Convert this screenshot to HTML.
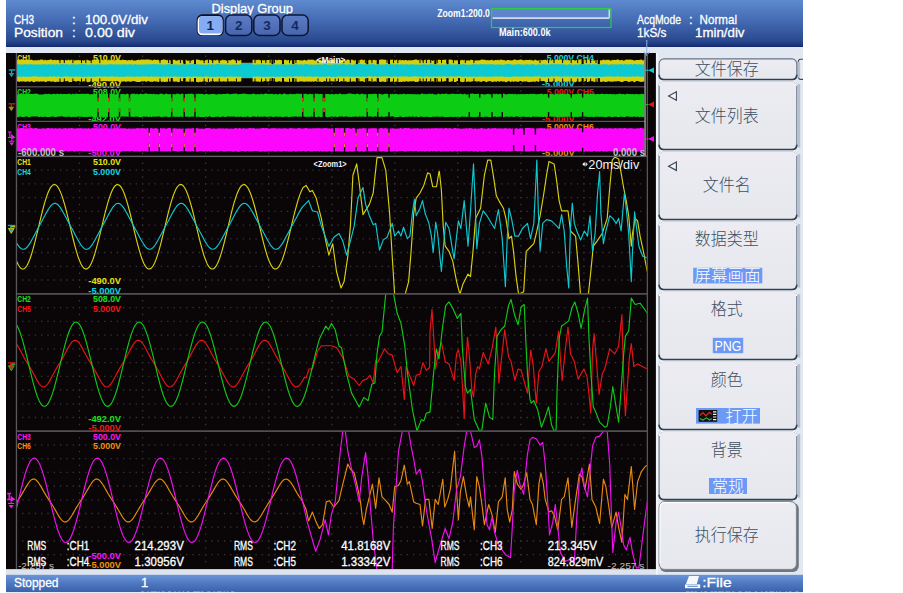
<!DOCTYPE html>
<html><head><meta charset="utf-8"><title>DL850 file save</title><style>html,body{margin:0;padding:0;background:#fff;overflow:hidden}svg{display:block}</style></head><body>
<svg width="903" height="593" viewBox="0 0 903 593" font-family='"Liberation Sans", "Noto Sans CJK SC", sans-serif'>
<defs>
<linearGradient id="hg" x1="0" y1="0" x2="0" y2="1"><stop offset="0" stop-color="#5e8ad0"/><stop offset="0.5" stop-color="#4066ae"/><stop offset="0.86" stop-color="#2b4a90"/><stop offset="0.96" stop-color="#1d3579"/><stop offset="1" stop-color="#13276a"/></linearGradient>
<linearGradient id="sg" x1="0" y1="0" x2="0" y2="1"><stop offset="0" stop-color="#6c95d8"/><stop offset="0.5" stop-color="#4d78c0"/><stop offset="1" stop-color="#3b62aa"/></linearGradient>
<linearGradient id="bg" x1="0" y1="0" x2="0" y2="1"><stop offset="0" stop-color="#ececf2"/><stop offset="1" stop-color="#e6e8ee"/></linearGradient>
</defs>
<rect width="903" height="593" fill="#fff"/>
<rect x="6" y="0" width="797" height="47" fill="url(#hg)"/>
<rect x="6" y="47" width="797" height="6" fill="#e2e8f1"/>
<rect x="655.9" y="53" width="147.10000000000002" height="522" fill="#e3e7ef"/>
<rect x="655.9" y="53" width="2.1" height="522" fill="#f3f5f9"/>
<rect x="6" y="53" width="649.9" height="516.4" fill="#0a0608"/>
<rect x="6" y="569.4" width="649.9" height="6" fill="#dde4ef"/>
<rect x="6" y="574.8" width="797" height="17.2" fill="url(#sg)"/>
<rect x="6" y="592" width="797" height="1" fill="#e8ecf4"/>
<text x="14.0" y="23.7" font-size="13.2" fill="#ffffff" textLength="20.0" lengthAdjust="spacingAndGlyphs" stroke="#ffffff" stroke-width="0.3">CH3</text>
<text x="72.0" y="23.7" font-size="13.2" fill="#ffffff" stroke="#ffffff" stroke-width="0.3">:</text>
<text x="85.0" y="23.7" font-size="13.2" fill="#ffffff" textLength="63.0" lengthAdjust="spacingAndGlyphs" stroke="#ffffff" stroke-width="0.3">100.0V/div</text>
<text x="14.0" y="36.5" font-size="13.2" fill="#ffffff" textLength="49.0" lengthAdjust="spacingAndGlyphs" stroke="#ffffff" stroke-width="0.3">Position</text>
<text x="72.0" y="36.5" font-size="13.2" fill="#ffffff" stroke="#ffffff" stroke-width="0.3">:</text>
<text x="85.0" y="36.5" font-size="13.2" fill="#ffffff" textLength="50.0" lengthAdjust="spacingAndGlyphs" stroke="#ffffff" stroke-width="0.3">0.00 div</text>
<text x="211.5" y="12.5" font-size="13.2" fill="#ffffff" textLength="81.5" lengthAdjust="spacingAndGlyphs" stroke="#ffffff" stroke-width="0.3">Display Group</text>
<linearGradient id="gb" x1="0" y1="0" x2="0" y2="1"><stop offset="0" stop-color="#5c7cc6"/><stop offset="1" stop-color="#4866ae"/></linearGradient>
<rect x="196.7" y="14.3" width="27" height="21.7" rx="5.5" fill="#0a1024"/>
<rect x="197.6" y="16.2" width="24.8" height="19" rx="4.5" fill="#fff"/>
<rect x="199.0" y="16.2" width="23.4" height="17.4" rx="3.5" fill="#84acf4"/>
<text x="210.3" y="30.0" font-size="13.5" fill="#12224a" font-weight="bold" text-anchor="middle">1</text>
<rect x="225.6" y="15.1" width="26.2" height="20.3" rx="5.5" fill="url(#gb)" stroke="#0c1530" stroke-width="1.5"/>
<text x="238.7" y="30.0" font-size="13.5" fill="#152a5c" font-weight="bold" text-anchor="middle">2</text>
<rect x="253.8" y="15.1" width="26.2" height="20.3" rx="5.5" fill="url(#gb)" stroke="#0c1530" stroke-width="1.5"/>
<text x="266.9" y="30.0" font-size="13.5" fill="#152a5c" font-weight="bold" text-anchor="middle">3</text>
<rect x="282.0" y="15.1" width="26.2" height="20.3" rx="5.5" fill="url(#gb)" stroke="#0c1530" stroke-width="1.5"/>
<text x="295.1" y="30.0" font-size="13.5" fill="#152a5c" font-weight="bold" text-anchor="middle">4</text>
<text x="437.3" y="16.7" font-size="10.2" fill="#ffffff" font-weight="bold" textLength="52.5" lengthAdjust="spacingAndGlyphs">Zoom1:200.0</text>
<rect x="491.5" y="8.5" width="119.5" height="9" fill="#5e84cc"/><rect x="491.5" y="8.5" width="119.5" height="19" fill="none" stroke="#2ccc48" stroke-width="1.2"/>
<rect x="492.5" y="17.4" width="117" height="1.4" fill="#f4f6fa"/>
<rect x="608.6" y="9.5" width="1.2" height="8" fill="#e8ecf4"/>
<text x="499.0" y="36.3" font-size="10.2" fill="#ffffff" font-weight="bold" textLength="51.5" lengthAdjust="spacingAndGlyphs">Main:600.0k</text>
<text x="637.0" y="23.7" font-size="13.2" fill="#ffffff" textLength="44.0" lengthAdjust="spacingAndGlyphs" stroke="#ffffff" stroke-width="0.3">AcqMode</text>
<text x="689.0" y="23.7" font-size="13.2" fill="#ffffff" stroke="#ffffff" stroke-width="0.3">:</text>
<text x="699.6" y="23.7" font-size="13.2" fill="#ffffff" textLength="37.4" lengthAdjust="spacingAndGlyphs" stroke="#ffffff" stroke-width="0.3">Normal</text>
<text x="637.0" y="36.5" font-size="13.2" fill="#ffffff" textLength="29.5" lengthAdjust="spacingAndGlyphs" stroke="#ffffff" stroke-width="0.3">1kS/s</text>
<text x="695.0" y="36.5" font-size="13.2" fill="#ffffff" textLength="49.5" lengthAdjust="spacingAndGlyphs" stroke="#ffffff" stroke-width="0.3">1min/div</text>
<path d="M646.8 40V56M644 51.5L646.8 55.5L649.6 51.5" stroke="#8fb0ea" stroke-width="1" fill="none"/>
<text x="17.3" y="60.5" font-size="9.9" fill="#e8e010" font-weight="bold" textLength="13.5" lengthAdjust="spacingAndGlyphs">CH1</text>
<text x="93.0" y="60.5" font-size="9.9" fill="#e8e010" font-weight="bold" textLength="28.0" lengthAdjust="spacingAndGlyphs">510.0V</text>
<text x="88.3" y="87.5" font-size="9.9" fill="#e8e010" font-weight="bold" textLength="32.7" lengthAdjust="spacingAndGlyphs">-490.0V</text>
<text x="17.3" y="95.0" font-size="9.9" fill="#18e020" font-weight="bold" textLength="13.5" lengthAdjust="spacingAndGlyphs">CH2</text>
<text x="93.0" y="95.0" font-size="9.9" fill="#18e020" font-weight="bold" textLength="28.0" lengthAdjust="spacingAndGlyphs">508.0V</text>
<text x="88.3" y="121.8" font-size="9.9" fill="#18e020" font-weight="bold" textLength="32.7" lengthAdjust="spacingAndGlyphs">-492.0V</text>
<text x="17.3" y="129.5" font-size="9.9" fill="#f818f8" font-weight="bold" textLength="13.5" lengthAdjust="spacingAndGlyphs">CH3</text>
<text x="93.0" y="129.5" font-size="9.9" fill="#f818f8" font-weight="bold" textLength="28.0" lengthAdjust="spacingAndGlyphs">500.0V</text>
<text x="88.3" y="156.1" font-size="9.9" fill="#f818f8" font-weight="bold" textLength="32.7" lengthAdjust="spacingAndGlyphs">-500.0V</text>
<text x="546.7" y="61.0" font-size="9.9" fill="#10d8e0" font-weight="bold" textLength="47.0" lengthAdjust="spacingAndGlyphs">5.000V CH4</text>
<text x="542.0" y="86.5" font-size="9.9" fill="#10d8e0" font-weight="bold" textLength="32.7" lengthAdjust="spacingAndGlyphs">-5.000V</text>
<text x="546.7" y="95.3" font-size="9.9" fill="#f01818" font-weight="bold" textLength="47.0" lengthAdjust="spacingAndGlyphs">5.000V CH5</text>
<text x="542.0" y="121.8" font-size="9.9" fill="#f01818" font-weight="bold" textLength="32.7" lengthAdjust="spacingAndGlyphs">-5.000V</text>
<text x="546.7" y="129.5" font-size="9.9" fill="#f09010" font-weight="bold" textLength="47.0" lengthAdjust="spacingAndGlyphs">5.000V CH6</text>
<text x="542.0" y="155.9" font-size="9.9" fill="#f09010" font-weight="bold" textLength="32.7" lengthAdjust="spacingAndGlyphs">-5.000V</text>
<rect x="79.0" y="55.6" width="1.2" height="1.2" fill="#4a484c"/>
<rect x="142.0" y="55.6" width="1.2" height="1.2" fill="#4a484c"/>
<rect x="205.0" y="55.6" width="1.2" height="1.2" fill="#4a484c"/>
<rect x="268.1" y="55.6" width="1.2" height="1.2" fill="#4a484c"/>
<rect x="331.1" y="55.6" width="1.2" height="1.2" fill="#4a484c"/>
<rect x="394.2" y="55.6" width="1.2" height="1.2" fill="#4a484c"/>
<rect x="457.2" y="55.6" width="1.2" height="1.2" fill="#4a484c"/>
<rect x="520.3" y="55.6" width="1.2" height="1.2" fill="#4a484c"/>
<rect x="583.3" y="55.6" width="1.2" height="1.2" fill="#4a484c"/>
<rect x="79.0" y="83.2" width="1.2" height="1.2" fill="#4a484c"/>
<rect x="142.0" y="83.2" width="1.2" height="1.2" fill="#4a484c"/>
<rect x="205.0" y="83.2" width="1.2" height="1.2" fill="#4a484c"/>
<rect x="268.1" y="83.2" width="1.2" height="1.2" fill="#4a484c"/>
<rect x="331.1" y="83.2" width="1.2" height="1.2" fill="#4a484c"/>
<rect x="394.2" y="83.2" width="1.2" height="1.2" fill="#4a484c"/>
<rect x="457.2" y="83.2" width="1.2" height="1.2" fill="#4a484c"/>
<rect x="520.3" y="83.2" width="1.2" height="1.2" fill="#4a484c"/>
<rect x="583.3" y="83.2" width="1.2" height="1.2" fill="#4a484c"/>
<rect x="79.0" y="90.4" width="1.2" height="1.2" fill="#4a484c"/>
<rect x="142.0" y="90.4" width="1.2" height="1.2" fill="#4a484c"/>
<rect x="205.0" y="90.4" width="1.2" height="1.2" fill="#4a484c"/>
<rect x="268.1" y="90.4" width="1.2" height="1.2" fill="#4a484c"/>
<rect x="331.1" y="90.4" width="1.2" height="1.2" fill="#4a484c"/>
<rect x="394.2" y="90.4" width="1.2" height="1.2" fill="#4a484c"/>
<rect x="457.2" y="90.4" width="1.2" height="1.2" fill="#4a484c"/>
<rect x="520.3" y="90.4" width="1.2" height="1.2" fill="#4a484c"/>
<rect x="583.3" y="90.4" width="1.2" height="1.2" fill="#4a484c"/>
<rect x="79.0" y="117.6" width="1.2" height="1.2" fill="#4a484c"/>
<rect x="142.0" y="117.6" width="1.2" height="1.2" fill="#4a484c"/>
<rect x="205.0" y="117.6" width="1.2" height="1.2" fill="#4a484c"/>
<rect x="268.1" y="117.6" width="1.2" height="1.2" fill="#4a484c"/>
<rect x="331.1" y="117.6" width="1.2" height="1.2" fill="#4a484c"/>
<rect x="394.2" y="117.6" width="1.2" height="1.2" fill="#4a484c"/>
<rect x="457.2" y="117.6" width="1.2" height="1.2" fill="#4a484c"/>
<rect x="520.3" y="117.6" width="1.2" height="1.2" fill="#4a484c"/>
<rect x="583.3" y="117.6" width="1.2" height="1.2" fill="#4a484c"/>
<rect x="79.0" y="124.8" width="1.2" height="1.2" fill="#4a484c"/>
<rect x="142.0" y="124.8" width="1.2" height="1.2" fill="#4a484c"/>
<rect x="205.0" y="124.8" width="1.2" height="1.2" fill="#4a484c"/>
<rect x="268.1" y="124.8" width="1.2" height="1.2" fill="#4a484c"/>
<rect x="331.1" y="124.8" width="1.2" height="1.2" fill="#4a484c"/>
<rect x="394.2" y="124.8" width="1.2" height="1.2" fill="#4a484c"/>
<rect x="457.2" y="124.8" width="1.2" height="1.2" fill="#4a484c"/>
<rect x="520.3" y="124.8" width="1.2" height="1.2" fill="#4a484c"/>
<rect x="583.3" y="124.8" width="1.2" height="1.2" fill="#4a484c"/>
<rect x="79.0" y="152.6" width="1.2" height="1.2" fill="#4a484c"/>
<rect x="142.0" y="152.6" width="1.2" height="1.2" fill="#4a484c"/>
<rect x="205.0" y="152.6" width="1.2" height="1.2" fill="#4a484c"/>
<rect x="268.1" y="152.6" width="1.2" height="1.2" fill="#4a484c"/>
<rect x="331.1" y="152.6" width="1.2" height="1.2" fill="#4a484c"/>
<rect x="394.2" y="152.6" width="1.2" height="1.2" fill="#4a484c"/>
<rect x="457.2" y="152.6" width="1.2" height="1.2" fill="#4a484c"/>
<rect x="520.3" y="152.6" width="1.2" height="1.2" fill="#4a484c"/>
<rect x="583.3" y="152.6" width="1.2" height="1.2" fill="#4a484c"/>
<path d="M17.0 59.8L18.0 59.6L19.0 60.2L20.0 59.5L21.0 60.1L22.0 59.9L23.0 59.5L24.0 60.1L25.0 59.4L26.0 60.0L27.0 59.5L28.0 59.5L29.0 60.0L30.0 60.5L31.0 59.6L32.0 59.7L33.0 60.2L34.0 60.6L35.0 60.2L36.0 59.9L37.0 60.7L38.0 59.5L39.0 60.5L40.0 59.8L41.0 59.6L42.0 59.6L43.0 59.8L44.0 60.5L45.0 59.6L46.0 60.2L47.0 60.2L48.0 59.9L49.0 60.1L50.0 59.5L51.0 59.5L52.0 59.7L53.0 60.3L54.0 60.0L55.0 59.8L56.0 60.2L57.0 60.0L58.0 59.8L59.0 60.4L60.0 60.3L61.0 59.7L62.0 60.1L63.0 60.1L64.0 60.5L65.0 60.3L66.0 59.8L67.0 60.7L68.0 59.6L69.0 59.9L70.0 60.4L71.0 59.6L72.0 60.0L73.0 59.5L74.0 60.3L75.0 60.4L76.0 60.1L77.0 60.5L78.0 59.8L79.0 60.3L80.0 60.2L81.0 60.2L82.0 60.0L83.0 60.5L84.0 60.6L85.0 60.0L86.0 60.3L87.0 59.5L88.0 60.3L89.0 60.2L90.0 60.7L91.0 60.5L92.0 59.8L93.0 59.9L94.0 60.3L95.0 59.4L96.0 60.0L97.0 59.6L98.0 59.6L99.0 59.5L100.0 60.4L101.0 59.6L102.0 59.7L103.0 59.9L104.0 60.5L105.0 59.5L106.0 60.0L107.0 60.1L108.0 60.5L109.0 60.5L110.0 60.5L111.0 59.8L112.0 59.9L113.0 59.9L114.0 60.5L115.0 60.6L116.0 59.6L117.0 59.6L118.0 59.7L119.0 59.7L120.0 60.0L121.0 60.2L122.0 59.7L123.0 59.4L124.0 59.9L125.0 59.9L126.0 60.1L127.0 60.6L128.0 60.3L129.0 60.1L130.0 60.2L131.0 60.3L132.0 59.5L133.0 60.6L134.0 60.4L135.0 60.5L136.0 60.4L137.0 59.9L138.0 59.9L139.0 59.5L140.0 60.2L141.0 59.5L142.0 59.5L143.0 59.7L144.0 59.6L145.0 59.8L146.0 59.5L147.0 59.4L148.0 59.6L149.0 59.5L150.0 59.9L151.0 59.4L152.0 60.5L153.0 60.2L154.0 59.6L155.0 59.7L156.0 59.9L157.0 59.9L158.0 59.6L159.0 60.5L160.0 60.7L161.0 60.0L162.0 60.0L163.0 59.5L164.0 59.5L165.0 59.8L166.0 59.7L167.0 60.5L168.0 59.6L169.0 59.4L170.0 60.6L171.0 60.1L172.0 59.6L173.0 60.1L174.0 59.4L175.0 60.1L176.0 60.7L177.0 60.5L178.0 60.3L179.0 59.7L180.0 59.9L181.0 59.6L182.0 60.4L183.0 60.1L184.0 60.4L185.0 59.8L186.0 59.7L187.0 60.5L188.0 60.7L189.0 60.5L190.0 60.4L191.0 60.5L192.0 60.4L193.0 59.7L194.0 60.1L195.0 59.9L196.0 59.4L197.0 59.4L198.0 59.8L199.0 59.7L200.0 60.3L201.0 60.6L202.0 60.0L203.0 60.6L204.0 60.7L205.0 60.6L206.0 59.9L207.0 59.7L208.0 59.7L209.0 59.7L210.0 59.7L211.0 60.2L212.0 60.6L213.0 60.5L214.0 60.0L215.0 60.2L216.0 60.4L217.0 59.5L218.0 60.3L219.0 60.6L220.0 60.4L221.0 60.4L222.0 60.0L223.0 59.6L224.0 60.4L225.0 59.8L226.0 60.4L227.0 60.7L228.0 59.9L229.0 59.9L230.0 60.6L231.0 60.3L232.0 59.6L233.0 59.6L234.0 59.6L235.0 60.6L236.0 60.4L237.0 59.6L238.0 60.5L239.0 60.7L240.0 60.3L241.0 59.9L242.0 60.1L243.0 59.6L244.0 59.4L245.0 60.7L246.0 60.2L247.0 60.1L248.0 60.6L249.0 60.0L250.0 60.5L251.0 60.5L252.0 59.7L253.0 59.7L254.0 59.8L255.0 59.7L256.0 60.2L257.0 59.7L258.0 59.9L259.0 59.6L260.0 60.6L261.0 59.9L262.0 60.0L263.0 60.2L264.0 60.6L265.0 59.9L266.0 60.6L267.0 60.1L268.0 60.1L269.0 60.1L270.0 59.4L271.0 60.0L272.0 59.6L273.0 59.4L274.0 60.4L275.0 59.6L276.0 60.0L277.0 60.3L278.0 60.1L279.0 59.8L280.0 60.1L281.0 60.1L282.0 60.4L283.0 59.5L284.0 60.1L285.0 59.7L286.0 59.8L287.0 60.4L288.0 60.1L289.0 60.1L290.0 60.4L291.0 60.6L292.0 60.0L293.0 60.2L294.0 60.1L295.0 60.1L296.0 60.3L297.0 60.0L298.0 60.1L299.0 60.0L300.0 60.6L301.0 60.3L302.0 60.5L303.0 60.6L304.0 59.7L305.0 60.1L306.0 60.6L307.0 60.5L308.0 59.6L309.0 59.6L310.0 60.0L311.0 59.5L312.0 59.7L313.0 59.5L314.0 60.3L315.0 60.4L316.0 60.6L317.0 59.6L318.0 60.3L319.0 60.3L320.0 59.6L321.0 60.5L322.0 60.7L323.0 59.7L324.0 60.6L325.0 59.9L326.0 60.0L327.0 60.7L328.0 60.5L329.0 59.6L330.0 60.0L331.0 60.1L332.0 59.8L333.0 59.7L334.0 59.8L335.0 60.3L336.0 59.4L337.0 60.1L338.0 60.0L339.0 59.4L340.0 59.8L341.0 60.2L342.0 60.1L343.0 59.5L344.0 60.7L345.0 60.4L346.0 60.7L347.0 59.5L348.0 59.7L349.0 59.5L350.0 60.4L351.0 59.8L352.0 59.6L353.0 59.9L354.0 60.6L355.0 60.5L356.0 59.7L357.0 59.6L358.0 60.6L359.0 60.1L360.0 60.3L361.0 59.5L362.0 59.5L363.0 60.3L364.0 60.0L365.0 59.5L366.0 60.6L367.0 60.2L368.0 60.4L369.0 59.5L370.0 60.5L371.0 59.5L372.0 60.5L373.0 60.0L374.0 59.8L375.0 60.1L376.0 60.6L377.0 59.7L378.0 59.6L379.0 60.1L380.0 59.7L381.0 59.5L382.0 59.6L383.0 59.5L384.0 59.7L385.0 59.8L386.0 59.8L387.0 60.4L388.0 59.8L389.0 60.1L390.0 59.6L391.0 59.9L392.0 59.4L393.0 59.7L394.0 59.4L395.0 60.4L396.0 60.1L397.0 59.6L398.0 60.0L399.0 60.6L400.0 59.5L401.0 60.5L402.0 60.0L403.0 60.0L404.0 60.5L405.0 59.9L406.0 60.1L407.0 60.3L408.0 60.7L409.0 59.8L410.0 60.5L411.0 60.3L412.0 60.2L413.0 59.9L414.0 59.9L415.0 59.5L416.0 59.6L417.0 59.5L418.0 60.4L419.0 59.7L420.0 59.6L421.0 59.5L422.0 60.5L423.0 60.5L424.0 60.3L425.0 59.8L426.0 59.7L427.0 59.8L428.0 60.0L429.0 59.6L430.0 60.0L431.0 59.7L432.0 60.7L433.0 60.7L434.0 60.1L435.0 59.7L436.0 60.7L437.0 59.8L438.0 59.9L439.0 59.4L440.0 59.9L441.0 60.0L442.0 60.1L443.0 59.7L444.0 60.1L445.0 59.4L446.0 59.7L447.0 59.5L448.0 59.9L449.0 59.5L450.0 59.4L451.0 59.8L452.0 59.7L453.0 60.2L454.0 60.1L455.0 60.4L456.0 60.3L457.0 60.3L458.0 60.5L459.0 59.9L460.0 59.8L461.0 60.7L462.0 59.6L463.0 60.3L464.0 60.2L465.0 59.5L466.0 60.5L467.0 60.6L468.0 60.2L469.0 60.4L470.0 60.5L471.0 59.6L472.0 60.1L473.0 60.1L474.0 60.5L475.0 60.4L476.0 60.5L477.0 60.2L478.0 60.6L479.0 60.3L480.0 60.3L481.0 59.7L482.0 59.4L483.0 59.6L484.0 59.9L485.0 59.5L486.0 60.5L487.0 60.1L488.0 60.2L489.0 60.2L490.0 60.3L491.0 60.0L492.0 59.4L493.0 60.4L494.0 60.4L495.0 60.1L496.0 60.1L497.0 60.3L498.0 59.5L499.0 60.4L500.0 59.7L501.0 59.5L502.0 59.7L503.0 60.3L504.0 59.7L505.0 60.4L506.0 60.7L507.0 60.0L508.0 59.9L509.0 60.0L510.0 60.3L511.0 60.4L512.0 60.2L513.0 60.2L514.0 59.5L515.0 59.6L516.0 59.7L517.0 60.4L518.0 59.8L519.0 60.1L520.0 59.4L521.0 59.5L522.0 59.7L523.0 60.3L524.0 60.3L525.0 60.3L526.0 59.8L527.0 60.1L528.0 60.0L529.0 60.0L530.0 59.6L531.0 60.6L532.0 59.7L533.0 60.7L534.0 60.6L535.0 59.4L536.0 60.0L537.0 60.5L538.0 60.7L539.0 60.0L540.0 59.7L541.0 59.7L542.0 60.6L543.0 59.7L544.0 60.2L545.0 59.6L546.0 60.1L547.0 60.6L548.0 59.6L549.0 60.5L550.0 60.1L551.0 60.6L552.0 60.3L553.0 59.7L554.0 60.6L555.0 60.0L556.0 59.4L557.0 59.4L558.0 60.0L559.0 60.0L560.0 59.8L561.0 59.6L562.0 59.8L563.0 59.8L564.0 60.5L565.0 59.4L566.0 60.4L567.0 60.5L568.0 59.6L569.0 60.6L570.0 60.3L571.0 60.6L572.0 59.8L573.0 59.9L574.0 59.9L575.0 60.7L576.0 60.2L577.0 59.9L578.0 60.0L579.0 59.8L580.0 59.5L581.0 59.5L582.0 60.5L583.0 59.8L584.0 60.6L585.0 59.7L586.0 59.7L587.0 60.1L588.0 59.6L589.0 59.9L590.0 60.6L591.0 60.5L592.0 60.5L593.0 60.2L594.0 60.6L595.0 60.6L596.0 60.1L597.0 60.3L598.0 59.5L599.0 60.4L600.0 60.0L601.0 60.4L602.0 60.2L603.0 59.8L604.0 59.5L605.0 60.6L606.0 59.6L607.0 60.0L608.0 59.8L609.0 59.8L610.0 60.4L611.0 60.7L612.0 59.7L613.0 60.3L614.0 59.8L615.0 60.1L616.0 59.9L617.0 59.6L618.0 59.6L619.0 59.7L620.0 60.6L621.0 60.0L622.0 59.7L623.0 60.6L624.0 60.7L625.0 60.0L626.0 59.6L627.0 59.7L628.0 59.5L629.0 59.8L630.0 59.5L631.0 59.7L632.0 59.7L633.0 60.1L634.0 60.6L635.0 60.4L636.0 59.9L637.0 59.9L638.0 60.1L639.0 59.9L640.0 59.8L641.0 59.5L642.0 59.8L643.0 60.7L644.0 59.6L644.3 60.1L644.3 81.4L644.0 81.1L643.0 81.9L642.0 81.8L641.0 81.9L640.0 81.7L639.0 81.6L638.0 81.0L637.0 81.1L636.0 81.1L635.0 82.2L634.0 82.2L633.0 81.3L632.0 81.0L631.0 81.6L630.0 81.4L629.0 82.2L628.0 81.7L627.0 81.0L626.0 81.1L625.0 81.1L624.0 80.9L623.0 81.9L622.0 82.1L621.0 82.0L620.0 81.5L619.0 81.3L618.0 81.0L617.0 81.3L616.0 81.4L615.0 81.2L614.0 81.6L613.0 81.5L612.0 82.1L611.0 81.2L610.0 81.9L609.0 81.0L608.0 81.4L607.0 81.8L606.0 82.0L605.0 81.9L604.0 81.4L603.0 81.3L602.0 82.1L601.0 82.1L600.0 81.5L599.0 81.4L598.0 81.7L597.0 81.9L596.0 81.4L595.0 82.2L594.0 81.8L593.0 81.6L592.0 81.0L591.0 81.4L590.0 81.1L589.0 81.6L588.0 81.9L587.0 81.9L586.0 81.0L585.0 81.3L584.0 81.8L583.0 82.2L582.0 81.6L581.0 81.3L580.0 81.7L579.0 81.9L578.0 81.3L577.0 81.0L576.0 81.9L575.0 82.2L574.0 81.8L573.0 81.7L572.0 81.3L571.0 81.9L570.0 81.2L569.0 81.2L568.0 81.5L567.0 81.9L566.0 80.9L565.0 81.8L564.0 81.1L563.0 81.9L562.0 81.9L561.0 81.2L560.0 81.8L559.0 81.0L558.0 81.6L557.0 82.0L556.0 81.9L555.0 81.7L554.0 81.3L553.0 81.0L552.0 82.0L551.0 81.7L550.0 81.9L549.0 80.9L548.0 82.0L547.0 82.1L546.0 82.1L545.0 81.7L544.0 81.0L543.0 81.1L542.0 81.2L541.0 80.9L540.0 81.0L539.0 81.8L538.0 82.0L537.0 81.0L536.0 81.2L535.0 82.2L534.0 81.3L533.0 81.7L532.0 81.7L531.0 81.8L530.0 82.0L529.0 82.2L528.0 81.8L527.0 81.7L526.0 81.0L525.0 82.0L524.0 80.9L523.0 81.9L522.0 81.7L521.0 81.1L520.0 81.1L519.0 81.6L518.0 82.1L517.0 81.6L516.0 81.7L515.0 81.0L514.0 81.9L513.0 81.7L512.0 81.0L511.0 82.2L510.0 81.7L509.0 81.1L508.0 81.2L507.0 82.1L506.0 82.2L505.0 82.1L504.0 81.0L503.0 81.9L502.0 81.2L501.0 81.0L500.0 81.8L499.0 81.8L498.0 81.0L497.0 81.4L496.0 81.9L495.0 81.3L494.0 81.8L493.0 81.8L492.0 82.2L491.0 81.2L490.0 81.0L489.0 81.4L488.0 81.0L487.0 82.2L486.0 81.9L485.0 81.6L484.0 81.0L483.0 81.0L482.0 81.7L481.0 81.9L480.0 81.6L479.0 81.6L478.0 81.0L477.0 82.0L476.0 81.2L475.0 81.2L474.0 81.1L473.0 81.2L472.0 81.4L471.0 81.8L470.0 81.8L469.0 81.7L468.0 81.2L467.0 82.1L466.0 81.9L465.0 81.2L464.0 81.9L463.0 82.1L462.0 82.2L461.0 81.5L460.0 81.8L459.0 80.9L458.0 81.1L457.0 80.9L456.0 81.9L455.0 82.1L454.0 82.1L453.0 81.6L452.0 81.3L451.0 81.6L450.0 81.9L449.0 81.7L448.0 81.4L447.0 81.3L446.0 81.2L445.0 81.1L444.0 81.3L443.0 82.0L442.0 81.1L441.0 81.8L440.0 81.5L439.0 81.7L438.0 81.2L437.0 81.9L436.0 81.9L435.0 81.9L434.0 82.0L433.0 81.1L432.0 81.4L431.0 81.8L430.0 81.7L429.0 80.9L428.0 81.5L427.0 81.9L426.0 81.1L425.0 81.4L424.0 80.9L423.0 82.1L422.0 81.6L421.0 81.1L420.0 81.1L419.0 81.0L418.0 82.1L417.0 81.8L416.0 82.0L415.0 82.0L414.0 80.9L413.0 81.4L412.0 81.0L411.0 81.7L410.0 81.1L409.0 81.6L408.0 81.9L407.0 81.2L406.0 81.0L405.0 82.1L404.0 81.4L403.0 81.4L402.0 81.9L401.0 81.7L400.0 82.0L399.0 81.9L398.0 81.9L397.0 81.4L396.0 81.4L395.0 81.9L394.0 82.2L393.0 81.8L392.0 81.3L391.0 82.0L390.0 81.8L389.0 81.9L388.0 81.2L387.0 81.5L386.0 82.1L385.0 82.1L384.0 81.7L383.0 81.5L382.0 81.4L381.0 82.1L380.0 82.0L379.0 81.3L378.0 81.7L377.0 81.8L376.0 81.8L375.0 81.0L374.0 81.8L373.0 81.5L372.0 81.7L371.0 81.7L370.0 81.1L369.0 80.9L368.0 81.7L367.0 81.9L366.0 81.3L365.0 81.9L364.0 82.2L363.0 81.0L362.0 81.6L361.0 81.1L360.0 81.7L359.0 81.1L358.0 81.6L357.0 82.0L356.0 82.2L355.0 81.5L354.0 81.4L353.0 81.0L352.0 82.1L351.0 81.4L350.0 81.7L349.0 81.5L348.0 82.0L347.0 81.8L346.0 81.5L345.0 81.0L344.0 82.1L343.0 81.6L342.0 81.2L341.0 80.9L340.0 81.9L339.0 82.0L338.0 81.0L337.0 80.9L336.0 81.6L335.0 82.1L334.0 81.0L333.0 81.7L332.0 81.0L331.0 81.4L330.0 81.1L329.0 82.0L328.0 81.2L327.0 81.9L326.0 81.7L325.0 81.1L324.0 81.1L323.0 82.0L322.0 81.9L321.0 81.7L320.0 81.5L319.0 81.7L318.0 82.0L317.0 81.9L316.0 81.3L315.0 81.0L314.0 82.1L313.0 81.5L312.0 81.2L311.0 82.2L310.0 81.1L309.0 82.0L308.0 81.4L307.0 81.5L306.0 81.4L305.0 81.8L304.0 81.7L303.0 81.4L302.0 81.6L301.0 81.3L300.0 81.6L299.0 81.6L298.0 82.2L297.0 81.4L296.0 81.6L295.0 81.9L294.0 81.2L293.0 81.2L292.0 81.6L291.0 82.0L290.0 81.6L289.0 82.1L288.0 82.0L287.0 81.6L286.0 82.1L285.0 81.6L284.0 81.5L283.0 82.1L282.0 81.4L281.0 82.1L280.0 81.2L279.0 81.2L278.0 81.5L277.0 82.1L276.0 81.5L275.0 81.7L274.0 81.0L273.0 82.0L272.0 81.1L271.0 80.9L270.0 81.2L269.0 81.1L268.0 81.9L267.0 80.9L266.0 81.6L265.0 81.0L264.0 81.0L263.0 82.0L262.0 81.2L261.0 81.0L260.0 82.1L259.0 81.7L258.0 81.2L257.0 82.0L256.0 81.0L255.0 81.8L254.0 81.1L253.0 82.0L252.0 81.5L251.0 81.0L250.0 81.9L249.0 81.9L248.0 81.5L247.0 81.8L246.0 82.2L245.0 82.0L244.0 82.0L243.0 81.0L242.0 81.3L241.0 81.0L240.0 82.0L239.0 81.2L238.0 82.1L237.0 81.5L236.0 81.4L235.0 81.7L234.0 81.1L233.0 81.5L232.0 81.4L231.0 81.1L230.0 82.1L229.0 80.9L228.0 81.4L227.0 81.7L226.0 81.2L225.0 81.9L224.0 80.9L223.0 81.4L222.0 81.7L221.0 81.2L220.0 81.6L219.0 82.0L218.0 81.2L217.0 82.1L216.0 81.1L215.0 81.9L214.0 81.4L213.0 80.9L212.0 81.4L211.0 81.3L210.0 81.8L209.0 82.2L208.0 82.2L207.0 82.0L206.0 81.4L205.0 81.6L204.0 81.5L203.0 81.0L202.0 82.0L201.0 81.9L200.0 81.4L199.0 82.2L198.0 82.2L197.0 81.7L196.0 82.1L195.0 81.7L194.0 81.9L193.0 81.4L192.0 81.4L191.0 81.9L190.0 81.4L189.0 81.6L188.0 82.0L187.0 81.0L186.0 81.9L185.0 82.0L184.0 82.1L183.0 81.4L182.0 81.1L181.0 81.2L180.0 81.7L179.0 81.9L178.0 82.2L177.0 81.4L176.0 81.5L175.0 81.7L174.0 81.4L173.0 81.6L172.0 81.0L171.0 81.2L170.0 81.9L169.0 81.0L168.0 82.1L167.0 81.5L166.0 81.7L165.0 81.9L164.0 82.1L163.0 81.2L162.0 82.2L161.0 81.5L160.0 81.0L159.0 82.0L158.0 81.9L157.0 81.4L156.0 81.5L155.0 81.4L154.0 81.1L153.0 82.0L152.0 81.8L151.0 81.8L150.0 82.1L149.0 81.0L148.0 81.2L147.0 81.3L146.0 82.2L145.0 81.1L144.0 81.2L143.0 81.6L142.0 81.2L141.0 81.6L140.0 81.9L139.0 82.1L138.0 81.9L137.0 82.1L136.0 81.8L135.0 81.2L134.0 81.3L133.0 81.1L132.0 81.3L131.0 81.9L130.0 81.5L129.0 81.6L128.0 81.2L127.0 81.5L126.0 81.9L125.0 81.4L124.0 80.9L123.0 81.9L122.0 81.1L121.0 82.2L120.0 81.9L119.0 81.9L118.0 81.2L117.0 81.0L116.0 81.2L115.0 81.8L114.0 81.1L113.0 81.8L112.0 81.9L111.0 81.0L110.0 81.4L109.0 81.3L108.0 81.3L107.0 80.9L106.0 81.6L105.0 81.1L104.0 81.3L103.0 81.1L102.0 81.6L101.0 81.3L100.0 81.5L99.0 81.8L98.0 81.9L97.0 81.4L96.0 82.1L95.0 81.0L94.0 82.0L93.0 82.2L92.0 82.1L91.0 81.0L90.0 81.8L89.0 82.0L88.0 82.2L87.0 82.1L86.0 81.3L85.0 81.4L84.0 81.3L83.0 81.2L82.0 82.1L81.0 81.4L80.0 81.7L79.0 81.1L78.0 81.1L77.0 81.0L76.0 82.1L75.0 81.1L74.0 81.0L73.0 81.0L72.0 82.1L71.0 81.9L70.0 82.1L69.0 82.2L68.0 81.1L67.0 81.1L66.0 81.4L65.0 81.1L64.0 81.4L63.0 81.8L62.0 82.1L61.0 82.1L60.0 81.2L59.0 81.9L58.0 81.8L57.0 81.6L56.0 82.2L55.0 81.9L54.0 81.8L53.0 81.3L52.0 81.7L51.0 81.8L50.0 80.9L49.0 81.5L48.0 81.1L47.0 81.4L46.0 82.2L45.0 81.7L44.0 81.6L43.0 81.2L42.0 81.7L41.0 81.3L40.0 81.5L39.0 81.9L38.0 81.1L37.0 82.1L36.0 81.1L35.0 82.0L34.0 82.2L33.0 81.9L32.0 81.2L31.0 80.9L30.0 82.2L29.0 81.6L28.0 81.6L27.0 81.2L26.0 82.0L25.0 81.6L24.0 81.7L23.0 81.1L22.0 81.9L21.0 81.0L20.0 81.8L19.0 81.9L18.0 81.3L17.0 81.6Z" fill="#d6cf0e"/>
<path d="M17.0 64.1L18.0 64.5L19.0 64.1L20.0 64.6L21.0 64.6L22.0 64.6L23.0 64.5L24.0 64.3L25.0 64.3L26.0 64.3L27.0 64.7L28.0 64.1L29.0 64.7L30.0 64.0L31.0 64.2L32.0 64.2L33.0 64.7L34.0 64.4L35.0 64.3L36.0 64.7L37.0 64.2L38.0 64.4L39.0 64.4L40.0 64.6L41.0 64.6L42.0 64.5L43.0 64.3L44.0 64.3L45.0 64.1L46.0 64.7L47.0 64.5L48.0 64.6L49.0 64.1L50.0 64.4L51.0 64.6L52.0 64.5L53.0 64.1L54.0 64.4L55.0 64.7L56.0 64.2L57.0 64.2L58.0 64.2L59.0 64.6L60.0 64.7L61.0 64.1L62.0 64.1L63.0 64.2L64.0 64.3L65.0 64.4L66.0 64.1L67.0 64.3L68.0 64.2L69.0 64.8L70.0 64.6L71.0 64.1L72.0 64.8L73.0 64.1L74.0 64.3L75.0 64.8L76.0 64.6L77.0 64.6L78.0 64.3L79.0 64.2L80.0 64.5L81.0 64.1L82.0 64.2L83.0 64.3L84.0 64.0L85.0 64.3L86.0 64.6L87.0 64.6L88.0 64.4L89.0 64.5L90.0 64.4L91.0 64.1L92.0 64.5L93.0 64.3L94.0 64.6L95.0 64.7L96.0 64.3L97.0 64.5L98.0 64.6L99.0 64.3L100.0 64.2L101.0 64.6L102.0 64.7L103.0 64.6L104.0 64.6L105.0 64.7L106.0 64.5L107.0 64.5L108.0 64.4L109.0 64.3L110.0 64.5L111.0 64.1L112.0 64.3L113.0 64.6L114.0 64.6L115.0 64.5L116.0 64.2L117.0 64.3L118.0 64.4L119.0 64.5L120.0 64.3L121.0 64.5L122.0 64.7L123.0 64.1L124.0 64.5L125.0 64.6L126.0 64.3L127.0 64.4L128.0 64.8L129.0 64.0L130.0 64.4L131.0 64.1L132.0 64.6L133.0 64.8L134.0 64.4L135.0 64.1L136.0 64.5L137.0 64.4L138.0 64.6L139.0 64.4L140.0 64.5L141.0 64.7L142.0 64.4L143.0 64.3L144.0 64.8L145.0 64.2L146.0 64.5L147.0 64.3L148.0 64.6L149.0 64.1L150.0 64.8L151.0 64.3L152.0 64.0L153.0 64.2L154.0 64.3L155.0 64.0L156.0 64.3L157.0 64.3L158.0 64.6L159.0 64.3L160.0 64.2L161.0 64.2L162.0 64.6L163.0 64.8L164.0 64.4L165.0 64.2L166.0 64.6L167.0 64.3L168.0 64.2L169.0 64.1L170.0 64.6L171.0 64.6L172.0 64.5L173.0 64.4L174.0 64.4L175.0 64.2L176.0 64.8L177.0 64.3L178.0 64.5L179.0 64.7L180.0 64.7L181.0 64.4L182.0 64.2L183.0 64.4L184.0 64.1L185.0 64.7L186.0 64.3L187.0 64.7L188.0 64.2L189.0 64.3L190.0 64.2L191.0 64.3L192.0 64.1L193.0 64.0L194.0 64.6L195.0 64.2L196.0 64.2L197.0 64.2L198.0 64.4L199.0 64.3L200.0 64.5L201.0 64.5L202.0 64.3L203.0 64.7L204.0 64.7L205.0 64.0L206.0 64.7L207.0 64.7L208.0 64.6L209.0 64.1L210.0 64.7L211.0 64.5L212.0 64.0L213.0 64.0L214.0 64.8L215.0 64.5L216.0 64.2L217.0 64.1L218.0 64.1L219.0 64.2L220.0 64.6L221.0 64.3L222.0 64.1L223.0 64.7L224.0 64.6L225.0 64.1L226.0 64.7L227.0 64.5L228.0 64.6L229.0 64.5L230.0 64.7L231.0 64.6L232.0 64.7L233.0 64.2L234.0 64.6L235.0 64.4L236.0 64.6L237.0 64.4L238.0 64.7L239.0 64.4L240.0 64.2L241.0 64.2L242.0 64.1L243.0 64.4L244.0 64.0L245.0 64.4L246.0 64.1L247.0 64.4L248.0 64.4L249.0 64.4L250.0 64.7L251.0 64.0L252.0 64.7L253.0 64.4L254.0 64.5L255.0 64.5L256.0 64.7L257.0 64.3L258.0 64.3L259.0 64.8L260.0 64.1L261.0 64.5L262.0 64.5L263.0 64.0L264.0 64.5L265.0 64.5L266.0 64.7L267.0 64.3L268.0 64.8L269.0 64.4L270.0 64.4L271.0 64.7L272.0 64.0L273.0 64.6L274.0 64.5L275.0 64.3L276.0 64.7L277.0 64.3L278.0 64.4L279.0 64.4L280.0 64.6L281.0 64.2L282.0 64.3L283.0 64.3L284.0 64.4L285.0 64.7L286.0 64.2L287.0 64.7L288.0 64.3L289.0 64.4L290.0 64.2L291.0 64.4L292.0 64.8L293.0 64.5L294.0 64.6L295.0 64.3L296.0 64.3L297.0 64.2L298.0 64.5L299.0 64.5L300.0 64.6L301.0 64.0L302.0 64.6L303.0 64.7L304.0 64.4L305.0 64.0L306.0 64.2L307.0 64.0L308.0 64.2L309.0 64.7L310.0 64.5L311.0 64.5L312.0 64.6L313.0 64.7L314.0 64.5L315.0 64.5L316.0 64.5L317.0 64.6L318.0 64.5L319.0 64.5L320.0 64.2L321.0 64.5L322.0 64.4L323.0 64.6L324.0 64.1L325.0 64.1L326.0 64.0L327.0 64.6L328.0 64.7L329.0 64.5L330.0 64.3L331.0 64.7L332.0 64.6L333.0 64.4L334.0 64.2L335.0 64.2L336.0 64.3L337.0 64.3L338.0 64.3L339.0 64.5L340.0 64.7L341.0 64.0L342.0 64.5L343.0 64.0L344.0 64.1L345.0 64.6L346.0 64.5L347.0 64.7L348.0 64.4L349.0 64.0L350.0 64.3L351.0 64.5L352.0 64.8L353.0 64.8L354.0 64.4L355.0 64.3L356.0 64.1L357.0 64.5L358.0 64.2L359.0 64.1L360.0 64.0L361.0 64.0L362.0 64.5L363.0 64.1L364.0 64.8L365.0 64.1L366.0 64.7L367.0 64.1L368.0 64.0L369.0 64.6L370.0 64.2L371.0 64.6L372.0 64.1L373.0 64.0L374.0 64.6L375.0 64.6L376.0 64.7L377.0 64.6L378.0 64.1L379.0 64.5L380.0 64.6L381.0 64.4L382.0 64.7L383.0 64.2L384.0 64.8L385.0 64.6L386.0 64.0L387.0 64.0L388.0 64.5L389.0 64.7L390.0 64.1L391.0 64.2L392.0 64.6L393.0 64.1L394.0 64.7L395.0 64.4L396.0 64.0L397.0 64.3L398.0 64.5L399.0 64.4L400.0 64.5L401.0 64.1L402.0 64.6L403.0 64.3L404.0 64.5L405.0 64.5L406.0 64.3L407.0 64.3L408.0 64.6L409.0 64.8L410.0 64.6L411.0 64.5L412.0 64.2L413.0 64.0L414.0 64.8L415.0 64.6L416.0 64.7L417.0 64.3L418.0 64.5L419.0 64.8L420.0 64.7L421.0 64.5L422.0 64.2L423.0 64.3L424.0 64.7L425.0 64.3L426.0 64.5L427.0 64.5L428.0 64.7L429.0 64.6L430.0 64.2L431.0 64.0L432.0 64.2L433.0 64.3L434.0 64.5L435.0 64.7L436.0 64.7L437.0 64.0L438.0 64.7L439.0 64.6L440.0 64.7L441.0 64.5L442.0 64.2L443.0 64.7L444.0 64.6L445.0 64.5L446.0 64.7L447.0 64.3L448.0 64.1L449.0 64.4L450.0 64.6L451.0 64.2L452.0 64.6L453.0 64.7L454.0 64.2L455.0 64.5L456.0 64.5L457.0 64.4L458.0 64.2L459.0 64.2L460.0 64.6L461.0 64.6L462.0 64.4L463.0 64.1L464.0 64.6L465.0 64.6L466.0 64.2L467.0 64.5L468.0 64.7L469.0 64.7L470.0 64.4L471.0 64.4L472.0 64.5L473.0 64.2L474.0 64.2L475.0 64.1L476.0 64.6L477.0 64.3L478.0 64.5L479.0 64.3L480.0 64.4L481.0 64.1L482.0 64.0L483.0 64.8L484.0 64.3L485.0 64.1L486.0 64.5L487.0 64.6L488.0 64.1L489.0 64.5L490.0 64.3L491.0 64.4L492.0 64.0L493.0 64.0L494.0 64.8L495.0 64.7L496.0 64.4L497.0 64.5L498.0 64.2L499.0 64.6L500.0 64.3L501.0 64.8L502.0 64.6L503.0 64.7L504.0 64.8L505.0 64.2L506.0 64.0L507.0 64.2L508.0 64.1L509.0 64.1L510.0 64.0L511.0 64.4L512.0 64.7L513.0 64.4L514.0 64.8L515.0 64.7L516.0 64.1L517.0 64.5L518.0 64.3L519.0 64.1L520.0 64.8L521.0 64.2L522.0 64.5L523.0 64.5L524.0 64.8L525.0 64.5L526.0 64.3L527.0 64.4L528.0 64.1L529.0 64.8L530.0 64.8L531.0 64.2L532.0 64.0L533.0 64.2L534.0 64.3L535.0 64.7L536.0 64.7L537.0 64.7L538.0 64.0L539.0 64.6L540.0 64.6L541.0 64.5L542.0 64.8L543.0 64.0L544.0 64.1L545.0 64.6L546.0 64.8L547.0 64.5L548.0 64.2L549.0 64.5L550.0 64.6L551.0 64.1L552.0 64.3L553.0 64.2L554.0 64.1L555.0 64.4L556.0 64.1L557.0 64.2L558.0 64.1L559.0 64.5L560.0 64.0L561.0 64.6L562.0 64.2L563.0 64.0L564.0 64.7L565.0 64.2L566.0 64.7L567.0 64.7L568.0 64.7L569.0 64.1L570.0 64.4L571.0 64.1L572.0 64.7L573.0 64.7L574.0 64.5L575.0 64.4L576.0 64.3L577.0 64.7L578.0 64.4L579.0 64.5L580.0 64.1L581.0 64.2L582.0 64.0L583.0 64.6L584.0 64.4L585.0 64.1L586.0 64.7L587.0 64.2L588.0 64.3L589.0 64.1L590.0 64.2L591.0 64.7L592.0 64.3L593.0 64.1L594.0 64.4L595.0 64.3L596.0 64.7L597.0 64.1L598.0 64.8L599.0 64.0L600.0 64.7L601.0 64.5L602.0 64.2L603.0 64.4L604.0 64.2L605.0 64.2L606.0 64.2L607.0 64.3L608.0 64.8L609.0 64.8L610.0 64.7L611.0 64.1L612.0 64.2L613.0 64.7L614.0 64.0L615.0 64.6L616.0 64.2L617.0 64.8L618.0 64.0L619.0 64.6L620.0 64.3L621.0 64.1L622.0 64.0L623.0 64.7L624.0 64.4L625.0 64.1L626.0 64.3L627.0 64.7L628.0 64.2L629.0 64.5L630.0 64.1L631.0 64.1L632.0 64.6L633.0 64.6L634.0 64.2L635.0 64.1L636.0 64.1L637.0 64.5L638.0 64.4L639.0 64.2L640.0 64.2L641.0 64.5L642.0 64.6L643.0 64.6L644.0 64.5L644.3 64.2L644.3 76.9L644.0 76.4L643.0 76.7L642.0 76.4L641.0 77.0L640.0 76.4L639.0 76.7L638.0 76.3L637.0 76.3L636.0 76.6L635.0 77.0L634.0 76.3L633.0 76.6L632.0 76.3L631.0 76.8L630.0 76.9L629.0 76.3L628.0 76.7L627.0 76.9L626.0 76.7L625.0 76.5L624.0 77.0L623.0 76.6L622.0 76.6L621.0 76.6L620.0 76.9L619.0 76.4L618.0 76.3L617.0 76.3L616.0 76.7L615.0 76.4L614.0 76.7L613.0 76.4L612.0 77.0L611.0 76.3L610.0 76.2L609.0 76.6L608.0 76.6L607.0 76.6L606.0 76.6L605.0 77.0L604.0 76.2L603.0 76.8L602.0 76.9L601.0 76.9L600.0 76.8L599.0 76.3L598.0 77.0L597.0 76.9L596.0 76.4L595.0 76.8L594.0 77.0L593.0 76.5L592.0 76.5L591.0 76.6L590.0 76.4L589.0 76.9L588.0 76.3L587.0 76.4L586.0 77.0L585.0 76.9L584.0 76.6L583.0 76.6L582.0 76.8L581.0 76.9L580.0 76.7L579.0 76.9L578.0 76.5L577.0 76.3L576.0 76.9L575.0 76.5L574.0 76.4L573.0 76.9L572.0 76.3L571.0 76.2L570.0 76.7L569.0 76.7L568.0 76.3L567.0 76.6L566.0 76.7L565.0 76.2L564.0 76.4L563.0 76.7L562.0 76.8L561.0 76.7L560.0 76.7L559.0 76.2L558.0 76.4L557.0 76.3L556.0 76.3L555.0 76.3L554.0 77.0L553.0 76.6L552.0 76.2L551.0 76.3L550.0 76.8L549.0 76.7L548.0 76.5L547.0 76.7L546.0 76.6L545.0 76.9L544.0 76.7L543.0 76.6L542.0 77.0L541.0 76.9L540.0 76.2L539.0 76.4L538.0 76.3L537.0 76.5L536.0 76.4L535.0 76.3L534.0 76.3L533.0 77.0L532.0 76.5L531.0 76.8L530.0 76.5L529.0 76.8L528.0 76.6L527.0 76.3L526.0 76.5L525.0 76.8L524.0 76.6L523.0 76.7L522.0 76.2L521.0 76.8L520.0 76.8L519.0 76.5L518.0 76.9L517.0 76.5L516.0 76.2L515.0 76.6L514.0 76.8L513.0 76.6L512.0 76.6L511.0 76.9L510.0 76.9L509.0 76.9L508.0 76.8L507.0 76.7L506.0 76.8L505.0 76.8L504.0 76.9L503.0 76.6L502.0 76.3L501.0 76.5L500.0 76.5L499.0 76.5L498.0 76.8L497.0 76.4L496.0 76.6L495.0 76.6L494.0 76.5L493.0 76.6L492.0 76.8L491.0 76.8L490.0 76.8L489.0 76.6L488.0 76.7L487.0 76.5L486.0 77.0L485.0 76.7L484.0 76.3L483.0 76.8L482.0 76.6L481.0 76.6L480.0 76.8L479.0 76.2L478.0 76.8L477.0 76.4L476.0 76.9L475.0 76.9L474.0 76.3L473.0 76.6L472.0 77.0L471.0 76.7L470.0 76.6L469.0 76.4L468.0 76.9L467.0 76.8L466.0 76.2L465.0 76.4L464.0 76.9L463.0 76.7L462.0 76.7L461.0 76.5L460.0 76.5L459.0 76.3L458.0 76.3L457.0 76.6L456.0 76.4L455.0 76.4L454.0 76.4L453.0 76.6L452.0 76.4L451.0 76.4L450.0 76.3L449.0 76.9L448.0 76.3L447.0 77.0L446.0 76.4L445.0 76.5L444.0 76.6L443.0 76.2L442.0 76.5L441.0 76.7L440.0 76.4L439.0 76.3L438.0 76.5L437.0 76.7L436.0 76.6L435.0 76.6L434.0 76.4L433.0 76.8L432.0 76.7L431.0 76.6L430.0 76.7L429.0 76.7L428.0 76.4L427.0 76.3L426.0 76.6L425.0 76.6L424.0 76.9L423.0 76.8L422.0 76.9L421.0 76.5L420.0 76.5L419.0 76.9L418.0 76.3L417.0 76.7L416.0 76.3L415.0 76.3L414.0 76.2L413.0 76.8L412.0 76.7L411.0 76.3L410.0 77.0L409.0 77.0L408.0 76.5L407.0 76.6L406.0 76.3L405.0 76.4L404.0 76.6L403.0 76.2L402.0 76.6L401.0 76.6L400.0 76.5L399.0 76.7L398.0 76.7L397.0 76.5L396.0 76.7L395.0 76.2L394.0 76.5L393.0 76.6L392.0 76.9L391.0 76.7L390.0 76.7L389.0 76.6L388.0 76.5L387.0 76.3L386.0 76.2L385.0 76.6L384.0 76.6L383.0 76.5L382.0 76.2L381.0 76.7L380.0 76.6L379.0 76.3L378.0 76.9L377.0 76.7L376.0 76.2L375.0 76.3L374.0 76.6L373.0 76.9L372.0 76.3L371.0 76.4L370.0 76.3L369.0 76.2L368.0 76.3L367.0 76.7L366.0 76.9L365.0 76.8L364.0 76.6L363.0 76.6L362.0 76.8L361.0 76.9L360.0 76.5L359.0 76.5L358.0 76.7L357.0 76.2L356.0 76.5L355.0 77.0L354.0 76.7L353.0 76.4L352.0 76.8L351.0 76.4L350.0 77.0L349.0 76.8L348.0 76.3L347.0 76.5L346.0 76.5L345.0 76.8L344.0 76.6L343.0 76.6L342.0 76.8L341.0 76.5L340.0 76.6L339.0 76.2L338.0 76.5L337.0 76.7L336.0 76.9L335.0 76.9L334.0 76.4L333.0 76.9L332.0 76.9L331.0 76.9L330.0 76.6L329.0 76.3L328.0 76.5L327.0 76.4L326.0 77.0L325.0 77.0L324.0 76.4L323.0 76.7L322.0 76.4L321.0 76.7L320.0 76.9L319.0 76.8L318.0 76.9L317.0 76.3L316.0 76.5L315.0 76.7L314.0 76.6L313.0 76.7L312.0 77.0L311.0 76.3L310.0 76.5L309.0 76.2L308.0 76.6L307.0 76.5L306.0 76.8L305.0 77.0L304.0 76.3L303.0 76.3L302.0 76.7L301.0 76.3L300.0 76.3L299.0 76.8L298.0 76.5L297.0 76.2L296.0 76.6L295.0 76.2L294.0 76.8L293.0 76.7L292.0 76.4L291.0 76.8L290.0 76.8L289.0 76.3L288.0 76.6L287.0 76.4L286.0 76.8L285.0 76.9L284.0 76.7L283.0 76.9L282.0 76.2L281.0 76.8L280.0 76.6L279.0 76.9L278.0 76.6L277.0 76.7L276.0 76.7L275.0 76.9L274.0 76.9L273.0 76.3L272.0 76.7L271.0 76.8L270.0 76.8L269.0 76.8L268.0 76.8L267.0 77.0L266.0 76.5L265.0 76.7L264.0 76.9L263.0 76.4L262.0 76.9L261.0 76.8L260.0 76.3L259.0 76.9L258.0 76.6L257.0 76.3L256.0 76.4L255.0 76.9L254.0 76.7L253.0 76.4L252.0 76.7L251.0 76.2L250.0 76.8L249.0 76.2L248.0 76.6L247.0 76.8L246.0 76.6L245.0 76.9L244.0 76.4L243.0 76.8L242.0 76.3L241.0 76.5L240.0 76.7L239.0 76.8L238.0 76.5L237.0 76.8L236.0 76.3L235.0 76.9L234.0 76.6L233.0 76.6L232.0 76.8L231.0 76.4L230.0 76.7L229.0 76.5L228.0 76.5L227.0 76.8L226.0 76.7L225.0 76.9L224.0 76.9L223.0 76.3L222.0 76.7L221.0 76.5L220.0 76.9L219.0 76.6L218.0 76.7L217.0 76.6L216.0 76.8L215.0 76.9L214.0 76.8L213.0 76.8L212.0 76.9L211.0 76.4L210.0 76.8L209.0 76.7L208.0 76.3L207.0 76.4L206.0 76.3L205.0 76.3L204.0 76.9L203.0 76.8L202.0 77.0L201.0 76.5L200.0 76.5L199.0 76.7L198.0 76.7L197.0 76.5L196.0 76.4L195.0 76.8L194.0 76.3L193.0 76.7L192.0 76.5L191.0 76.9L190.0 76.9L189.0 76.3L188.0 76.4L187.0 76.4L186.0 77.0L185.0 77.0L184.0 76.9L183.0 76.8L182.0 76.8L181.0 76.7L180.0 77.0L179.0 76.8L178.0 76.5L177.0 76.9L176.0 76.3L175.0 76.5L174.0 76.4L173.0 76.8L172.0 76.7L171.0 76.5L170.0 76.7L169.0 77.0L168.0 76.3L167.0 76.4L166.0 76.8L165.0 77.0L164.0 76.3L163.0 76.5L162.0 77.0L161.0 76.8L160.0 76.9L159.0 76.4L158.0 76.8L157.0 76.3L156.0 76.4L155.0 76.9L154.0 76.4L153.0 76.7L152.0 76.4L151.0 76.3L150.0 76.8L149.0 76.9L148.0 76.2L147.0 76.7L146.0 76.3L145.0 76.4L144.0 76.4L143.0 76.3L142.0 76.5L141.0 76.6L140.0 77.0L139.0 76.4L138.0 76.7L137.0 76.6L136.0 76.3L135.0 76.9L134.0 76.4L133.0 77.0L132.0 76.4L131.0 76.4L130.0 76.8L129.0 76.6L128.0 76.2L127.0 76.5L126.0 76.6L125.0 76.8L124.0 77.0L123.0 76.7L122.0 76.7L121.0 76.8L120.0 76.8L119.0 76.9L118.0 76.4L117.0 76.5L116.0 76.8L115.0 76.8L114.0 76.6L113.0 76.6L112.0 76.3L111.0 76.7L110.0 76.8L109.0 76.3L108.0 76.9L107.0 76.5L106.0 76.7L105.0 76.3L104.0 76.6L103.0 76.4L102.0 76.9L101.0 76.5L100.0 76.5L99.0 76.6L98.0 76.4L97.0 76.3L96.0 76.9L95.0 76.8L94.0 76.7L93.0 76.8L92.0 77.0L91.0 76.8L90.0 76.8L89.0 76.4L88.0 76.6L87.0 76.9L86.0 76.7L85.0 76.6L84.0 76.7L83.0 76.9L82.0 76.9L81.0 77.0L80.0 76.2L79.0 76.4L78.0 76.9L77.0 76.4L76.0 76.2L75.0 76.5L74.0 76.9L73.0 76.6L72.0 76.7L71.0 76.8L70.0 76.6L69.0 77.0L68.0 76.3L67.0 76.5L66.0 76.5L65.0 76.3L64.0 76.5L63.0 76.8L62.0 76.8L61.0 76.9L60.0 77.0L59.0 76.4L58.0 76.3L57.0 76.8L56.0 76.9L55.0 76.5L54.0 76.3L53.0 76.3L52.0 76.9L51.0 76.4L50.0 76.3L49.0 76.4L48.0 76.7L47.0 76.9L46.0 76.3L45.0 76.7L44.0 76.7L43.0 76.6L42.0 76.7L41.0 76.3L40.0 76.8L39.0 77.0L38.0 76.5L37.0 76.5L36.0 76.3L35.0 76.4L34.0 76.3L33.0 76.2L32.0 76.6L31.0 76.6L30.0 76.9L29.0 76.8L28.0 76.5L27.0 76.9L26.0 76.4L25.0 76.9L24.0 76.6L23.0 76.2L22.0 76.9L21.0 77.0L20.0 76.6L19.0 76.8L18.0 76.4L17.0 77.0Z" fill="#0ccad2"/>
<path d="M17.0 94.3L18.0 94.4L19.0 94.3L20.0 93.9L21.0 93.8L22.0 94.2L23.0 94.0L24.0 93.9L25.0 93.8L26.0 93.9L27.0 94.2L28.0 94.3L29.0 94.4L30.0 93.7L31.0 93.8L32.0 93.9L33.0 94.1L34.0 93.8L35.0 93.7L36.0 93.6L37.0 93.8L38.0 94.0L39.0 94.5L40.0 94.4L41.0 94.4L42.0 94.5L43.0 94.5L44.0 94.1L45.0 94.3L46.0 93.6L47.0 94.2L48.0 94.1L49.0 93.8L50.0 94.1L51.0 94.5L52.0 94.0L53.0 94.1L54.0 93.8L55.0 93.8L56.0 94.4L57.0 93.5L58.0 93.7L59.0 94.2L60.0 93.9L61.0 93.6L62.0 94.2L63.0 93.9L64.0 94.1L65.0 93.9L66.0 94.0L67.0 94.1L68.0 93.9L69.0 93.6L70.0 93.7L71.0 94.4L72.0 94.0L73.0 93.6L74.0 94.4L75.0 93.8L76.0 93.6L77.0 94.0L78.0 93.8L79.0 94.0L80.0 94.1L81.0 93.7L82.0 94.1L83.0 93.6L84.0 94.0L85.0 94.1L86.0 93.6L87.0 93.9L88.0 93.6L89.0 93.9L90.0 94.4L91.0 94.1L92.0 94.2L93.0 94.3L94.0 93.6L95.0 94.5L96.0 94.2L97.0 93.6L98.0 94.3L99.0 93.9L100.0 93.7L101.0 94.5L102.0 94.1L103.0 94.3L104.0 93.6L105.0 94.3L106.0 93.6L107.0 93.7L108.0 93.9L109.0 93.5L110.0 94.1L111.0 93.7L112.0 93.8L113.0 94.2L114.0 93.9L115.0 94.4L116.0 94.1L117.0 94.4L118.0 94.1L119.0 94.4L120.0 94.4L121.0 93.7L122.0 94.2L123.0 93.8L124.0 94.3L125.0 94.2L126.0 94.3L127.0 93.6L128.0 93.9L129.0 94.2L130.0 94.4L131.0 94.2L132.0 93.5L133.0 94.1L134.0 93.6L135.0 94.0L136.0 94.3L137.0 93.6L138.0 94.4L139.0 94.2L140.0 93.8L141.0 93.7L142.0 93.9L143.0 94.3L144.0 94.1L145.0 93.6L146.0 93.5L147.0 93.6L148.0 94.3L149.0 93.7L150.0 94.1L151.0 93.8L152.0 94.2L153.0 93.9L154.0 93.6L155.0 94.4L156.0 94.0L157.0 94.2L158.0 94.3L159.0 94.4L160.0 93.5L161.0 93.8L162.0 93.7L163.0 94.0L164.0 94.4L165.0 94.3L166.0 93.5L167.0 93.7L168.0 94.3L169.0 94.2L170.0 93.9L171.0 94.0L172.0 93.7L173.0 94.3L174.0 93.9L175.0 94.4L176.0 94.1L177.0 93.6L178.0 93.8L179.0 93.7L180.0 94.4L181.0 94.1L182.0 93.5L183.0 93.7L184.0 93.9L185.0 94.0L186.0 94.1L187.0 93.9L188.0 93.9L189.0 93.5L190.0 94.1L191.0 93.8L192.0 93.5L193.0 94.0L194.0 94.5L195.0 93.5L196.0 93.6L197.0 94.2L198.0 93.8L199.0 93.8L200.0 94.0L201.0 93.8L202.0 94.1L203.0 94.0L204.0 94.5L205.0 94.5L206.0 93.5L207.0 94.1L208.0 94.3L209.0 94.4L210.0 94.3L211.0 94.1L212.0 94.1L213.0 93.9L214.0 93.8L215.0 94.3L216.0 94.4L217.0 94.4L218.0 94.2L219.0 93.8L220.0 94.3L221.0 94.2L222.0 94.0L223.0 94.1L224.0 93.9L225.0 94.1L226.0 93.9L227.0 93.6L228.0 93.8L229.0 93.8L230.0 94.5L231.0 94.0L232.0 93.9L233.0 93.7L234.0 93.7L235.0 93.8L236.0 93.6L237.0 93.5L238.0 94.4L239.0 94.0L240.0 93.9L241.0 94.1L242.0 93.8L243.0 93.7L244.0 93.6L245.0 93.8L246.0 93.8L247.0 94.2L248.0 94.1L249.0 94.4L250.0 93.8L251.0 94.4L252.0 94.1L253.0 93.6L254.0 93.7L255.0 94.1L256.0 94.5L257.0 93.9L258.0 94.3L259.0 93.9L260.0 94.4L261.0 93.6L262.0 94.0L263.0 94.4L264.0 93.8L265.0 93.8L266.0 93.5L267.0 93.7L268.0 93.8L269.0 94.2L270.0 93.7L271.0 93.9L272.0 93.7L273.0 94.1L274.0 94.4L275.0 94.1L276.0 93.7L277.0 94.2L278.0 94.5L279.0 94.1L280.0 93.6L281.0 94.3L282.0 94.4L283.0 93.8L284.0 93.6L285.0 93.7L286.0 94.0L287.0 94.4L288.0 94.1L289.0 94.4L290.0 93.7L291.0 93.8L292.0 94.2L293.0 94.1L294.0 93.9L295.0 94.2L296.0 93.8L297.0 93.6L298.0 93.9L299.0 93.5L300.0 94.1L301.0 93.8L302.0 94.0L303.0 94.1L304.0 93.8L305.0 94.0L306.0 93.5L307.0 94.4L308.0 94.1L309.0 94.5L310.0 93.6L311.0 94.1L312.0 94.2L313.0 93.8L314.0 93.6L315.0 93.7L316.0 93.6L317.0 94.3L318.0 93.6L319.0 94.3L320.0 93.9L321.0 94.0L322.0 94.1L323.0 94.1L324.0 94.2L325.0 94.1L326.0 93.8L327.0 94.2L328.0 93.8L329.0 94.2L330.0 94.3L331.0 94.3L332.0 93.8L333.0 94.3L334.0 94.5L335.0 94.0L336.0 93.8L337.0 94.0L338.0 94.4L339.0 93.6L340.0 93.5L341.0 94.0L342.0 94.2L343.0 94.3L344.0 93.9L345.0 94.5L346.0 93.7L347.0 94.3L348.0 93.6L349.0 93.5L350.0 93.6L351.0 93.6L352.0 94.0L353.0 94.1L354.0 93.7L355.0 94.4L356.0 93.9L357.0 93.6L358.0 93.7L359.0 94.2L360.0 94.4L361.0 93.7L362.0 93.5L363.0 94.3L364.0 93.7L365.0 94.5L366.0 94.0L367.0 94.1L368.0 93.8L369.0 94.3L370.0 94.0L371.0 93.8L372.0 94.4L373.0 93.6L374.0 94.2L375.0 93.6L376.0 94.1L377.0 93.9L378.0 94.4L379.0 93.6L380.0 94.1L381.0 93.9L382.0 94.4L383.0 94.4L384.0 94.1L385.0 93.7L386.0 93.8L387.0 93.8L388.0 93.9L389.0 93.7L390.0 93.7L391.0 94.3L392.0 94.1L393.0 93.8L394.0 94.5L395.0 93.7L396.0 94.1L397.0 93.7L398.0 94.4L399.0 94.4L400.0 93.8L401.0 94.3L402.0 94.3L403.0 93.8L404.0 93.8L405.0 94.0L406.0 94.4L407.0 93.7L408.0 94.2L409.0 94.1L410.0 94.0L411.0 94.1L412.0 94.4L413.0 93.7L414.0 94.4L415.0 93.9L416.0 94.3L417.0 94.4L418.0 93.7L419.0 94.4L420.0 94.5L421.0 93.8L422.0 93.5L423.0 93.6L424.0 94.5L425.0 93.5L426.0 94.4L427.0 93.7L428.0 94.2L429.0 93.6L430.0 93.7L431.0 94.2L432.0 93.6L433.0 93.8L434.0 94.4L435.0 94.2L436.0 94.4L437.0 94.5L438.0 93.5L439.0 93.7L440.0 94.3L441.0 94.2L442.0 93.5L443.0 94.0L444.0 93.7L445.0 93.9L446.0 93.6L447.0 93.5L448.0 94.5L449.0 93.8L450.0 94.4L451.0 93.6L452.0 94.0L453.0 93.6L454.0 93.9L455.0 93.7L456.0 94.2L457.0 93.6L458.0 94.2L459.0 94.0L460.0 93.6L461.0 93.9L462.0 94.0L463.0 94.4L464.0 93.8L465.0 93.7L466.0 94.5L467.0 94.4L468.0 94.2L469.0 93.8L470.0 93.7L471.0 93.8L472.0 93.6L473.0 93.5L474.0 94.0L475.0 93.9L476.0 94.1L477.0 93.9L478.0 93.5L479.0 94.2L480.0 94.2L481.0 94.0L482.0 94.0L483.0 94.2L484.0 94.5L485.0 94.4L486.0 94.2L487.0 93.9L488.0 93.8L489.0 93.9L490.0 94.5L491.0 93.9L492.0 93.9L493.0 93.9L494.0 93.6L495.0 94.5L496.0 93.5L497.0 94.1L498.0 94.4L499.0 93.8L500.0 94.1L501.0 93.9L502.0 93.7L503.0 93.7L504.0 93.6L505.0 94.3L506.0 94.3L507.0 94.4L508.0 93.5L509.0 94.2L510.0 93.8L511.0 94.1L512.0 94.0L513.0 93.8L514.0 94.5L515.0 93.5L516.0 94.2L517.0 94.4L518.0 94.0L519.0 94.1L520.0 94.5L521.0 93.7L522.0 94.1L523.0 94.2L524.0 93.9L525.0 94.2L526.0 93.9L527.0 94.0L528.0 94.1L529.0 94.2L530.0 93.8L531.0 94.1L532.0 94.0L533.0 93.7L534.0 94.1L535.0 93.8L536.0 94.4L537.0 94.0L538.0 94.2L539.0 94.0L540.0 94.0L541.0 93.7L542.0 93.6L543.0 94.4L544.0 94.0L545.0 94.0L546.0 94.0L547.0 94.3L548.0 93.7L549.0 93.7L550.0 94.3L551.0 94.0L552.0 94.1L553.0 94.3L554.0 94.4L555.0 94.4L556.0 93.5L557.0 93.9L558.0 94.3L559.0 94.3L560.0 93.6L561.0 93.7L562.0 93.8L563.0 93.6L564.0 93.9L565.0 94.3L566.0 94.0L567.0 94.0L568.0 93.6L569.0 93.9L570.0 94.5L571.0 94.2L572.0 93.9L573.0 94.0L574.0 94.3L575.0 94.3L576.0 93.6L577.0 94.2L578.0 93.9L579.0 94.0L580.0 93.7L581.0 93.9L582.0 93.8L583.0 93.9L584.0 93.5L585.0 93.7L586.0 94.1L587.0 93.6L588.0 93.7L589.0 94.2L590.0 93.8L591.0 93.8L592.0 93.7L593.0 94.3L594.0 93.6L595.0 94.1L596.0 94.4L597.0 93.7L598.0 93.9L599.0 94.3L600.0 94.1L601.0 93.9L602.0 93.5L603.0 93.9L604.0 93.9L605.0 94.2L606.0 93.8L607.0 93.9L608.0 94.1L609.0 94.3L610.0 93.9L611.0 93.9L612.0 94.1L613.0 94.4L614.0 93.7L615.0 94.5L616.0 94.2L617.0 93.9L618.0 94.2L619.0 93.8L620.0 93.6L621.0 94.3L622.0 93.9L623.0 94.0L624.0 94.0L625.0 94.4L626.0 94.3L627.0 93.5L628.0 94.1L629.0 94.0L630.0 94.0L631.0 94.3L632.0 93.9L633.0 94.0L634.0 94.4L635.0 93.9L636.0 94.0L637.0 94.0L638.0 94.3L639.0 94.2L640.0 94.2L641.0 93.9L642.0 93.5L643.0 94.2L644.0 94.1L644.3 94.3L644.3 116.5L644.0 117.2L643.0 117.1L642.0 117.2L641.0 116.5L640.0 117.2L639.0 117.2L638.0 116.5L637.0 116.7L636.0 117.2L635.0 116.6L634.0 116.6L633.0 116.8L632.0 117.2L631.0 116.6L630.0 116.9L629.0 116.7L628.0 116.3L627.0 116.5L626.0 116.4L625.0 117.2L624.0 117.0L623.0 116.8L622.0 117.3L621.0 116.3L620.0 117.0L619.0 117.0L618.0 117.0L617.0 117.0L616.0 116.4L615.0 116.7L614.0 116.8L613.0 116.9L612.0 117.2L611.0 117.0L610.0 116.4L609.0 116.5L608.0 116.4L607.0 117.0L606.0 117.1L605.0 117.2L604.0 116.8L603.0 116.9L602.0 116.8L601.0 116.8L600.0 116.7L599.0 116.9L598.0 116.5L597.0 117.1L596.0 116.4L595.0 116.7L594.0 117.2L593.0 117.0L592.0 116.8L591.0 116.9L590.0 116.7L589.0 117.0L588.0 117.0L587.0 116.5L586.0 117.0L585.0 116.6L584.0 116.5L583.0 116.7L582.0 116.8L581.0 116.4L580.0 116.9L579.0 116.4L578.0 117.2L577.0 116.9L576.0 116.7L575.0 117.3L574.0 116.4L573.0 117.2L572.0 116.7L571.0 117.1L570.0 116.4L569.0 116.7L568.0 116.5L567.0 116.8L566.0 116.6L565.0 116.6L564.0 117.0L563.0 117.1L562.0 116.5L561.0 117.2L560.0 116.4L559.0 117.1L558.0 117.2L557.0 117.2L556.0 116.5L555.0 116.3L554.0 116.9L553.0 116.6L552.0 117.0L551.0 116.4L550.0 116.6L549.0 117.1L548.0 117.2L547.0 116.6L546.0 117.3L545.0 116.5L544.0 117.0L543.0 117.1L542.0 116.7L541.0 117.0L540.0 116.7L539.0 117.1L538.0 116.4L537.0 117.0L536.0 116.5L535.0 117.1L534.0 116.5L533.0 116.3L532.0 116.9L531.0 117.3L530.0 116.9L529.0 116.7L528.0 117.1L527.0 116.8L526.0 117.2L525.0 116.8L524.0 116.6L523.0 116.9L522.0 116.6L521.0 117.2L520.0 116.5L519.0 117.2L518.0 116.4L517.0 116.3L516.0 116.4L515.0 116.8L514.0 117.0L513.0 117.0L512.0 116.5L511.0 116.8L510.0 116.4L509.0 117.2L508.0 116.8L507.0 116.4L506.0 116.7L505.0 116.8L504.0 117.2L503.0 117.2L502.0 117.0L501.0 116.4L500.0 116.5L499.0 117.1L498.0 116.4L497.0 117.3L496.0 116.7L495.0 116.3L494.0 117.0L493.0 116.4L492.0 116.6L491.0 117.2L490.0 117.0L489.0 116.9L488.0 117.1L487.0 116.6L486.0 117.1L485.0 116.5L484.0 117.0L483.0 117.2L482.0 116.7L481.0 117.2L480.0 116.7L479.0 116.5L478.0 116.7L477.0 116.8L476.0 117.3L475.0 116.8L474.0 117.2L473.0 116.7L472.0 117.2L471.0 116.7L470.0 116.9L469.0 116.9L468.0 116.6L467.0 117.1L466.0 117.1L465.0 116.4L464.0 117.0L463.0 116.5L462.0 116.4L461.0 116.8L460.0 117.2L459.0 117.2L458.0 116.4L457.0 117.2L456.0 116.8L455.0 116.8L454.0 117.2L453.0 116.8L452.0 117.1L451.0 116.8L450.0 116.8L449.0 116.9L448.0 117.1L447.0 116.9L446.0 117.1L445.0 117.2L444.0 117.1L443.0 116.4L442.0 116.8L441.0 116.4L440.0 117.3L439.0 116.4L438.0 116.8L437.0 116.5L436.0 116.7L435.0 116.6L434.0 117.1L433.0 116.5L432.0 117.1L431.0 117.0L430.0 117.3L429.0 116.9L428.0 116.8L427.0 117.0L426.0 116.4L425.0 117.2L424.0 116.7L423.0 117.1L422.0 116.7L421.0 116.5L420.0 116.6L419.0 117.2L418.0 117.1L417.0 116.7L416.0 116.3L415.0 117.3L414.0 116.7L413.0 116.6L412.0 116.5L411.0 117.0L410.0 116.5L409.0 116.8L408.0 116.4L407.0 117.3L406.0 116.4L405.0 116.9L404.0 116.9L403.0 117.2L402.0 117.1L401.0 116.6L400.0 116.6L399.0 117.1L398.0 117.0L397.0 117.2L396.0 117.1L395.0 117.1L394.0 117.0L393.0 116.3L392.0 116.3L391.0 116.5L390.0 116.8L389.0 116.8L388.0 116.5L387.0 116.4L386.0 116.5L385.0 116.7L384.0 117.1L383.0 116.7L382.0 116.5L381.0 116.5L380.0 117.2L379.0 116.6L378.0 117.0L377.0 117.1L376.0 116.3L375.0 116.6L374.0 116.6L373.0 117.2L372.0 116.5L371.0 116.4L370.0 116.4L369.0 116.6L368.0 116.5L367.0 116.5L366.0 116.7L365.0 116.9L364.0 116.5L363.0 116.5L362.0 116.4L361.0 117.0L360.0 116.3L359.0 116.8L358.0 116.4L357.0 117.2L356.0 116.3L355.0 116.5L354.0 117.0L353.0 116.5L352.0 117.1L351.0 117.1L350.0 116.8L349.0 117.1L348.0 116.8L347.0 116.4L346.0 116.6L345.0 116.6L344.0 116.9L343.0 116.5L342.0 116.5L341.0 116.6L340.0 116.4L339.0 116.5L338.0 116.9L337.0 117.2L336.0 116.6L335.0 116.5L334.0 117.0L333.0 116.7L332.0 116.5L331.0 116.5L330.0 117.3L329.0 116.8L328.0 117.3L327.0 117.2L326.0 116.5L325.0 116.9L324.0 116.7L323.0 116.8L322.0 117.0L321.0 117.1L320.0 116.9L319.0 116.5L318.0 116.7L317.0 117.0L316.0 117.2L315.0 117.0L314.0 116.6L313.0 116.9L312.0 116.6L311.0 116.5L310.0 117.2L309.0 116.6L308.0 117.3L307.0 116.5L306.0 117.1L305.0 117.0L304.0 116.3L303.0 116.9L302.0 117.1L301.0 116.4L300.0 116.7L299.0 116.4L298.0 116.9L297.0 116.8L296.0 116.3L295.0 116.8L294.0 116.3L293.0 117.1L292.0 116.5L291.0 117.1L290.0 116.8L289.0 117.3L288.0 117.1L287.0 116.4L286.0 116.8L285.0 116.5L284.0 117.0L283.0 116.9L282.0 117.2L281.0 116.7L280.0 116.4L279.0 116.8L278.0 116.9L277.0 116.4L276.0 116.4L275.0 116.6L274.0 117.2L273.0 116.7L272.0 116.9L271.0 116.3L270.0 116.9L269.0 116.6L268.0 116.7L267.0 116.9L266.0 116.8L265.0 116.6L264.0 116.4L263.0 116.8L262.0 116.9L261.0 116.3L260.0 117.2L259.0 116.5L258.0 116.6L257.0 116.7L256.0 116.9L255.0 116.5L254.0 116.4L253.0 116.6L252.0 116.6L251.0 117.3L250.0 117.0L249.0 117.2L248.0 116.3L247.0 116.4L246.0 117.2L245.0 116.7L244.0 116.7L243.0 117.3L242.0 116.9L241.0 116.6L240.0 116.7L239.0 117.0L238.0 116.5L237.0 117.0L236.0 116.8L235.0 116.9L234.0 116.3L233.0 116.7L232.0 116.5L231.0 116.6L230.0 116.9L229.0 116.3L228.0 116.6L227.0 116.6L226.0 117.0L225.0 117.1L224.0 116.7L223.0 116.5L222.0 116.5L221.0 117.0L220.0 117.2L219.0 116.8L218.0 116.4L217.0 117.1L216.0 116.6L215.0 117.1L214.0 117.0L213.0 117.2L212.0 117.0L211.0 116.9L210.0 116.3L209.0 116.3L208.0 117.1L207.0 117.0L206.0 116.4L205.0 117.1L204.0 117.0L203.0 116.9L202.0 117.2L201.0 117.0L200.0 116.9L199.0 116.9L198.0 116.3L197.0 117.0L196.0 117.1L195.0 116.4L194.0 116.8L193.0 116.5L192.0 116.7L191.0 116.5L190.0 117.0L189.0 117.1L188.0 116.5L187.0 116.8L186.0 116.7L185.0 116.6L184.0 116.5L183.0 117.0L182.0 116.9L181.0 116.4L180.0 116.8L179.0 117.0L178.0 116.7L177.0 117.0L176.0 116.5L175.0 117.3L174.0 116.5L173.0 116.7L172.0 116.9L171.0 116.4L170.0 117.0L169.0 117.1L168.0 117.2L167.0 116.8L166.0 116.5L165.0 116.6L164.0 116.9L163.0 116.5L162.0 117.2L161.0 117.0L160.0 116.7L159.0 116.3L158.0 116.7L157.0 116.6L156.0 116.5L155.0 116.9L154.0 116.4L153.0 116.6L152.0 117.0L151.0 116.9L150.0 116.5L149.0 117.0L148.0 117.1L147.0 116.4L146.0 116.8L145.0 116.8L144.0 116.6L143.0 116.4L142.0 117.2L141.0 117.0L140.0 117.2L139.0 116.9L138.0 116.8L137.0 116.4L136.0 116.6L135.0 116.7L134.0 116.9L133.0 116.7L132.0 117.0L131.0 116.5L130.0 116.5L129.0 116.5L128.0 117.1L127.0 116.6L126.0 116.5L125.0 116.8L124.0 116.4L123.0 116.4L122.0 116.6L121.0 116.5L120.0 116.7L119.0 116.4L118.0 117.2L117.0 116.6L116.0 116.6L115.0 116.7L114.0 117.0L113.0 117.2L112.0 116.7L111.0 116.5L110.0 117.0L109.0 117.1L108.0 117.1L107.0 117.2L106.0 116.6L105.0 116.3L104.0 116.5L103.0 116.9L102.0 116.6L101.0 117.2L100.0 116.5L99.0 117.0L98.0 117.3L97.0 116.7L96.0 117.2L95.0 117.0L94.0 117.2L93.0 116.9L92.0 116.7L91.0 116.5L90.0 117.3L89.0 116.5L88.0 117.2L87.0 117.1L86.0 116.7L85.0 117.0L84.0 117.0L83.0 116.7L82.0 117.1L81.0 116.5L80.0 117.1L79.0 116.5L78.0 116.5L77.0 116.8L76.0 117.3L75.0 116.5L74.0 117.3L73.0 116.8L72.0 116.9L71.0 117.2L70.0 116.7L69.0 116.6L68.0 116.7L67.0 116.9L66.0 116.8L65.0 116.7L64.0 117.1L63.0 116.4L62.0 116.3L61.0 116.5L60.0 116.3L59.0 117.0L58.0 116.3L57.0 117.2L56.0 116.8L55.0 117.2L54.0 116.8L53.0 116.6L52.0 116.6L51.0 116.8L50.0 117.0L49.0 117.1L48.0 116.9L47.0 117.0L46.0 117.1L45.0 116.6L44.0 116.8L43.0 116.9L42.0 117.1L41.0 116.6L40.0 117.1L39.0 117.0L38.0 116.7L37.0 116.6L36.0 116.3L35.0 116.6L34.0 116.4L33.0 116.4L32.0 116.6L31.0 116.6L30.0 117.2L29.0 117.1L28.0 117.3L27.0 116.4L26.0 116.6L25.0 116.7L24.0 117.0L23.0 116.9L22.0 117.1L21.0 116.7L20.0 116.3L19.0 117.0L18.0 117.3L17.0 117.1Z" fill="#0ccd14"/>
<path d="M17.0 128.2L18.0 128.7L19.0 128.6L20.0 128.3L21.0 128.0L22.0 128.0L23.0 128.0L24.0 128.6L25.0 128.3L26.0 128.8L27.0 128.7L28.0 128.6L29.0 128.3L30.0 128.6L31.0 128.0L32.0 128.0L33.0 128.4L34.0 128.4L35.0 128.1L36.0 128.1L37.0 127.9L38.0 128.7L39.0 128.5L40.0 128.8L41.0 128.8L42.0 128.3L43.0 128.6L44.0 128.2L45.0 128.6L46.0 128.7L47.0 128.0L48.0 127.9L49.0 128.1L50.0 128.4L51.0 128.2L52.0 127.9L53.0 128.6L54.0 128.6L55.0 128.3L56.0 127.9L57.0 128.7L58.0 128.4L59.0 128.0L60.0 128.2L61.0 128.5L62.0 128.7L63.0 128.3L64.0 128.5L65.0 128.1L66.0 128.1L67.0 128.7L68.0 128.2L69.0 128.0L70.0 128.4L71.0 128.0L72.0 128.1L73.0 128.3L74.0 128.4L75.0 128.5L76.0 128.5L77.0 128.3L78.0 128.0L79.0 128.6L80.0 127.9L81.0 128.3L82.0 128.3L83.0 128.5L84.0 128.5L85.0 128.1L86.0 128.5L87.0 128.5L88.0 128.3L89.0 128.0L90.0 128.7L91.0 128.4L92.0 128.0L93.0 128.1L94.0 128.8L95.0 128.1L96.0 128.3L97.0 128.6L98.0 128.6L99.0 128.5L100.0 128.6L101.0 127.9L102.0 128.0L103.0 128.8L104.0 128.6L105.0 127.9L106.0 127.9L107.0 128.1L108.0 128.7L109.0 128.1L110.0 128.5L111.0 128.7L112.0 128.5L113.0 128.7L114.0 128.1L115.0 128.0L116.0 127.9L117.0 128.6L118.0 128.0L119.0 128.8L120.0 128.5L121.0 128.1L122.0 128.6L123.0 128.0L124.0 128.4L125.0 128.0L126.0 128.6L127.0 128.7L128.0 128.7L129.0 127.9L130.0 128.7L131.0 128.4L132.0 128.6L133.0 128.4L134.0 128.5L135.0 128.4L136.0 128.6L137.0 128.0L138.0 127.9L139.0 128.4L140.0 128.2L141.0 128.3L142.0 127.9L143.0 128.6L144.0 127.9L145.0 128.6L146.0 128.6L147.0 128.3L148.0 128.0L149.0 128.5L150.0 128.1L151.0 128.3L152.0 128.0L153.0 128.8L154.0 128.4L155.0 128.2L156.0 128.0L157.0 128.6L158.0 128.7L159.0 128.7L160.0 128.0L161.0 128.2L162.0 128.2L163.0 128.6L164.0 128.0L165.0 128.4L166.0 128.8L167.0 128.6L168.0 127.9L169.0 128.0L170.0 128.0L171.0 128.5L172.0 128.4L173.0 128.4L174.0 128.3L175.0 128.3L176.0 128.4L177.0 128.5L178.0 128.7L179.0 128.6L180.0 128.6L181.0 128.7L182.0 128.7L183.0 128.5L184.0 127.9L185.0 128.5L186.0 128.7L187.0 128.3L188.0 128.7L189.0 128.1L190.0 128.7L191.0 128.3L192.0 128.5L193.0 128.1L194.0 128.2L195.0 128.2L196.0 128.2L197.0 128.0L198.0 128.3L199.0 128.8L200.0 128.5L201.0 128.7L202.0 128.6L203.0 128.7L204.0 128.8L205.0 128.6L206.0 128.1L207.0 128.1L208.0 128.3L209.0 127.9L210.0 128.1L211.0 128.7L212.0 128.7L213.0 128.2L214.0 128.6L215.0 128.6L216.0 128.7L217.0 128.6L218.0 128.4L219.0 128.0L220.0 128.6L221.0 128.2L222.0 128.5L223.0 128.2L224.0 128.4L225.0 128.8L226.0 128.0L227.0 128.4L228.0 128.5L229.0 128.4L230.0 128.7L231.0 128.3L232.0 128.7L233.0 128.5L234.0 128.8L235.0 128.0L236.0 128.1L237.0 128.2L238.0 128.7L239.0 127.9L240.0 128.1L241.0 128.5L242.0 128.8L243.0 128.1L244.0 128.3L245.0 128.5L246.0 128.5L247.0 128.6L248.0 128.6L249.0 128.1L250.0 128.1L251.0 127.9L252.0 128.5L253.0 128.1L254.0 128.1L255.0 128.8L256.0 128.5L257.0 128.4L258.0 128.5L259.0 128.4L260.0 128.5L261.0 128.2L262.0 128.0L263.0 128.0L264.0 127.9L265.0 128.2L266.0 128.0L267.0 128.0L268.0 128.3L269.0 128.8L270.0 128.5L271.0 128.1L272.0 128.6L273.0 128.1L274.0 128.0L275.0 128.2L276.0 128.3L277.0 128.5L278.0 128.3L279.0 128.6L280.0 128.0L281.0 128.7L282.0 128.2L283.0 128.6L284.0 127.9L285.0 128.6L286.0 128.1L287.0 128.7L288.0 128.6L289.0 128.5L290.0 128.1L291.0 127.9L292.0 128.1L293.0 128.7L294.0 128.0L295.0 128.5L296.0 128.4L297.0 128.5L298.0 128.1L299.0 128.0L300.0 128.0L301.0 128.8L302.0 128.2L303.0 128.5L304.0 128.4L305.0 128.1L306.0 128.0L307.0 127.9L308.0 128.7L309.0 128.0L310.0 128.8L311.0 128.2L312.0 128.6L313.0 128.0L314.0 128.6L315.0 128.1L316.0 128.2L317.0 128.4L318.0 128.0L319.0 128.1L320.0 128.6L321.0 128.2L322.0 128.2L323.0 128.6L324.0 128.1L325.0 128.1L326.0 128.1L327.0 128.2L328.0 128.2L329.0 128.5L330.0 128.3L331.0 128.7L332.0 127.9L333.0 128.5L334.0 128.7L335.0 128.1L336.0 127.9L337.0 128.3L338.0 128.0L339.0 128.3L340.0 128.5L341.0 128.0L342.0 128.0L343.0 128.3L344.0 128.1L345.0 128.1L346.0 128.3L347.0 128.0L348.0 128.0L349.0 128.2L350.0 128.3L351.0 128.7L352.0 128.4L353.0 128.0L354.0 128.1L355.0 128.6L356.0 128.4L357.0 128.7L358.0 128.8L359.0 128.7L360.0 128.0L361.0 128.7L362.0 128.4L363.0 128.1L364.0 128.1L365.0 128.7L366.0 128.1L367.0 128.0L368.0 128.1L369.0 128.7L370.0 128.3L371.0 128.6L372.0 128.0L373.0 128.3L374.0 128.2L375.0 128.1L376.0 128.5L377.0 128.2L378.0 128.0L379.0 128.8L380.0 128.3L381.0 128.1L382.0 127.9L383.0 128.5L384.0 128.4L385.0 127.9L386.0 128.3L387.0 128.6L388.0 128.4L389.0 128.1L390.0 128.3L391.0 128.4L392.0 128.5L393.0 128.0L394.0 128.6L395.0 128.8L396.0 128.6L397.0 128.7L398.0 128.2L399.0 128.7L400.0 128.1L401.0 128.1L402.0 128.4L403.0 128.7L404.0 128.0L405.0 128.1L406.0 127.9L407.0 128.3L408.0 128.0L409.0 128.1L410.0 128.6L411.0 128.4L412.0 128.7L413.0 128.3L414.0 128.5L415.0 127.9L416.0 128.8L417.0 128.1L418.0 128.3L419.0 128.4L420.0 128.8L421.0 128.3L422.0 128.8L423.0 128.5L424.0 128.1L425.0 128.7L426.0 128.1L427.0 128.8L428.0 128.3L429.0 128.1L430.0 128.8L431.0 128.2L432.0 128.3L433.0 128.2L434.0 128.5L435.0 127.9L436.0 128.2L437.0 128.0L438.0 128.6L439.0 127.9L440.0 128.4L441.0 128.1L442.0 128.3L443.0 128.4L444.0 128.5L445.0 128.0L446.0 128.1L447.0 128.0L448.0 128.8L449.0 128.0L450.0 128.0L451.0 128.4L452.0 128.4L453.0 128.7L454.0 128.0L455.0 128.1L456.0 128.1L457.0 128.4L458.0 128.3L459.0 128.3L460.0 128.7L461.0 128.5L462.0 128.7L463.0 128.8L464.0 128.1L465.0 128.7L466.0 128.3L467.0 127.9L468.0 128.7L469.0 128.0L470.0 127.9L471.0 128.2L472.0 128.2L473.0 128.8L474.0 128.7L475.0 128.3L476.0 128.4L477.0 128.7L478.0 128.6L479.0 128.5L480.0 128.4L481.0 128.0L482.0 128.1L483.0 128.5L484.0 128.4L485.0 128.6L486.0 128.7L487.0 128.8L488.0 128.1L489.0 128.0L490.0 128.7L491.0 128.4L492.0 128.1L493.0 128.5L494.0 128.1L495.0 128.1L496.0 128.2L497.0 128.4L498.0 128.5L499.0 128.0L500.0 128.6L501.0 128.5L502.0 128.3L503.0 128.5L504.0 128.6L505.0 127.9L506.0 128.3L507.0 128.5L508.0 128.5L509.0 128.5L510.0 128.1L511.0 128.8L512.0 128.6L513.0 128.1L514.0 128.3L515.0 128.8L516.0 128.1L517.0 128.3L518.0 128.8L519.0 128.7L520.0 128.1L521.0 128.6L522.0 128.2L523.0 128.5L524.0 128.6L525.0 128.0L526.0 128.1L527.0 128.1L528.0 128.1L529.0 127.9L530.0 128.0L531.0 128.3L532.0 128.3L533.0 128.0L534.0 128.4L535.0 128.7L536.0 128.4L537.0 128.2L538.0 128.5L539.0 128.3L540.0 128.1L541.0 128.3L542.0 127.9L543.0 128.5L544.0 128.0L545.0 128.2L546.0 128.8L547.0 128.6L548.0 128.7L549.0 128.5L550.0 128.5L551.0 128.5L552.0 128.8L553.0 128.1L554.0 128.6L555.0 128.2L556.0 128.1L557.0 128.6L558.0 128.4L559.0 128.7L560.0 128.7L561.0 128.4L562.0 128.1L563.0 127.9L564.0 128.4L565.0 128.6L566.0 128.1L567.0 128.0L568.0 127.9L569.0 128.1L570.0 128.5L571.0 127.9L572.0 128.1L573.0 128.1L574.0 128.5L575.0 128.8L576.0 127.9L577.0 128.0L578.0 128.7L579.0 128.8L580.0 128.0L581.0 128.2L582.0 128.4L583.0 128.2L584.0 128.3L585.0 128.3L586.0 128.1L587.0 127.9L588.0 128.0L589.0 128.0L590.0 128.0L591.0 128.5L592.0 128.5L593.0 128.1L594.0 128.6L595.0 128.6L596.0 128.2L597.0 128.3L598.0 128.1L599.0 128.7L600.0 128.4L601.0 127.9L602.0 128.0L603.0 128.5L604.0 128.2L605.0 128.5L606.0 128.1L607.0 128.6L608.0 128.6L609.0 128.0L610.0 128.4L611.0 128.1L612.0 128.5L613.0 128.6L614.0 128.6L615.0 128.1L616.0 128.0L617.0 128.5L618.0 128.4L619.0 128.0L620.0 128.1L621.0 128.4L622.0 128.0L623.0 128.5L624.0 128.1L625.0 128.1L626.0 128.3L627.0 128.4L628.0 128.6L629.0 127.9L630.0 128.6L631.0 128.1L632.0 128.2L633.0 128.5L634.0 128.5L635.0 128.5L636.0 128.7L637.0 128.1L638.0 128.2L639.0 128.5L640.0 128.1L641.0 128.0L642.0 128.1L643.0 128.6L644.0 128.6L644.3 128.5L644.3 150.9L644.0 151.1L643.0 151.5L642.0 151.5L641.0 151.2L640.0 151.7L639.0 151.3L638.0 151.7L637.0 151.8L636.0 151.3L635.0 151.7L634.0 151.0L633.0 151.0L632.0 151.4L631.0 151.6L630.0 151.7L629.0 151.3L628.0 151.3L627.0 151.5L626.0 151.2L625.0 151.3L624.0 151.1L623.0 151.7L622.0 151.7L621.0 151.5L620.0 151.4L619.0 151.6L618.0 151.2L617.0 151.6L616.0 151.5L615.0 151.4L614.0 151.2L613.0 151.1L612.0 151.5L611.0 151.4L610.0 151.0L609.0 151.0L608.0 151.2L607.0 151.7L606.0 151.4L605.0 151.2L604.0 151.5L603.0 151.8L602.0 150.9L601.0 151.0L600.0 151.7L599.0 151.4L598.0 151.2L597.0 151.5L596.0 151.7L595.0 151.1L594.0 151.1L593.0 151.4L592.0 151.7L591.0 151.4L590.0 151.7L589.0 150.9L588.0 151.8L587.0 151.5L586.0 151.1L585.0 151.7L584.0 151.7L583.0 151.7L582.0 151.7L581.0 151.3L580.0 151.1L579.0 151.6L578.0 151.6L577.0 151.1L576.0 151.4L575.0 151.5L574.0 151.7L573.0 151.6L572.0 150.9L571.0 151.7L570.0 151.6L569.0 151.1L568.0 151.0L567.0 151.0L566.0 151.4L565.0 150.9L564.0 151.3L563.0 151.5L562.0 151.4L561.0 151.2L560.0 151.1L559.0 151.7L558.0 151.6L557.0 150.9L556.0 151.7L555.0 151.1L554.0 151.5L553.0 151.6L552.0 151.6L551.0 151.4L550.0 150.9L549.0 151.7L548.0 151.0L547.0 151.5L546.0 151.6L545.0 151.1L544.0 151.5L543.0 151.6L542.0 151.4L541.0 151.1L540.0 151.0L539.0 151.3L538.0 151.8L537.0 151.1L536.0 151.3L535.0 151.0L534.0 150.9L533.0 151.5L532.0 151.0L531.0 151.1L530.0 151.6L529.0 151.5L528.0 151.5L527.0 151.5L526.0 151.5L525.0 151.7L524.0 151.6L523.0 151.0L522.0 151.4L521.0 151.2L520.0 151.0L519.0 151.1L518.0 151.6L517.0 151.0L516.0 151.1L515.0 150.9L514.0 151.1L513.0 151.1L512.0 151.1L511.0 151.6L510.0 151.2L509.0 151.5L508.0 151.0L507.0 151.7L506.0 151.3L505.0 151.5L504.0 151.1L503.0 151.5L502.0 151.0L501.0 151.0L500.0 151.0L499.0 151.7L498.0 151.0L497.0 151.1L496.0 151.2L495.0 151.2L494.0 151.8L493.0 151.0L492.0 151.3L491.0 151.4L490.0 151.5L489.0 151.1L488.0 151.1L487.0 151.0L486.0 151.6L485.0 151.5L484.0 151.6L483.0 151.7L482.0 151.5L481.0 151.8L480.0 151.1L479.0 151.6L478.0 151.7L477.0 151.7L476.0 151.1L475.0 151.6L474.0 151.4L473.0 151.4L472.0 151.1L471.0 150.9L470.0 151.5L469.0 151.2L468.0 151.0L467.0 151.4L466.0 151.0L465.0 151.1L464.0 151.5L463.0 151.0L462.0 151.3L461.0 151.7L460.0 151.3L459.0 151.1L458.0 151.3L457.0 151.4L456.0 151.4L455.0 151.0L454.0 151.2L453.0 151.6L452.0 151.5L451.0 151.5L450.0 150.9L449.0 151.2L448.0 151.7L447.0 151.0L446.0 151.8L445.0 151.3L444.0 151.4L443.0 151.2L442.0 151.4L441.0 151.7L440.0 151.3L439.0 151.1L438.0 151.1L437.0 151.5L436.0 151.6L435.0 151.1L434.0 151.1L433.0 151.6L432.0 151.0L431.0 150.9L430.0 151.4L429.0 151.5L428.0 151.2L427.0 151.0L426.0 151.6L425.0 151.5L424.0 151.5L423.0 151.1L422.0 151.6L421.0 151.3L420.0 151.3L419.0 151.2L418.0 151.7L417.0 150.9L416.0 150.9L415.0 151.3L414.0 151.1L413.0 151.6L412.0 151.0L411.0 151.3L410.0 151.1L409.0 151.0L408.0 151.5L407.0 151.0L406.0 151.6L405.0 151.8L404.0 151.3L403.0 151.0L402.0 151.0L401.0 150.9L400.0 151.3L399.0 151.0L398.0 151.3L397.0 151.7L396.0 151.2L395.0 151.1L394.0 151.4L393.0 151.3L392.0 151.6L391.0 151.6L390.0 151.4L389.0 151.3L388.0 151.4L387.0 151.7L386.0 151.8L385.0 151.5L384.0 151.2L383.0 151.1L382.0 151.6L381.0 151.6L380.0 151.3L379.0 151.6L378.0 151.3L377.0 151.0L376.0 151.6L375.0 151.3L374.0 151.2L373.0 151.1L372.0 151.2L371.0 151.2L370.0 151.6L369.0 151.0L368.0 151.0L367.0 151.8L366.0 151.0L365.0 151.4L364.0 151.7L363.0 151.7L362.0 151.1L361.0 151.2L360.0 151.7L359.0 151.4L358.0 151.2L357.0 150.9L356.0 151.5L355.0 151.1L354.0 151.6L353.0 151.6L352.0 151.7L351.0 151.4L350.0 151.2L349.0 151.5L348.0 151.7L347.0 151.6L346.0 151.7L345.0 151.6L344.0 151.5L343.0 151.3L342.0 151.6L341.0 151.4L340.0 151.4L339.0 150.9L338.0 151.4L337.0 150.9L336.0 151.4L335.0 151.6L334.0 151.3L333.0 151.7L332.0 151.6L331.0 151.7L330.0 151.2L329.0 150.9L328.0 151.4L327.0 151.5L326.0 151.4L325.0 151.5L324.0 151.2L323.0 151.4L322.0 151.7L321.0 151.0L320.0 151.3L319.0 151.8L318.0 151.0L317.0 151.1L316.0 151.5L315.0 151.2L314.0 151.0L313.0 151.4L312.0 151.4L311.0 151.5L310.0 151.3L309.0 151.2L308.0 151.1L307.0 150.9L306.0 151.7L305.0 151.5L304.0 151.0L303.0 151.1L302.0 151.3L301.0 151.2L300.0 151.5L299.0 150.9L298.0 151.3L297.0 151.4L296.0 151.6L295.0 151.7L294.0 151.0L293.0 151.1L292.0 151.8L291.0 151.5L290.0 151.4L289.0 151.4L288.0 151.5L287.0 151.0L286.0 151.5L285.0 151.3L284.0 151.0L283.0 151.2L282.0 151.4L281.0 151.5L280.0 151.5L279.0 151.3L278.0 151.1L277.0 151.6L276.0 151.5L275.0 151.5L274.0 151.5L273.0 151.0L272.0 151.3L271.0 151.6L270.0 151.5L269.0 151.1L268.0 151.7L267.0 151.2L266.0 151.8L265.0 151.6L264.0 151.7L263.0 151.1L262.0 151.7L261.0 151.6L260.0 151.7L259.0 151.6L258.0 151.1L257.0 151.2L256.0 151.0L255.0 150.9L254.0 151.3L253.0 151.0L252.0 151.7L251.0 151.0L250.0 151.4L249.0 151.6L248.0 151.1L247.0 151.0L246.0 151.5L245.0 151.7L244.0 151.0L243.0 151.1L242.0 151.3L241.0 150.9L240.0 151.8L239.0 151.7L238.0 151.7L237.0 151.8L236.0 151.2L235.0 151.2L234.0 151.7L233.0 151.7L232.0 151.6L231.0 151.3L230.0 151.2L229.0 150.9L228.0 151.5L227.0 150.9L226.0 151.4L225.0 151.4L224.0 151.6L223.0 151.6L222.0 150.9L221.0 150.9L220.0 151.2L219.0 151.6L218.0 151.6L217.0 151.7L216.0 151.5L215.0 151.1L214.0 151.7L213.0 151.3L212.0 151.2L211.0 151.8L210.0 151.4L209.0 151.1L208.0 151.3L207.0 151.4L206.0 151.0L205.0 151.3L204.0 151.5L203.0 151.4L202.0 151.0L201.0 151.0L200.0 151.0L199.0 151.3L198.0 151.7L197.0 151.6L196.0 151.5L195.0 151.2L194.0 151.8L193.0 151.1L192.0 151.1L191.0 151.3L190.0 151.8L189.0 151.1L188.0 151.4L187.0 151.2L186.0 151.3L185.0 151.1L184.0 151.4L183.0 150.9L182.0 150.9L181.0 151.0L180.0 151.2L179.0 151.5L178.0 151.5L177.0 151.6L176.0 151.0L175.0 151.1L174.0 151.1L173.0 151.1L172.0 150.9L171.0 151.2L170.0 151.5L169.0 151.1L168.0 151.6L167.0 151.3L166.0 151.7L165.0 151.0L164.0 151.4L163.0 151.6L162.0 151.0L161.0 151.7L160.0 151.0L159.0 151.1L158.0 151.7L157.0 151.1L156.0 151.3L155.0 151.0L154.0 151.3L153.0 151.4L152.0 151.0L151.0 151.7L150.0 151.1L149.0 151.7L148.0 151.6L147.0 151.7L146.0 151.0L145.0 151.4L144.0 151.1L143.0 151.6L142.0 151.1L141.0 151.2L140.0 151.7L139.0 151.4L138.0 151.2L137.0 151.6L136.0 151.2L135.0 151.5L134.0 151.5L133.0 151.0L132.0 151.0L131.0 150.9L130.0 151.4L129.0 151.3L128.0 151.1L127.0 151.1L126.0 151.4L125.0 151.0L124.0 151.4L123.0 150.9L122.0 151.4L121.0 151.7L120.0 151.1L119.0 151.7L118.0 151.2L117.0 151.8L116.0 150.9L115.0 151.3L114.0 151.1L113.0 151.7L112.0 151.2L111.0 151.5L110.0 151.6L109.0 151.1L108.0 151.8L107.0 151.4L106.0 151.7L105.0 151.0L104.0 151.0L103.0 151.8L102.0 151.4L101.0 151.4L100.0 151.2L99.0 151.1L98.0 151.5L97.0 151.0L96.0 151.6L95.0 151.7L94.0 151.1L93.0 151.7L92.0 151.6L91.0 151.3L90.0 151.5L89.0 151.7L88.0 151.0L87.0 151.4L86.0 151.1L85.0 151.6L84.0 151.0L83.0 151.6L82.0 151.0L81.0 151.2L80.0 150.9L79.0 151.1L78.0 151.2L77.0 151.3L76.0 151.0L75.0 151.4L74.0 151.7L73.0 151.0L72.0 151.1L71.0 151.2L70.0 151.1L69.0 151.6L68.0 151.4L67.0 151.1L66.0 150.9L65.0 151.0L64.0 151.7L63.0 151.2L62.0 151.3L61.0 151.4L60.0 151.6L59.0 151.7L58.0 151.4L57.0 151.4L56.0 151.6L55.0 151.5L54.0 151.3L53.0 151.1L52.0 151.3L51.0 151.7L50.0 151.0L49.0 151.5L48.0 150.9L47.0 150.9L46.0 151.7L45.0 151.3L44.0 150.9L43.0 151.5L42.0 151.3L41.0 151.5L40.0 151.8L39.0 151.6L38.0 151.7L37.0 151.5L36.0 151.2L35.0 151.3L34.0 150.9L33.0 151.2L32.0 151.5L31.0 150.9L30.0 151.2L29.0 151.3L28.0 151.0L27.0 151.2L26.0 151.5L25.0 151.3L24.0 151.5L23.0 150.9L22.0 151.6L21.0 150.9L20.0 151.7L19.0 151.8L18.0 151.3L17.0 151.6Z" fill="#fd06fd"/>
<rect x="170.7" y="59.1" width="2" height="5" fill="#0a0608"/>
<rect x="170.7" y="78.1" width="2" height="5" fill="#0a0608"/>
<rect x="183.6" y="59.1" width="2" height="5" fill="#0a0608"/>
<rect x="183.6" y="78.1" width="2" height="5" fill="#0a0608"/>
<rect x="194.0" y="59.1" width="2" height="5" fill="#0a0608"/>
<rect x="194.0" y="78.1" width="2" height="5" fill="#0a0608"/>
<rect x="271.5" y="59.1" width="2" height="5" fill="#0a0608"/>
<rect x="271.5" y="78.1" width="2" height="5" fill="#0a0608"/>
<rect x="282.0" y="59.1" width="2" height="5" fill="#0a0608"/>
<rect x="282.0" y="78.1" width="2" height="5" fill="#0a0608"/>
<rect x="292.3" y="59.1" width="2" height="5" fill="#0a0608"/>
<rect x="292.3" y="78.1" width="2" height="5" fill="#0a0608"/>
<rect x="355.9" y="59.1" width="2" height="5" fill="#0a0608"/>
<rect x="355.9" y="78.1" width="2" height="5" fill="#0a0608"/>
<rect x="366.3" y="59.1" width="2" height="5" fill="#0a0608"/>
<rect x="366.3" y="78.1" width="2" height="5" fill="#0a0608"/>
<rect x="376.7" y="59.1" width="2" height="5" fill="#0a0608"/>
<rect x="376.7" y="78.1" width="2" height="5" fill="#0a0608"/>
<rect x="388.0" y="59.1" width="2" height="5" fill="#0a0608"/>
<rect x="388.0" y="78.1" width="2" height="5" fill="#0a0608"/>
<rect x="434.3" y="59.1" width="2" height="5" fill="#0a0608"/>
<rect x="434.3" y="78.1" width="2" height="5" fill="#0a0608"/>
<rect x="446.6" y="59.1" width="2" height="5" fill="#0a0608"/>
<rect x="446.6" y="78.1" width="2" height="5" fill="#0a0608"/>
<rect x="458.0" y="59.1" width="2" height="5" fill="#0a0608"/>
<rect x="458.0" y="78.1" width="2" height="5" fill="#0a0608"/>
<rect x="581.6" y="59.1" width="2" height="5" fill="#0a0608"/>
<rect x="581.6" y="78.1" width="2" height="5" fill="#0a0608"/>
<rect x="597.7" y="59.1" width="2" height="5" fill="#0a0608"/>
<rect x="597.7" y="78.1" width="2" height="5" fill="#0a0608"/>
<rect x="241.3" y="62.8" width="11.3" height="15.4" fill="#0ccad2"/>
<rect x="59.5" y="58.9" width="1.0" height="4.2" fill="#0a0608"/>
<rect x="59.5" y="78.5" width="1.0" height="4.2" fill="#0a0608"/>
<rect x="63.8" y="58.9" width="1.0" height="4.2" fill="#0a0608"/>
<rect x="63.8" y="78.5" width="1.0" height="4.2" fill="#0a0608"/>
<rect x="72.4" y="58.9" width="1.0" height="4.2" fill="#0a0608"/>
<rect x="72.4" y="78.5" width="1.0" height="4.2" fill="#0a0608"/>
<rect x="81.0" y="58.9" width="1.0" height="4.2" fill="#0a0608"/>
<rect x="81.0" y="78.5" width="1.0" height="4.2" fill="#0a0608"/>
<rect x="85.3" y="58.9" width="1.0" height="4.2" fill="#0a0608"/>
<rect x="85.3" y="78.5" width="1.0" height="4.2" fill="#0a0608"/>
<rect x="90.7" y="58.9" width="1.0" height="4.2" fill="#0a0608"/>
<rect x="90.7" y="78.5" width="1.0" height="4.2" fill="#0a0608"/>
<rect x="99.3" y="58.9" width="1.0" height="4.2" fill="#0a0608"/>
<rect x="99.3" y="78.5" width="1.0" height="4.2" fill="#0a0608"/>
<rect x="159.5" y="58.9" width="1.0" height="4.2" fill="#0a0608"/>
<rect x="159.5" y="78.5" width="1.0" height="4.2" fill="#0a0608"/>
<rect x="168.1" y="58.9" width="1.0" height="4.2" fill="#0a0608"/>
<rect x="168.1" y="78.5" width="1.0" height="4.2" fill="#0a0608"/>
<rect x="171.3" y="58.9" width="1.0" height="4.2" fill="#0a0608"/>
<rect x="171.3" y="78.5" width="1.0" height="4.2" fill="#0a0608"/>
<rect x="179.9" y="58.9" width="1.0" height="4.2" fill="#0a0608"/>
<rect x="179.9" y="78.5" width="1.0" height="4.2" fill="#0a0608"/>
<rect x="183.1" y="58.9" width="1.0" height="4.2" fill="#0a0608"/>
<rect x="183.1" y="78.5" width="1.0" height="4.2" fill="#0a0608"/>
<rect x="189.6" y="58.9" width="1.0" height="4.2" fill="#0a0608"/>
<rect x="189.6" y="78.5" width="1.0" height="4.2" fill="#0a0608"/>
<rect x="195.0" y="58.9" width="1.0" height="4.2" fill="#0a0608"/>
<rect x="195.0" y="78.5" width="1.0" height="4.2" fill="#0a0608"/>
<rect x="203.6" y="58.9" width="1.0" height="4.2" fill="#0a0608"/>
<rect x="203.6" y="78.5" width="1.0" height="4.2" fill="#0a0608"/>
<rect x="207.9" y="58.9" width="1.0" height="4.2" fill="#0a0608"/>
<rect x="207.9" y="78.5" width="1.0" height="4.2" fill="#0a0608"/>
<rect x="212.2" y="58.9" width="1.0" height="4.2" fill="#0a0608"/>
<rect x="212.2" y="78.5" width="1.0" height="4.2" fill="#0a0608"/>
<rect x="218.7" y="58.9" width="1.0" height="4.2" fill="#0a0608"/>
<rect x="218.7" y="78.5" width="1.0" height="4.2" fill="#0a0608"/>
<rect x="227.3" y="58.9" width="1.0" height="4.2" fill="#0a0608"/>
<rect x="227.3" y="78.5" width="1.0" height="4.2" fill="#0a0608"/>
<rect x="235.9" y="58.9" width="1.0" height="4.2" fill="#0a0608"/>
<rect x="235.9" y="78.5" width="1.0" height="4.2" fill="#0a0608"/>
<rect x="254.5" y="58.9" width="1.0" height="4.2" fill="#0a0608"/>
<rect x="254.5" y="78.5" width="1.0" height="4.2" fill="#0a0608"/>
<rect x="261.0" y="58.9" width="1.0" height="4.2" fill="#0a0608"/>
<rect x="261.0" y="78.5" width="1.0" height="4.2" fill="#0a0608"/>
<rect x="265.3" y="58.9" width="1.0" height="4.2" fill="#0a0608"/>
<rect x="265.3" y="78.5" width="1.0" height="4.2" fill="#0a0608"/>
<rect x="269.6" y="58.9" width="1.0" height="4.2" fill="#0a0608"/>
<rect x="269.6" y="78.5" width="1.0" height="4.2" fill="#0a0608"/>
<rect x="273.9" y="58.9" width="1.0" height="4.2" fill="#0a0608"/>
<rect x="273.9" y="78.5" width="1.0" height="4.2" fill="#0a0608"/>
<rect x="282.5" y="58.9" width="1.0" height="4.2" fill="#0a0608"/>
<rect x="282.5" y="78.5" width="1.0" height="4.2" fill="#0a0608"/>
<rect x="289.0" y="58.9" width="1.0" height="4.2" fill="#0a0608"/>
<rect x="289.0" y="78.5" width="1.0" height="4.2" fill="#0a0608"/>
<rect x="292.2" y="58.9" width="1.0" height="4.2" fill="#0a0608"/>
<rect x="292.2" y="78.5" width="1.0" height="4.2" fill="#0a0608"/>
<rect x="295.4" y="58.9" width="1.0" height="4.2" fill="#0a0608"/>
<rect x="295.4" y="78.5" width="1.0" height="4.2" fill="#0a0608"/>
<rect x="317.5" y="58.9" width="1.0" height="4.2" fill="#0a0608"/>
<rect x="317.5" y="78.5" width="1.0" height="4.2" fill="#0a0608"/>
<rect x="326.1" y="58.9" width="1.0" height="4.2" fill="#0a0608"/>
<rect x="326.1" y="78.5" width="1.0" height="4.2" fill="#0a0608"/>
<rect x="329.3" y="58.9" width="1.0" height="4.2" fill="#0a0608"/>
<rect x="329.3" y="78.5" width="1.0" height="4.2" fill="#0a0608"/>
<rect x="334.7" y="58.9" width="1.0" height="4.2" fill="#0a0608"/>
<rect x="334.7" y="78.5" width="1.0" height="4.2" fill="#0a0608"/>
<rect x="337.9" y="58.9" width="1.0" height="4.2" fill="#0a0608"/>
<rect x="337.9" y="78.5" width="1.0" height="4.2" fill="#0a0608"/>
<rect x="343.3" y="58.9" width="1.0" height="4.2" fill="#0a0608"/>
<rect x="343.3" y="78.5" width="1.0" height="4.2" fill="#0a0608"/>
<rect x="349.8" y="58.9" width="1.0" height="4.2" fill="#0a0608"/>
<rect x="349.8" y="78.5" width="1.0" height="4.2" fill="#0a0608"/>
<rect x="358.4" y="58.9" width="1.0" height="4.2" fill="#0a0608"/>
<rect x="358.4" y="78.5" width="1.0" height="4.2" fill="#0a0608"/>
<rect x="364.9" y="58.9" width="1.0" height="4.2" fill="#0a0608"/>
<rect x="364.9" y="78.5" width="1.0" height="4.2" fill="#0a0608"/>
<rect x="371.4" y="58.9" width="1.0" height="4.2" fill="#0a0608"/>
<rect x="371.4" y="78.5" width="1.0" height="4.2" fill="#0a0608"/>
<rect x="377.9" y="58.9" width="1.0" height="4.2" fill="#0a0608"/>
<rect x="377.9" y="78.5" width="1.0" height="4.2" fill="#0a0608"/>
<rect x="386.5" y="58.9" width="1.0" height="4.2" fill="#0a0608"/>
<rect x="386.5" y="78.5" width="1.0" height="4.2" fill="#0a0608"/>
<rect x="393.0" y="58.9" width="1.0" height="4.2" fill="#0a0608"/>
<rect x="393.0" y="78.5" width="1.0" height="4.2" fill="#0a0608"/>
<rect x="397.3" y="58.9" width="1.0" height="4.2" fill="#0a0608"/>
<rect x="397.3" y="78.5" width="1.0" height="4.2" fill="#0a0608"/>
<rect x="419.5" y="58.9" width="1.0" height="4.2" fill="#0a0608"/>
<rect x="419.5" y="78.5" width="1.0" height="4.2" fill="#0a0608"/>
<rect x="422.7" y="58.9" width="1.0" height="4.2" fill="#0a0608"/>
<rect x="422.7" y="78.5" width="1.0" height="4.2" fill="#0a0608"/>
<rect x="425.9" y="58.9" width="1.0" height="4.2" fill="#0a0608"/>
<rect x="425.9" y="78.5" width="1.0" height="4.2" fill="#0a0608"/>
<rect x="430.2" y="58.9" width="1.0" height="4.2" fill="#0a0608"/>
<rect x="430.2" y="78.5" width="1.0" height="4.2" fill="#0a0608"/>
<rect x="436.7" y="58.9" width="1.0" height="4.2" fill="#0a0608"/>
<rect x="436.7" y="78.5" width="1.0" height="4.2" fill="#0a0608"/>
<rect x="441.0" y="58.9" width="1.0" height="4.2" fill="#0a0608"/>
<rect x="441.0" y="78.5" width="1.0" height="4.2" fill="#0a0608"/>
<rect x="446.4" y="58.9" width="1.0" height="4.2" fill="#0a0608"/>
<rect x="446.4" y="78.5" width="1.0" height="4.2" fill="#0a0608"/>
<rect x="452.9" y="58.9" width="1.0" height="4.2" fill="#0a0608"/>
<rect x="452.9" y="78.5" width="1.0" height="4.2" fill="#0a0608"/>
<rect x="458.3" y="58.9" width="1.0" height="4.2" fill="#0a0608"/>
<rect x="458.3" y="78.5" width="1.0" height="4.2" fill="#0a0608"/>
<rect x="464.8" y="58.9" width="1.0" height="4.2" fill="#0a0608"/>
<rect x="464.8" y="78.5" width="1.0" height="4.2" fill="#0a0608"/>
<rect x="473.4" y="58.9" width="1.0" height="4.2" fill="#0a0608"/>
<rect x="473.4" y="78.5" width="1.0" height="4.2" fill="#0a0608"/>
<rect x="539.5" y="58.9" width="1.0" height="4.2" fill="#0a0608"/>
<rect x="539.5" y="78.5" width="1.0" height="4.2" fill="#0a0608"/>
<rect x="548.1" y="58.9" width="1.0" height="4.2" fill="#0a0608"/>
<rect x="548.1" y="78.5" width="1.0" height="4.2" fill="#0a0608"/>
<rect x="553.5" y="58.9" width="1.0" height="4.2" fill="#0a0608"/>
<rect x="553.5" y="78.5" width="1.0" height="4.2" fill="#0a0608"/>
<rect x="562.1" y="58.9" width="1.0" height="4.2" fill="#0a0608"/>
<rect x="562.1" y="78.5" width="1.0" height="4.2" fill="#0a0608"/>
<rect x="570.7" y="58.9" width="1.0" height="4.2" fill="#0a0608"/>
<rect x="570.7" y="78.5" width="1.0" height="4.2" fill="#0a0608"/>
<rect x="577.2" y="58.9" width="1.0" height="4.2" fill="#0a0608"/>
<rect x="577.2" y="78.5" width="1.0" height="4.2" fill="#0a0608"/>
<rect x="585.8" y="58.9" width="1.0" height="4.2" fill="#0a0608"/>
<rect x="585.8" y="78.5" width="1.0" height="4.2" fill="#0a0608"/>
<rect x="590.1" y="58.9" width="1.0" height="4.2" fill="#0a0608"/>
<rect x="590.1" y="78.5" width="1.0" height="4.2" fill="#0a0608"/>
<rect x="595.5" y="58.9" width="1.0" height="4.2" fill="#0a0608"/>
<rect x="595.5" y="78.5" width="1.0" height="4.2" fill="#0a0608"/>
<rect x="598.7" y="58.9" width="1.0" height="4.2" fill="#0a0608"/>
<rect x="598.7" y="78.5" width="1.0" height="4.2" fill="#0a0608"/>
<rect x="241.3" y="58.8" width="11.3" height="4" fill="#0a0608"/><rect x="241.3" y="78.2" width="11.3" height="5" fill="#0a0608"/>
<rect x="97.3" y="92.7" width="1.4" height="8.5" fill="#0a0608"/>
<rect x="97.3" y="108.6" width="1.4" height="8.5" fill="#0a0608"/>
<rect x="97.3" y="97.7" width="1.4" height="3.5" fill="#d8401c"/>
<rect x="97.3" y="108.6" width="1.4" height="3.5" fill="#d8401c"/>
<rect x="108.0" y="92.7" width="1.4" height="8.5" fill="#0a0608"/>
<rect x="108.0" y="108.6" width="1.4" height="8.5" fill="#0a0608"/>
<rect x="108.0" y="97.7" width="1.4" height="3.5" fill="#d8401c"/>
<rect x="108.0" y="108.6" width="1.4" height="3.5" fill="#d8401c"/>
<rect x="118.8" y="92.7" width="1.4" height="8.5" fill="#0a0608"/>
<rect x="118.8" y="108.6" width="1.4" height="8.5" fill="#0a0608"/>
<rect x="118.8" y="97.7" width="1.4" height="3.5" fill="#d8401c"/>
<rect x="118.8" y="108.6" width="1.4" height="3.5" fill="#d8401c"/>
<rect x="128.8" y="92.7" width="1.4" height="8.5" fill="#0a0608"/>
<rect x="128.8" y="108.6" width="1.4" height="8.5" fill="#0a0608"/>
<rect x="128.8" y="97.7" width="1.4" height="3.5" fill="#d8401c"/>
<rect x="128.8" y="108.6" width="1.4" height="3.5" fill="#d8401c"/>
<rect x="171.0" y="92.7" width="1.4" height="8.5" fill="#0a0608"/>
<rect x="171.0" y="108.6" width="1.4" height="8.5" fill="#0a0608"/>
<rect x="171.0" y="97.7" width="1.4" height="3.5" fill="#d8401c"/>
<rect x="171.0" y="108.6" width="1.4" height="3.5" fill="#d8401c"/>
<rect x="183.5" y="92.7" width="1.4" height="8.5" fill="#0a0608"/>
<rect x="183.5" y="108.6" width="1.4" height="8.5" fill="#0a0608"/>
<rect x="183.5" y="97.7" width="1.4" height="3.5" fill="#d8401c"/>
<rect x="183.5" y="108.6" width="1.4" height="3.5" fill="#d8401c"/>
<rect x="194.3" y="92.7" width="1.4" height="8.5" fill="#0a0608"/>
<rect x="194.3" y="108.6" width="1.4" height="8.5" fill="#0a0608"/>
<rect x="194.3" y="97.7" width="1.4" height="3.5" fill="#d8401c"/>
<rect x="194.3" y="108.6" width="1.4" height="3.5" fill="#d8401c"/>
<rect x="302.0" y="92.7" width="1.4" height="8.5" fill="#0a0608"/>
<rect x="302.0" y="108.6" width="1.4" height="8.5" fill="#0a0608"/>
<rect x="302.0" y="97.7" width="1.4" height="3.5" fill="#d8401c"/>
<rect x="302.0" y="108.6" width="1.4" height="3.5" fill="#d8401c"/>
<rect x="313.3" y="92.7" width="1.4" height="8.5" fill="#0a0608"/>
<rect x="313.3" y="108.6" width="1.4" height="8.5" fill="#0a0608"/>
<rect x="313.3" y="97.7" width="1.4" height="3.5" fill="#d8401c"/>
<rect x="313.3" y="108.6" width="1.4" height="3.5" fill="#d8401c"/>
<rect x="323.8" y="92.7" width="1.4" height="8.5" fill="#0a0608"/>
<rect x="323.8" y="108.6" width="1.4" height="8.5" fill="#0a0608"/>
<rect x="323.8" y="97.7" width="1.4" height="3.5" fill="#d8401c"/>
<rect x="323.8" y="108.6" width="1.4" height="3.5" fill="#d8401c"/>
<rect x="322.7" y="92.7" width="1.4" height="8.5" fill="#0a0608"/>
<rect x="322.7" y="108.6" width="1.4" height="8.5" fill="#0a0608"/>
<rect x="322.7" y="97.7" width="1.4" height="3.5" fill="#d8401c"/>
<rect x="322.7" y="108.6" width="1.4" height="3.5" fill="#d8401c"/>
<rect x="366.6" y="92.7" width="1.4" height="8.5" fill="#0a0608"/>
<rect x="366.6" y="108.6" width="1.4" height="8.5" fill="#0a0608"/>
<rect x="366.6" y="97.7" width="1.4" height="3.5" fill="#d8401c"/>
<rect x="366.6" y="108.6" width="1.4" height="3.5" fill="#d8401c"/>
<rect x="377.0" y="92.7" width="1.4" height="8.5" fill="#0a0608"/>
<rect x="377.0" y="108.6" width="1.4" height="8.5" fill="#0a0608"/>
<rect x="377.0" y="97.7" width="1.4" height="3.5" fill="#d8401c"/>
<rect x="377.0" y="108.6" width="1.4" height="3.5" fill="#d8401c"/>
<rect x="388.3" y="92.7" width="1.4" height="5" fill="#0a0608"/>
<rect x="388.3" y="112.1" width="1.4" height="5" fill="#0a0608"/>
<rect x="468.6" y="92.7" width="1.4" height="5" fill="#0a0608"/>
<rect x="468.6" y="112.1" width="1.4" height="5" fill="#0a0608"/>
<rect x="479.0" y="92.7" width="1.4" height="5" fill="#0a0608"/>
<rect x="479.0" y="112.1" width="1.4" height="5" fill="#0a0608"/>
<rect x="491.3" y="92.7" width="1.4" height="5" fill="#0a0608"/>
<rect x="491.3" y="112.1" width="1.4" height="5" fill="#0a0608"/>
<rect x="501.6" y="92.7" width="1.4" height="5" fill="#0a0608"/>
<rect x="501.6" y="112.1" width="1.4" height="5" fill="#0a0608"/>
<rect x="547.9" y="92.7" width="1.4" height="5" fill="#0a0608"/>
<rect x="547.9" y="112.1" width="1.4" height="5" fill="#0a0608"/>
<rect x="570.6" y="92.7" width="1.4" height="5" fill="#0a0608"/>
<rect x="570.6" y="112.1" width="1.4" height="5" fill="#0a0608"/>
<rect x="581.9" y="92.7" width="1.4" height="5" fill="#0a0608"/>
<rect x="581.9" y="112.1" width="1.4" height="5" fill="#0a0608"/>
<rect x="148.6" y="127.69999999999999" width="1.4" height="8.5" fill="#0a0608"/>
<rect x="148.6" y="143.8" width="1.4" height="8.5" fill="#0a0608"/>
<rect x="148.6" y="132.7" width="1.4" height="3.5" fill="#f07a38"/>
<rect x="148.6" y="143.8" width="1.4" height="3.5" fill="#f07a38"/>
<rect x="158.6" y="127.69999999999999" width="1.4" height="8.5" fill="#0a0608"/>
<rect x="158.6" y="143.8" width="1.4" height="8.5" fill="#0a0608"/>
<rect x="158.6" y="132.7" width="1.4" height="3.5" fill="#f07a38"/>
<rect x="158.6" y="143.8" width="1.4" height="3.5" fill="#f07a38"/>
<rect x="171.0" y="127.69999999999999" width="1.4" height="8.5" fill="#0a0608"/>
<rect x="171.0" y="143.8" width="1.4" height="8.5" fill="#0a0608"/>
<rect x="171.0" y="132.7" width="1.4" height="3.5" fill="#f07a38"/>
<rect x="171.0" y="143.8" width="1.4" height="3.5" fill="#f07a38"/>
<rect x="183.5" y="127.69999999999999" width="1.4" height="8.5" fill="#0a0608"/>
<rect x="183.5" y="143.8" width="1.4" height="8.5" fill="#0a0608"/>
<rect x="183.5" y="132.7" width="1.4" height="3.5" fill="#f07a38"/>
<rect x="183.5" y="143.8" width="1.4" height="3.5" fill="#f07a38"/>
<rect x="194.3" y="127.69999999999999" width="1.4" height="8.5" fill="#0a0608"/>
<rect x="194.3" y="143.8" width="1.4" height="8.5" fill="#0a0608"/>
<rect x="194.3" y="132.7" width="1.4" height="3.5" fill="#f07a38"/>
<rect x="194.3" y="143.8" width="1.4" height="3.5" fill="#f07a38"/>
<rect x="333.5" y="127.69999999999999" width="1.4" height="8.5" fill="#0a0608"/>
<rect x="333.5" y="143.8" width="1.4" height="8.5" fill="#0a0608"/>
<rect x="333.5" y="132.7" width="1.4" height="3.5" fill="#f07a38"/>
<rect x="333.5" y="143.8" width="1.4" height="3.5" fill="#f07a38"/>
<rect x="343.9" y="127.69999999999999" width="1.4" height="8.5" fill="#0a0608"/>
<rect x="343.9" y="143.8" width="1.4" height="8.5" fill="#0a0608"/>
<rect x="343.9" y="132.7" width="1.4" height="3.5" fill="#f07a38"/>
<rect x="343.9" y="143.8" width="1.4" height="3.5" fill="#f07a38"/>
<rect x="355.3" y="127.69999999999999" width="1.4" height="8.5" fill="#0a0608"/>
<rect x="355.3" y="143.8" width="1.4" height="8.5" fill="#0a0608"/>
<rect x="355.3" y="132.7" width="1.4" height="3.5" fill="#f07a38"/>
<rect x="355.3" y="143.8" width="1.4" height="3.5" fill="#f07a38"/>
<rect x="366.6" y="127.69999999999999" width="1.4" height="8.5" fill="#0a0608"/>
<rect x="366.6" y="143.8" width="1.4" height="8.5" fill="#0a0608"/>
<rect x="366.6" y="132.7" width="1.4" height="3.5" fill="#f07a38"/>
<rect x="366.6" y="143.8" width="1.4" height="3.5" fill="#f07a38"/>
<rect x="377.0" y="127.69999999999999" width="1.4" height="8.5" fill="#0a0608"/>
<rect x="377.0" y="143.8" width="1.4" height="8.5" fill="#0a0608"/>
<rect x="377.0" y="132.7" width="1.4" height="3.5" fill="#f07a38"/>
<rect x="377.0" y="143.8" width="1.4" height="3.5" fill="#f07a38"/>
<rect x="388.3" y="127.69999999999999" width="1.4" height="8.5" fill="#0a0608"/>
<rect x="388.3" y="143.8" width="1.4" height="8.5" fill="#0a0608"/>
<rect x="388.3" y="132.7" width="1.4" height="3.5" fill="#f07a38"/>
<rect x="388.3" y="143.8" width="1.4" height="3.5" fill="#f07a38"/>
<rect x="512.9" y="127.69999999999999" width="1.4" height="7" fill="#0a0608"/>
<rect x="512.9" y="145.3" width="1.4" height="7" fill="#0a0608"/>
<rect x="523.3" y="127.69999999999999" width="1.4" height="7" fill="#0a0608"/>
<rect x="523.3" y="145.3" width="1.4" height="7" fill="#0a0608"/>
<rect x="534.7" y="127.69999999999999" width="1.4" height="7" fill="#0a0608"/>
<rect x="534.7" y="145.3" width="1.4" height="7" fill="#0a0608"/>
<rect x="581.9" y="127.69999999999999" width="1.4" height="4.5" fill="#0a0608"/>
<rect x="581.9" y="147.8" width="1.4" height="4.5" fill="#0a0608"/>
<rect x="16.5" y="86.2" width="628.5" height="1.2" fill="#58565a"/>
<rect x="16.5" y="120.80000000000001" width="628.5" height="1.2" fill="#58565a"/>
<rect x="16.5" y="155.7" width="631.5" height="1.4" fill="#626064"/>
<rect x="16.5" y="293.2" width="631.5" height="1.4" fill="#626064"/>
<rect x="16.5" y="430.4" width="631.5" height="1.4" fill="#626064"/>
<rect x="15.8" y="53" width="1.3" height="516" fill="#5a585c"/>
<rect x="646.7" y="53" width="1.3" height="516" fill="#565458"/>
<rect x="644.5" y="53" width="1.1" height="103" fill="#c4c4c8"/>
<line x1="22.15" y1="170.1" x2="646" y2="170.1" stroke="#38363a" stroke-width="1.3" stroke-dasharray="1.3 5.005"/>
<line x1="22.15" y1="183.9" x2="646" y2="183.9" stroke="#38363a" stroke-width="1.3" stroke-dasharray="1.3 5.005"/>
<line x1="22.15" y1="197.6" x2="646" y2="197.6" stroke="#38363a" stroke-width="1.3" stroke-dasharray="1.3 5.005"/>
<line x1="22.15" y1="211.3" x2="646" y2="211.3" stroke="#38363a" stroke-width="1.3" stroke-dasharray="1.3 5.005"/>
<line x1="22.15" y1="225.1" x2="646" y2="225.1" stroke="#38363a" stroke-width="1.3" stroke-dasharray="1.3 5.005"/>
<line x1="22.15" y1="238.8" x2="646" y2="238.8" stroke="#38363a" stroke-width="1.3" stroke-dasharray="1.3 5.005"/>
<line x1="22.15" y1="252.5" x2="646" y2="252.5" stroke="#38363a" stroke-width="1.3" stroke-dasharray="1.3 5.005"/>
<line x1="22.15" y1="266.3" x2="646" y2="266.3" stroke="#38363a" stroke-width="1.3" stroke-dasharray="1.3 5.005"/>
<line x1="22.15" y1="280.0" x2="646" y2="280.0" stroke="#38363a" stroke-width="1.3" stroke-dasharray="1.3 5.005"/>
<line x1="79.5" y1="162.60" x2="79.5" y2="291.9" stroke="#38363a" stroke-width="1.3" stroke-dasharray="1.3 5.575"/>
<line x1="142.6" y1="162.60" x2="142.6" y2="291.9" stroke="#38363a" stroke-width="1.3" stroke-dasharray="1.3 5.575"/>
<line x1="205.6" y1="162.60" x2="205.6" y2="291.9" stroke="#38363a" stroke-width="1.3" stroke-dasharray="1.3 5.575"/>
<line x1="268.7" y1="162.60" x2="268.7" y2="291.9" stroke="#38363a" stroke-width="1.3" stroke-dasharray="1.3 5.575"/>
<line x1="331.8" y1="162.60" x2="331.8" y2="291.9" stroke="#38363a" stroke-width="1.3" stroke-dasharray="1.3 5.575"/>
<line x1="394.8" y1="162.60" x2="394.8" y2="291.9" stroke="#38363a" stroke-width="1.3" stroke-dasharray="1.3 5.575"/>
<line x1="457.8" y1="162.60" x2="457.8" y2="291.9" stroke="#38363a" stroke-width="1.3" stroke-dasharray="1.3 5.575"/>
<line x1="520.9" y1="162.60" x2="520.9" y2="291.9" stroke="#38363a" stroke-width="1.3" stroke-dasharray="1.3 5.575"/>
<line x1="583.9" y1="162.60" x2="583.9" y2="291.9" stroke="#38363a" stroke-width="1.3" stroke-dasharray="1.3 5.575"/>
<line x1="22.15" y1="307.6" x2="646" y2="307.6" stroke="#38363a" stroke-width="1.3" stroke-dasharray="1.3 5.005"/>
<line x1="22.15" y1="321.4" x2="646" y2="321.4" stroke="#38363a" stroke-width="1.3" stroke-dasharray="1.3 5.005"/>
<line x1="22.15" y1="335.1" x2="646" y2="335.1" stroke="#38363a" stroke-width="1.3" stroke-dasharray="1.3 5.005"/>
<line x1="22.15" y1="348.8" x2="646" y2="348.8" stroke="#38363a" stroke-width="1.3" stroke-dasharray="1.3 5.005"/>
<line x1="22.15" y1="362.6" x2="646" y2="362.6" stroke="#38363a" stroke-width="1.3" stroke-dasharray="1.3 5.005"/>
<line x1="22.15" y1="376.3" x2="646" y2="376.3" stroke="#38363a" stroke-width="1.3" stroke-dasharray="1.3 5.005"/>
<line x1="22.15" y1="390.0" x2="646" y2="390.0" stroke="#38363a" stroke-width="1.3" stroke-dasharray="1.3 5.005"/>
<line x1="22.15" y1="403.8" x2="646" y2="403.8" stroke="#38363a" stroke-width="1.3" stroke-dasharray="1.3 5.005"/>
<line x1="22.15" y1="417.5" x2="646" y2="417.5" stroke="#38363a" stroke-width="1.3" stroke-dasharray="1.3 5.005"/>
<line x1="79.5" y1="300.10" x2="79.5" y2="429.1" stroke="#38363a" stroke-width="1.3" stroke-dasharray="1.3 5.575"/>
<line x1="142.6" y1="300.10" x2="142.6" y2="429.1" stroke="#38363a" stroke-width="1.3" stroke-dasharray="1.3 5.575"/>
<line x1="205.6" y1="300.10" x2="205.6" y2="429.1" stroke="#38363a" stroke-width="1.3" stroke-dasharray="1.3 5.575"/>
<line x1="268.7" y1="300.10" x2="268.7" y2="429.1" stroke="#38363a" stroke-width="1.3" stroke-dasharray="1.3 5.575"/>
<line x1="331.8" y1="300.10" x2="331.8" y2="429.1" stroke="#38363a" stroke-width="1.3" stroke-dasharray="1.3 5.575"/>
<line x1="394.8" y1="300.10" x2="394.8" y2="429.1" stroke="#38363a" stroke-width="1.3" stroke-dasharray="1.3 5.575"/>
<line x1="457.8" y1="300.10" x2="457.8" y2="429.1" stroke="#38363a" stroke-width="1.3" stroke-dasharray="1.3 5.575"/>
<line x1="520.9" y1="300.10" x2="520.9" y2="429.1" stroke="#38363a" stroke-width="1.3" stroke-dasharray="1.3 5.575"/>
<line x1="583.9" y1="300.10" x2="583.9" y2="429.1" stroke="#38363a" stroke-width="1.3" stroke-dasharray="1.3 5.575"/>
<line x1="22.15" y1="444.8" x2="646" y2="444.8" stroke="#38363a" stroke-width="1.3" stroke-dasharray="1.3 5.005"/>
<line x1="22.15" y1="458.6" x2="646" y2="458.6" stroke="#38363a" stroke-width="1.3" stroke-dasharray="1.3 5.005"/>
<line x1="22.15" y1="472.3" x2="646" y2="472.3" stroke="#38363a" stroke-width="1.3" stroke-dasharray="1.3 5.005"/>
<line x1="22.15" y1="486.0" x2="646" y2="486.0" stroke="#38363a" stroke-width="1.3" stroke-dasharray="1.3 5.005"/>
<line x1="22.15" y1="499.8" x2="646" y2="499.8" stroke="#38363a" stroke-width="1.3" stroke-dasharray="1.3 5.005"/>
<line x1="22.15" y1="513.5" x2="646" y2="513.5" stroke="#38363a" stroke-width="1.3" stroke-dasharray="1.3 5.005"/>
<line x1="22.15" y1="527.2" x2="646" y2="527.2" stroke="#38363a" stroke-width="1.3" stroke-dasharray="1.3 5.005"/>
<line x1="22.15" y1="541.0" x2="646" y2="541.0" stroke="#38363a" stroke-width="1.3" stroke-dasharray="1.3 5.005"/>
<line x1="22.15" y1="554.7" x2="646" y2="554.7" stroke="#38363a" stroke-width="1.3" stroke-dasharray="1.3 5.005"/>
<line x1="79.5" y1="437.30" x2="79.5" y2="566.6" stroke="#38363a" stroke-width="1.3" stroke-dasharray="1.3 5.575"/>
<line x1="142.6" y1="437.30" x2="142.6" y2="566.6" stroke="#38363a" stroke-width="1.3" stroke-dasharray="1.3 5.575"/>
<line x1="205.6" y1="437.30" x2="205.6" y2="566.6" stroke="#38363a" stroke-width="1.3" stroke-dasharray="1.3 5.575"/>
<line x1="268.7" y1="437.30" x2="268.7" y2="566.6" stroke="#38363a" stroke-width="1.3" stroke-dasharray="1.3 5.575"/>
<line x1="331.8" y1="437.30" x2="331.8" y2="566.6" stroke="#38363a" stroke-width="1.3" stroke-dasharray="1.3 5.575"/>
<line x1="394.8" y1="437.30" x2="394.8" y2="566.6" stroke="#38363a" stroke-width="1.3" stroke-dasharray="1.3 5.575"/>
<line x1="457.8" y1="437.30" x2="457.8" y2="566.6" stroke="#38363a" stroke-width="1.3" stroke-dasharray="1.3 5.575"/>
<line x1="520.9" y1="437.30" x2="520.9" y2="566.6" stroke="#38363a" stroke-width="1.3" stroke-dasharray="1.3 5.575"/>
<line x1="583.9" y1="437.30" x2="583.9" y2="566.6" stroke="#38363a" stroke-width="1.3" stroke-dasharray="1.3 5.575"/>
<clipPath id="c1"><rect x="17" y="157.1" width="629.7" height="136.1"/></clipPath>
<clipPath id="c2"><rect x="17" y="294.6" width="629.7" height="135.8"/></clipPath>
<clipPath id="c3"><rect x="17" y="431.8" width="629.7" height="137.2"/></clipPath>
<path d="M16.5 261.0L18.0 264.3L19.5 266.8L21.0 268.4L22.5 269.1L24.0 268.8L25.5 267.6L27.0 265.5L28.5 262.5L30.0 258.8L31.5 254.3L33.0 249.2L34.5 243.6L36.0 237.7L37.5 231.5L39.0 225.2L40.5 218.9L42.0 212.8L43.5 207.0L45.0 201.7L46.5 196.9L48.0 192.8L49.5 189.4L51.0 186.9L52.5 185.3L54.0 184.5L55.5 184.8L57.0 185.9L58.5 188.0L60.0 190.9L61.5 194.6L63.0 199.1L64.5 204.1L66.0 209.7L67.5 215.6L69.0 221.8L70.5 228.1L72.0 234.4L73.5 240.5L75.0 246.3L76.5 251.7L78.0 256.5L79.5 260.6L81.0 264.0L82.5 266.6L84.0 268.3L85.5 269.1L87.0 268.9L88.5 267.8L90.0 265.8L91.5 262.9L93.0 259.2L94.5 254.8L96.0 249.7L97.5 244.2L99.0 238.3L100.5 232.1L102.0 225.8L103.5 219.5L105.0 213.4L106.5 207.6L108.0 202.2L109.5 197.4L111.0 193.2L112.5 189.7L114.0 187.1L115.5 185.4L117.0 184.6L118.5 184.7L120.0 185.8L121.5 187.7L123.0 190.6L124.5 194.2L126.0 198.6L127.5 203.6L129.0 209.1L130.5 215.0L132.0 221.2L133.5 227.5L135.0 233.8L136.5 239.9L138.0 245.7L139.5 251.1L141.0 256.0L142.5 260.2L144.0 263.7L145.5 266.4L147.0 268.2L148.5 269.0L150.0 268.9L151.5 267.9L153.0 266.0L154.5 263.2L156.0 259.6L157.5 255.2L159.0 250.3L160.5 244.8L162.0 238.9L163.5 232.7L165.0 226.4L166.5 220.1L168.0 214.0L169.5 208.2L171.0 202.7L172.5 197.8L174.0 193.6L175.5 190.0L177.0 187.3L178.5 185.5L180.0 184.6L181.5 184.6L183.0 185.6L184.5 187.5L186.0 190.2L187.5 193.8L189.0 198.1L190.5 203.1L192.0 208.5L193.5 214.4L195.0 220.6L196.5 226.9L198.0 233.1L199.5 239.3L201.0 245.2L202.5 250.6L204.0 255.6L205.5 259.8L207.0 263.4L208.5 266.2L210.0 268.0L211.5 269.0L213.0 269.0L214.5 268.1L216.0 266.2L217.5 263.5L219.0 260.0L220.5 255.7L222.0 250.8L223.5 245.3L225.0 239.5L226.5 233.3L228.0 227.1L229.5 220.8L231.0 214.6L232.5 208.7L234.0 203.2L235.5 198.3L237.0 193.9L238.5 190.4L240.0 187.6L241.5 185.7L243.0 184.7L244.5 184.6L246.0 185.5L247.5 187.3L249.0 189.9L250.5 193.4L252.0 197.7L253.5 202.5L255.0 208.0L256.5 213.8L258.0 219.9L259.5 226.2L261.0 232.5L262.5 238.7L264.0 244.6L265.5 250.1L267.0 255.1L268.5 259.5L270.0 263.1L271.5 265.9L273.0 267.9L274.5 268.9L276.0 269.0L277.5 268.2L279.0 266.5L280.5 263.8L282.0 260.4L283.5 256.2L285.0 251.3L286.5 245.9L288.0 240.1L289.5 234.0L291.0 227.7L292.5 221.4L294.0 215.2L295.5 209.3L297.0 203.8L298.5 198.7L300.0 194.4L301.5 190.7L303.0 187.8L306.1 185.4L309.9 191.8L312.4 190.5L316.2 198.1L321.3 218.4L326.3 243.7L328.9 255.1L332.7 243.7L336.5 271.5L341.0 288.0L344.1 281.6L347.8 256.3L350.4 225.9L352.9 175.3L356.7 163.9L359.2 182.9L363.0 214.6L369.4 204.4L373.2 193.0L377.0 157.6L382.0 157.6L385.8 170.3L389.6 213.3L392.2 256.3L394.7 295.6M404.8 295.6L408.6 281.6L411.1 251.3L413.7 213.3L416.2 198.1L420.0 193.0L423.8 185.4L427.6 172.8L430.1 174.1L432.7 186.7L436.5 186.7L439.0 171.5L439.4 171.5L441.4 190.5L443.2 225.9L445.2 246.2L449.0 251.3L452.8 261.4L456.6 281.6L459.9 294.3L462.9 284.2L468.0 274.1L470.5 276.6L473.0 251.3L475.6 218.4L480.6 208.2L484.4 175.3L487.7 160.1L490.8 160.1L493.3 175.3L496.3 195.6L499.6 201.9L503.4 208.2L505.9 218.4L509.0 238.6L511.5 236.1L513.5 251.3L516.1 276.6L518.6 294.3L523.7 291.8L526.2 251.3L530.0 247.5L533.8 243.7L536.3 233.5L540.1 215.8L543.9 193.0L546.5 175.3L549.0 161.4L554.1 163.9L556.6 180.4L559.1 200.6L561.6 210.8L568.0 210.8L570.5 231.0L575.6 236.1L578.1 263.9L580.6 295.6M588.2 295.6L590.8 271.5L593.3 246.2L597.1 241.1L602.2 233.5L607.2 218.4L609.7 188.0L612.3 160.1L614.8 157.1L618.6 158.9L621.1 172.8L623.7 188.0L626.2 200.6L628.7 215.8L631.3 246.2L632.5 233.5L635.1 218.4L637.6 220.9L640.1 236.1L643.9 253.8L647.2 271.5" fill="none" stroke="#d8d010" stroke-width="1.15" stroke-linejoin="round" clip-path="url(#c1)"/>
<path d="M16.5 242.9L18.0 245.2L19.5 247.1L21.0 248.5L22.5 249.2L24.0 249.2L25.5 248.6L27.0 247.3L28.5 245.4L30.0 243.1L31.5 240.5L33.0 237.8L34.5 234.9L36.0 232.1L37.5 229.3L39.0 226.5L40.5 223.7L42.0 220.9L43.5 218.1L45.0 215.3L46.5 212.5L48.0 209.9L49.5 207.5L51.0 205.6L52.5 204.2L54.0 203.4L55.5 203.4L57.0 204.0L58.5 205.3L60.0 207.1L61.5 209.4L63.0 212.0L64.5 214.7L66.0 217.5L67.5 220.4L69.0 223.2L70.5 226.0L72.0 228.7L73.5 231.5L75.0 234.4L76.5 237.2L78.0 240.0L79.5 242.6L81.0 245.0L82.5 246.9L84.0 248.4L85.5 249.2L87.0 249.3L88.5 248.7L90.0 247.4L91.5 245.6L93.0 243.3L94.5 240.8L96.0 238.0L97.5 235.2L99.0 232.4L100.5 229.6L102.0 226.8L103.5 224.0L105.0 221.2L106.5 218.4L108.0 215.5L109.5 212.8L111.0 210.1L112.5 207.7L114.0 205.8L115.5 204.3L117.0 203.5L118.5 203.3L120.0 203.9L121.5 205.1L123.0 206.9L124.5 209.1L126.0 211.7L127.5 214.4L129.0 217.2L130.5 220.1L132.0 222.9L133.5 225.7L135.0 228.5L136.5 231.3L138.0 234.1L139.5 236.9L141.0 239.7L142.5 242.3L144.0 244.7L145.5 246.8L147.0 248.2L148.5 249.1L150.0 249.3L151.5 248.8L153.0 247.6L154.5 245.8L156.0 243.6L157.5 241.0L159.0 238.3L160.5 235.5L162.0 232.7L163.5 229.9L165.0 227.1L166.5 224.3L168.0 221.5L169.5 218.7L171.0 215.8L172.5 213.0L174.0 210.4L175.5 208.0L177.0 205.9L178.5 204.4L180.0 203.5L181.5 203.3L183.0 203.8L184.5 205.0L186.0 206.7L187.5 208.9L189.0 211.4L190.5 214.1L192.0 217.0L193.5 219.8L195.0 222.6L196.5 225.4L198.0 228.2L199.5 231.0L201.0 233.8L202.5 236.6L204.0 239.4L205.5 242.1L207.0 244.5L208.5 246.6L210.0 248.1L211.5 249.0L213.0 249.3L214.5 248.8L216.0 247.7L217.5 246.0L219.0 243.8L220.5 241.3L222.0 238.6L223.5 235.8L225.0 232.9L226.5 230.1L228.0 227.3L229.5 224.6L231.0 221.8L232.5 218.9L234.0 216.1L235.5 213.3L237.0 210.6L238.5 208.2L240.0 206.1L241.5 204.5L243.0 203.6L244.5 203.3L246.0 203.7L247.5 204.8L249.0 206.5L250.5 208.7L252.0 211.2L253.5 213.9L255.0 216.7L256.5 219.5L258.0 222.3L259.5 225.1L261.0 227.9L262.5 230.7L264.0 233.5L265.5 236.3L267.0 239.1L268.5 241.8L270.0 244.3L271.5 246.4L273.0 248.0L274.5 249.0L276.0 249.3L277.5 248.9L279.0 247.9L280.5 246.2L282.0 244.1L283.5 241.6L285.0 238.9L286.5 236.1L288.0 233.2L289.5 230.4L291.0 227.6L292.5 224.8L294.0 222.0L295.5 219.2L297.0 216.4L298.5 213.6L300.0 210.9L301.5 208.4L303.0 206.3L308.6 200.6L312.4 210.8L317.5 212.0L321.3 225.9L328.9 246.2L333.9 237.3L339.0 233.5L342.8 241.1L346.6 255.1L350.4 241.1L354.2 225.9L358.0 198.1L363.0 187.5L365.6 204.4L369.4 215.8L373.2 224.7L375.7 223.4L379.5 250.0L383.3 239.9L387.1 237.3L392.2 223.4L394.7 236.1L398.5 231.0L401.0 236.1L403.5 227.2L407.3 238.6L409.9 236.1L412.4 213.3L414.4 199.4L416.2 215.8L420.0 208.2L422.5 200.6L425.1 213.3L428.9 223.4L431.4 236.1L433.2 252.5L435.7 222.2L437.6 233.5L441.4 271.5L443.9 241.1L445.7 222.2L449.0 228.5L451.5 243.7L454.1 258.9L456.6 236.1L458.4 220.9L460.9 228.5L464.2 200.6L465.9 220.9L468.0 246.2L470.5 210.8L473.5 163.9L475.1 200.6L476.8 248.7L479.4 223.4L483.2 210.8L487.0 215.8L490.8 222.2L494.6 228.5L498.4 209.5L502.2 238.6L505.4 286.7L507.2 238.6L509.0 208.2L511.5 218.4L514.8 236.1L518.6 236.1L522.4 228.5L527.5 223.4L530.5 238.6L533.8 223.4L535.8 182.9L536.8 160.1L538.4 213.3L540.1 251.3L542.7 223.4L546.5 219.6L551.5 220.9L556.6 225.9L559.1 228.5L561.6 214.6L564.2 231.0L566.7 266.5L568.7 288.0L570.5 225.9L572.3 203.2L574.3 223.4L576.8 231.0L580.6 239.9L584.4 231.0L587.5 236.1L590.0 215.8L592.5 251.3L595.1 233.5L597.6 193.0L599.6 171.5L600.9 213.3L603.4 243.7L605.9 231.0L609.7 215.8L612.8 218.4L616.1 223.4L618.6 218.4L621.1 231.0L624.4 193.0L626.2 208.2L628.7 233.5L631.3 281.6L632.5 251.3L634.6 212.0L636.3 225.9L638.9 246.2L642.7 256.3L647.2 257.6" fill="none" stroke="#10c8d0" stroke-width="1.15" stroke-linejoin="round" clip-path="url(#c1)"/>
<path d="M16.5 343.8L18.0 346.2L19.5 348.9L21.0 351.8L22.5 354.6L24.0 357.4L25.5 360.0L27.0 362.5L28.5 364.9L30.0 367.4L31.5 370.0L33.0 372.8L34.5 375.6L36.0 378.4L37.5 381.1L39.0 383.5L40.5 385.4L42.0 386.6L43.5 387.0L45.0 386.6L46.5 385.4L48.0 383.5L49.5 381.1L51.0 378.4L52.5 375.6L54.0 372.8L55.5 370.0L57.0 367.4L58.5 364.9L60.0 362.5L61.5 360.0L63.0 357.4L64.5 354.6L66.0 351.8L67.5 348.9L69.0 346.2L70.5 343.8L72.0 341.9L73.5 340.7L75.0 340.2L76.5 340.6L78.0 341.7L79.5 343.5L81.0 345.9L82.5 348.6L84.0 351.4L85.5 354.3L87.0 357.0L88.5 359.6L90.0 362.1L91.5 364.6L93.0 367.1L94.5 369.7L96.0 372.4L97.5 375.2L99.0 378.1L100.5 380.8L102.0 383.2L103.5 385.2L105.0 386.5L106.5 387.0L108.0 386.7L109.5 385.6L111.0 383.8L112.5 381.5L114.0 378.8L115.5 376.0L117.0 373.1L118.5 370.4L120.0 367.8L121.5 365.2L123.0 362.8L124.5 360.3L126.0 357.7L127.5 355.0L129.0 352.2L130.5 349.3L132.0 346.6L133.5 344.1L135.0 342.1L136.5 340.8L138.0 340.2L139.5 340.5L141.0 341.5L142.5 343.3L144.0 345.5L145.5 348.2L147.0 351.0L148.5 353.9L150.0 356.6L151.5 359.3L153.0 361.8L154.5 364.3L156.0 366.7L157.5 369.3L159.0 372.0L160.5 374.8L162.0 377.7L163.5 380.5L165.0 382.9L166.5 385.0L168.0 386.3L169.5 387.0L171.0 386.8L172.5 385.8L174.0 384.1L175.5 381.8L177.0 379.2L178.5 376.4L180.0 373.5L181.5 370.7L183.0 368.1L184.5 365.6L186.0 363.1L187.5 360.6L189.0 358.1L190.5 355.4L192.0 352.6L193.5 349.7L195.0 346.9L196.5 344.4L198.0 342.4L199.5 340.9L201.0 340.2L202.5 340.4L204.0 341.3L205.5 343.0L207.0 345.2L208.5 347.8L210.0 350.6L211.5 353.5L213.0 356.3L214.5 358.9L216.0 361.5L217.5 363.9L219.0 366.4L220.5 369.0L222.0 371.7L223.5 374.5L225.0 377.3L226.5 380.1L228.0 382.6L229.5 384.7L231.0 386.2L232.5 386.9L234.0 386.9L235.5 386.0L237.0 384.3L238.5 382.1L240.0 379.6L241.5 376.7L243.0 373.9L244.5 371.1L246.0 368.4L247.5 365.9L249.0 363.4L250.5 361.0L252.0 358.4L253.5 355.7L255.0 352.9L256.5 350.1L258.0 347.3L259.5 344.7L261.0 342.6L262.5 341.1L264.0 340.3L265.5 340.3L267.0 341.2L268.5 342.7L270.0 344.9L271.5 347.5L273.0 350.3L274.5 353.1L276.0 355.9L277.5 358.6L279.0 361.1L280.5 363.6L282.0 366.1L283.5 368.6L285.0 371.3L286.5 374.1L288.0 376.9L289.5 379.7L291.0 382.3L292.5 384.5L294.0 386.0L295.5 386.9L297.0 386.9L298.5 386.1L300.0 384.6L301.5 382.5L303.0 379.9L304.5 377.1L306.1 377.9L309.1 369.0L312.4 369.0L317.5 351.3L321.3 345.7L331.4 345.7L336.5 347.5L342.8 357.6L349.1 376.6L354.2 379.1L359.2 385.5L363.0 380.4L366.8 379.1L369.9 375.3L373.2 382.9L375.7 360.2L377.5 362.7L384.6 348.8L388.4 353.8L392.2 355.1L397.2 372.8L401.0 366.5L404.3 399.4L406.1 366.5L413.7 385.5L416.2 375.3L420.0 374.1L423.0 362.7L426.3 370.3L429.6 367.7L430.0 331.0L432.0 309.5L433.8 338.6L435.6 369.0L437.6 356.4L441.4 342.4L445.2 361.4L449.0 363.9L454.1 380.4L456.6 353.8L458.4 350.0L460.9 361.4L462.9 394.3L464.2 418.4L465.9 363.9L467.5 337.4L469.2 353.8L471.8 389.3L473.5 396.9L475.6 374.1L477.6 366.5L479.4 369.0L483.2 352.6L488.2 363.9L492.0 348.8L495.8 327.2L497.8 358.9L498.9 382.9L500.9 363.9L504.7 329.8L508.5 356.4L511.0 361.4L514.8 380.4L518.1 369.0L521.1 370.3L527.5 393.1L529.2 369.0L530.8 350.0L533.3 366.5L536.3 403.2L538.9 371.5L541.9 366.5L545.9 348.8L549.0 361.4L555.3 352.6L558.6 331.0L560.4 358.9L562.2 380.4L565.4 348.8L568.0 327.2L570.5 353.8L574.3 361.4L578.1 379.1L583.9 369.0L587.0 376.6L589.0 394.3L590.8 413.3L592.5 351.3L594.1 333.6L595.8 353.8L599.1 394.3L602.2 374.1L604.7 369.0L609.7 348.8L614.8 353.8L618.6 346.2L621.9 314.6L623.7 381.7L625.4 415.8L627.5 384.2L629.5 356.4L631.3 343.7L633.8 366.5L637.6 363.9L647.2 369.0" fill="none" stroke="#e81418" stroke-width="1.15" stroke-linejoin="round" clip-path="url(#c2)"/>
<path d="M16.5 324.8L18.0 327.5L19.5 331.0L21.0 335.3L22.5 340.1L24.0 345.6L25.5 351.4L27.0 357.5L28.5 363.8L30.0 370.1L31.5 376.2L33.0 382.1L34.5 387.6L36.0 392.5L37.5 396.9L39.0 400.5L40.5 403.3L42.0 405.2L43.5 406.2L45.0 406.3L46.5 405.5L48.0 403.7L49.5 401.1L51.0 397.6L52.5 393.4L54.0 388.6L55.5 383.2L57.0 377.4L58.5 371.3L60.0 365.0L61.5 358.8L63.0 352.6L64.5 346.7L66.0 341.2L67.5 336.2L69.0 331.8L70.5 328.2L72.0 325.3L73.5 323.3L75.0 322.2L76.5 322.1L78.0 322.8L79.5 324.5L81.0 327.1L82.5 330.5L84.0 334.7L85.5 339.5L87.0 344.8L88.5 350.6L90.0 356.7L91.5 362.9L93.0 369.2L94.5 375.4L96.0 381.3L97.5 386.9L99.0 391.9L100.5 396.3L102.0 400.0L103.5 402.9L105.0 405.0L106.5 406.1L108.0 406.4L109.5 405.6L111.0 404.0L112.5 401.5L114.0 398.1L115.5 394.0L117.0 389.3L118.5 384.0L120.0 378.2L121.5 372.1L123.0 365.9L124.5 359.6L126.0 353.4L127.5 347.5L129.0 341.9L130.5 336.8L132.0 332.4L133.5 328.6L135.0 325.6L136.5 323.5L138.0 322.3L139.5 322.0L141.0 322.7L142.5 324.3L144.0 326.7L145.5 330.0L147.0 334.1L148.5 338.8L150.0 344.1L151.5 349.8L153.0 355.9L154.5 362.1L156.0 368.4L157.5 374.6L159.0 380.5L160.5 386.1L162.0 391.3L163.5 395.8L165.0 399.6L166.5 402.6L168.0 404.8L169.5 406.0L171.0 406.4L172.5 405.8L174.0 404.3L175.5 401.9L177.0 398.6L178.5 394.6L180.0 389.9L181.5 384.7L183.0 379.0L184.5 372.9L186.0 366.7L187.5 360.4L189.0 354.2L190.5 348.2L192.0 342.6L193.5 337.5L195.0 332.9L196.5 329.1L198.0 326.0L199.5 323.7L201.0 322.4L202.5 322.0L204.0 322.5L205.5 324.0L207.0 326.3L208.5 329.5L210.0 333.5L211.5 338.1L213.0 343.3L214.5 349.0L216.0 355.0L217.5 361.3L219.0 367.6L220.5 373.8L222.0 379.8L223.5 385.4L225.0 390.6L226.5 395.2L228.0 399.1L229.5 402.2L231.0 404.5L232.5 405.9L234.0 406.4L235.5 405.9L237.0 404.5L238.5 402.2L240.0 399.1L241.5 395.2L243.0 390.6L244.5 385.4L246.0 379.8L247.5 373.8L249.0 367.6L250.5 361.3L252.0 355.0L253.5 349.0L255.0 343.3L256.5 338.1L258.0 333.5L259.5 329.5L261.0 326.3L262.5 324.0L264.0 322.5L265.5 322.0L267.0 322.4L268.5 323.7L270.0 326.0L271.5 329.1L273.0 332.9L274.5 337.5L276.0 342.6L277.5 348.2L279.0 354.2L280.5 360.4L282.0 366.7L283.5 372.9L285.0 379.0L286.5 384.7L288.0 389.9L289.5 394.6L291.0 398.6L292.5 401.9L294.0 404.3L295.5 405.8L297.0 406.4L298.5 406.0L300.0 404.8L301.5 402.6L303.0 399.6L304.5 395.8L306.0 391.3L307.5 386.1L309.0 380.5L310.5 374.6L312.0 368.4L313.5 362.1L315.0 355.9L316.5 349.8L318.0 344.1L319.5 338.8L325.8 326.0L328.4 329.8L331.4 323.4L335.2 329.8L339.0 346.2L341.5 347.5L346.6 374.1L351.6 393.1L359.2 407.0L363.8 397.4L368.1 400.7L371.9 384.2L374.9 382.9L377.0 353.8L379.5 336.1L382.0 332.3L385.8 293.1M393.4 293.1L397.2 313.3L401.0 323.4L404.8 346.2L407.3 371.5L412.4 409.5L417.0 431.0L421.3 419.6L423.8 420.9L426.3 413.3L429.6 412.1L430.0 412.1L433.8 371.5L436.3 348.8L438.9 358.9L442.7 326.0L445.7 305.7L449.0 301.9L452.8 308.3L457.3 318.4L460.9 313.3L462.4 348.8L465.4 386.7L467.5 393.1L470.5 389.3L474.3 419.6L479.4 431.0L481.9 429.8L485.7 403.2L489.5 417.1L492.8 419.6L494.6 371.5L497.1 336.1L500.9 329.8L504.7 326.0L508.5 305.7L511.0 299.4L514.8 315.8L518.1 324.7L521.1 307.0L524.2 304.5L525.7 338.6L527.5 374.1L530.0 399.4L531.3 403.2L533.8 400.7L537.6 409.5L541.4 427.2L545.2 417.1L548.5 407.0L551.5 424.7L554.1 431.0L556.1 429.8L557.1 389.3L559.1 338.6L561.6 326.0L565.4 323.4L568.7 320.9L571.8 308.3L574.8 301.9L578.1 313.3L581.1 328.5L584.4 310.8L587.5 298.1L589.0 338.6L590.8 371.5L593.3 407.0L595.8 412.1L599.6 422.2L604.7 427.2L607.2 426.0L610.3 407.0L612.8 386.7L616.1 407.0L618.6 422.2L621.1 389.3L623.7 353.8L625.4 336.1L628.7 331.0L631.3 298.1L635.1 304.5L640.1 303.2L643.9 308.3L647.2 313.3" fill="none" stroke="#10c818" stroke-width="1.15" stroke-linejoin="round" clip-path="url(#c2)"/>
<path d="M16.5 502.5L18.0 500.2L19.5 498.0L21.0 495.6L22.5 493.1L24.0 490.5L25.5 487.9L27.0 485.4L28.5 483.0L30.0 481.1L31.5 479.7L33.0 479.1L34.5 479.1L36.0 480.0L37.5 481.4L39.0 483.5L40.5 485.9L42.0 488.4L43.5 491.1L45.0 493.6L46.5 496.1L48.0 498.4L49.5 500.7L51.0 503.0L52.5 505.3L54.0 507.8L55.5 510.4L57.0 513.0L58.5 515.6L60.0 517.9L61.5 519.8L63.0 521.2L64.5 521.9L66.0 521.9L67.5 521.1L69.0 519.6L70.5 517.6L72.0 515.2L73.5 512.6L75.0 510.0L76.5 507.4L78.0 505.0L79.5 502.7L81.0 500.4L82.5 498.1L84.0 495.8L85.5 493.3L87.0 490.7L88.5 488.1L90.0 485.5L91.5 483.2L93.0 481.2L94.5 479.8L96.0 479.1L97.5 479.1L99.0 479.9L100.5 481.3L102.0 483.3L103.5 485.7L105.0 488.3L106.5 490.9L108.0 493.5L109.5 495.9L111.0 498.3L112.5 500.5L114.0 502.8L115.5 505.2L117.0 507.6L118.5 510.2L120.0 512.8L121.5 515.4L123.0 517.8L124.5 519.7L126.0 521.2L127.5 521.9L129.0 521.9L130.5 521.2L132.0 519.7L133.5 517.8L135.0 515.4L136.5 512.8L138.0 510.2L139.5 507.6L141.0 505.2L142.5 502.8L144.0 500.5L145.5 498.3L147.0 495.9L148.5 493.5L150.0 490.9L151.5 488.3L153.0 485.7L154.5 483.3L156.0 481.3L157.5 479.9L159.0 479.1L160.5 479.1L162.0 479.8L163.5 481.2L165.0 483.2L166.5 485.5L168.0 488.1L169.5 490.7L171.0 493.3L172.5 495.8L174.0 498.1L175.5 500.4L177.0 502.7L178.5 505.0L180.0 507.4L181.5 510.0L183.0 512.6L184.5 515.2L186.0 517.6L187.5 519.6L189.0 521.1L190.5 521.9L192.0 521.9L193.5 521.2L195.0 519.8L196.5 517.9L198.0 515.6L199.5 513.0L201.0 510.4L202.5 507.8L204.0 505.3L205.5 503.0L207.0 500.7L208.5 498.4L210.0 496.1L211.5 493.6L213.0 491.1L214.5 488.4L216.0 485.9L217.5 483.5L219.0 481.4L220.5 480.0L222.0 479.1L223.5 479.1L225.0 479.7L226.5 481.1L228.0 483.0L229.5 485.4L231.0 487.9L232.5 490.5L234.0 493.1L235.5 495.6L237.0 498.0L238.5 500.2L240.0 502.5L241.5 504.8L243.0 507.3L244.5 509.8L246.0 512.5L247.5 515.1L249.0 517.5L250.5 519.5L252.0 521.0L253.5 521.8L255.0 521.9L256.5 521.3L258.0 520.0L259.5 518.0L261.0 515.7L262.5 513.2L264.0 510.5L265.5 508.0L267.0 505.5L268.5 503.1L270.0 500.8L271.5 498.6L273.0 496.2L274.5 493.8L276.0 491.2L277.5 488.6L279.0 486.0L280.5 483.6L282.0 481.6L283.5 480.0L285.0 479.2L286.5 479.0L288.0 479.7L289.5 481.0L291.0 482.9L292.5 485.2L294.0 487.7L295.5 490.4L297.0 493.0L298.5 495.4L300.0 497.8L301.0 498.2L306.1 509.5L308.6 520.9L312.4 512.1L315.7 520.9L319.2 528.5L322.5 524.7L326.3 501.9L329.4 500.7L333.9 507.0L339.0 500.7L341.5 489.3L345.3 474.1L347.8 464.0L350.4 469.0L354.2 472.8L358.0 489.3L360.5 501.9L362.3 517.1L363.8 524.7L366.3 509.5L369.4 496.9L372.4 484.2L375.7 508.3L379.0 477.9L382.0 496.9L385.8 500.7L389.1 504.5L392.2 512.1L394.7 486.8L398.5 485.5L401.0 480.4L404.3 465.2L407.3 484.2L409.4 481.7L413.7 501.9L416.2 503.2L420.0 504.5L422.5 526.0L425.6 499.4L428.9 499.4L432.2 528.5L435.2 499.4L438.2 504.5L442.8 479.2L444.7 507.0L447.7 499.4L450.3 489.3L454.6 451.3L456.6 491.8L458.4 519.7L460.4 491.8L463.4 476.6L466.7 496.9L469.2 507.0L470.5 496.9L474.3 529.8L476.8 476.6L479.4 486.8L481.9 504.5L484.4 524.7L488.7 504.5L492.0 514.6L495.3 532.3L498.4 501.9L502.2 496.9L505.2 477.9L507.2 509.5L509.7 522.2L512.3 509.5L514.3 471.6L517.3 484.2L521.1 489.3L523.7 484.2L526.7 472.8L530.0 499.4L532.5 504.5L536.3 524.7L538.9 484.2L540.9 472.8L543.4 484.2L545.2 499.4L549.0 512.1L551.5 510.8L554.1 514.6L557.8 529.8L561.6 499.4L564.2 496.9L568.0 477.9L571.8 527.3L575.6 499.4L579.4 474.1L581.9 476.6L584.9 489.3L589.5 464.0L592.0 499.4L595.8 507.0L599.6 523.5L603.4 479.2L605.9 486.8L608.5 504.5L611.8 527.3L616.1 512.1L618.6 527.3L621.9 542.5L624.9 494.4L627.5 499.4L631.3 466.5L634.6 509.5L637.6 481.7L641.4 471.6L645.2 466.5L647.2 465.2" fill="none" stroke="#e88a10" stroke-width="1.15" stroke-linejoin="round" clip-path="url(#c3)"/>
<path d="M16.5 508.3L18.0 502.1L19.5 495.8L21.0 489.6L22.5 483.6L24.0 478.1L25.5 473.0L27.0 468.5L28.5 464.7L30.0 461.7L31.5 459.6L33.0 458.4L34.5 458.1L36.0 458.8L37.5 460.4L39.0 462.8L40.5 466.1L42.0 470.2L43.5 474.9L45.0 480.2L46.5 486.0L48.0 492.1L49.5 498.3L51.0 504.6L52.5 510.8L54.0 516.8L55.5 522.4L57.0 527.5L58.5 532.0L60.0 535.8L61.5 538.8L63.0 540.9L64.5 542.2L66.0 542.5L67.5 541.9L69.0 540.3L70.5 537.9L72.0 534.6L73.5 530.5L75.0 525.8L76.5 520.5L78.0 514.8L79.5 508.8L81.0 502.5L82.5 496.2L84.0 490.0L85.5 484.0L87.0 478.4L88.5 473.3L90.0 468.8L91.5 464.9L93.0 461.9L94.5 459.7L96.0 458.5L97.5 458.1L99.0 458.7L100.5 460.2L102.0 462.6L103.5 465.9L105.0 469.9L106.5 474.6L108.0 479.9L109.5 485.6L111.0 491.6L112.5 497.9L114.0 504.2L115.5 510.4L117.0 516.4L118.5 522.0L120.0 527.1L121.5 531.7L123.0 535.5L124.5 538.6L126.0 540.8L127.5 542.1L129.0 542.5L130.5 541.9L132.0 540.4L133.5 538.1L135.0 534.8L136.5 530.8L138.0 526.2L139.5 520.9L141.0 515.2L142.5 509.2L144.0 502.9L145.5 496.6L147.0 490.4L148.5 484.4L150.0 478.8L151.5 473.6L153.0 469.0L154.5 465.2L156.0 462.1L157.5 459.8L159.0 458.5L160.5 458.1L162.0 458.6L163.5 460.1L165.0 462.5L166.5 465.6L168.0 469.6L169.5 474.3L171.0 479.5L172.5 485.2L174.0 491.2L175.5 497.5L177.0 503.8L178.5 510.0L180.0 516.0L181.5 521.6L183.0 526.8L184.5 531.4L186.0 535.3L187.5 538.4L189.0 540.7L190.5 542.1L192.0 542.5L193.5 542.0L195.0 540.6L196.5 538.2L198.0 535.1L199.5 531.1L201.0 526.5L202.5 521.3L204.0 515.6L205.5 509.6L207.0 503.3L208.5 497.0L210.0 490.8L211.5 484.8L213.0 479.1L214.5 473.9L216.0 469.3L217.5 465.4L219.0 462.3L220.5 460.0L222.0 458.6L223.5 458.1L225.0 458.6L226.5 460.0L228.0 462.3L229.5 465.4L231.0 469.3L232.5 473.9L234.0 479.1L235.5 484.8L237.0 490.8L238.5 497.0L240.0 503.3L241.5 509.6L243.0 515.6L244.5 521.3L246.0 526.5L247.5 531.1L249.0 535.1L250.5 538.2L252.0 540.6L253.5 542.0L255.0 542.5L256.5 542.1L258.0 540.7L259.5 538.4L261.0 535.3L262.5 531.4L264.0 526.8L265.5 521.6L267.0 516.0L268.5 510.0L270.0 503.8L271.5 497.5L273.0 491.2L274.5 485.2L276.0 479.5L277.5 474.3L279.0 469.6L280.5 465.6L282.0 462.5L283.5 460.1L285.0 458.6L286.5 458.1L288.0 458.5L289.5 459.8L291.0 462.1L292.5 465.2L294.0 469.0L295.5 473.6L297.0 478.8L298.5 484.4L300.0 490.4L301.0 494.4L307.3 522.2L315.7 551.3L320.0 539.9L325.1 519.7L328.4 534.9L331.4 514.6L335.2 501.9L337.7 476.6L340.3 451.3L342.8 431.1M345.3 431.1L347.8 451.3L351.6 469.0L355.4 484.2L359.2 501.9L361.8 476.6L365.6 452.6L368.1 476.6L370.6 509.5L373.2 539.9L377.0 570.3M392.2 570.3L393.4 527.3L395.9 489.3L398.5 451.3L402.3 431.1M408.6 431.1L411.1 446.3L413.7 458.9L416.2 474.1L420.0 469.0L422.5 481.7L425.1 501.9L427.6 517.1L431.4 537.4L435.2 562.7L435.1 562.7L440.1 545.0L445.2 528.5L449.0 538.7L452.8 522.2L456.6 489.3L460.4 476.6L464.2 446.3L466.7 431.1M470.5 431.1L474.3 447.5L476.8 446.3L479.4 439.9L481.9 456.4L484.4 489.3L487.0 524.7L489.5 529.8L492.0 517.1L494.6 532.3L498.4 545.0L505.9 555.1L510.5 557.6L512.3 527.3L514.1 491.8L516.1 476.6L517.3 470.3L519.9 484.2L523.7 494.4L525.7 471.6L527.5 453.8L530.0 439.9L532.5 437.4L536.3 438.7L540.1 445.0L542.7 442.5L545.2 464.0L547.7 501.9L549.5 534.9L552.8 522.2L555.3 504.5L557.8 527.3L560.4 552.6L565.4 561.4L570.5 558.9L574.3 562.7L576.8 517.1L579.4 479.2L581.9 467.8L584.4 486.8L587.5 496.9L590.0 471.6L592.5 446.3L595.8 437.4L599.6 436.1L603.4 431.1M607.2 431.1L609.7 464.0L611.0 501.9L612.8 552.6L616.1 522.2L618.6 512.1L621.1 527.3L623.7 545.0L626.2 550.1L630.0 537.4L632.5 552.6L636.3 567.8L638.9 567.8L641.4 547.5L643.9 527.3L647.2 501.9" fill="none" stroke="#f010f0" stroke-width="1.15" stroke-linejoin="round" clip-path="url(#c3)"/>
<text x="18.0" y="155.7" font-size="10.2" fill="#c0c0c4" font-weight="bold" textLength="46.0" lengthAdjust="spacingAndGlyphs">-600.000 s</text>
<text x="316.5" y="62.8" font-size="9.9" fill="#f4f4f4" font-weight="bold" textLength="29.0" lengthAdjust="spacingAndGlyphs">&lt;Main&gt;</text>
<text x="613.0" y="155.7" font-size="10.2" fill="#c0c0c4" font-weight="bold" textLength="32.0" lengthAdjust="spacingAndGlyphs">0.000 s</text>
<text x="17.3" y="165.1" font-size="9.9" fill="#e8e010" font-weight="bold" textLength="13.5" lengthAdjust="spacingAndGlyphs">CH1</text>
<text x="17.3" y="174.7" font-size="9.9" fill="#10d8e0" font-weight="bold" textLength="13.5" lengthAdjust="spacingAndGlyphs">CH4</text>
<text x="93.0" y="165.1" font-size="9.9" fill="#e8e010" font-weight="bold" textLength="28.0" lengthAdjust="spacingAndGlyphs">510.0V</text>
<text x="93.0" y="174.7" font-size="9.9" fill="#10d8e0" font-weight="bold" textLength="28.0" lengthAdjust="spacingAndGlyphs">5.000V</text>
<text x="88.3" y="284.3" font-size="9.9" fill="#e8e010" font-weight="bold" textLength="32.7" lengthAdjust="spacingAndGlyphs">-490.0V</text>
<text x="88.3" y="293.5" font-size="9.9" fill="#10d8e0" font-weight="bold" textLength="32.7" lengthAdjust="spacingAndGlyphs">-5.000V</text>
<text x="313.6" y="167.3" font-size="9.9" fill="#f4f4f4" font-weight="bold" textLength="33.0" lengthAdjust="spacingAndGlyphs">&lt;Zoom1&gt;</text>
<path d="M582.3 164.2L584.6 162V166.4ZM587.8 164.2L585.5 162V166.4ZM584 163.6H586.2V164.8H584Z" fill="#f4f4f4"/>
<text x="588.3" y="168.8" font-size="13.1" fill="#f4f4f4" textLength="51.0" lengthAdjust="spacingAndGlyphs">20ms/div</text>
<text x="17.3" y="302.3" font-size="9.9" fill="#18e020" font-weight="bold" textLength="13.5" lengthAdjust="spacingAndGlyphs">CH2</text>
<text x="17.3" y="311.7" font-size="9.9" fill="#f01818" font-weight="bold" textLength="13.5" lengthAdjust="spacingAndGlyphs">CH5</text>
<text x="93.0" y="302.3" font-size="9.9" fill="#18e020" font-weight="bold" textLength="28.0" lengthAdjust="spacingAndGlyphs">508.0V</text>
<text x="93.0" y="311.7" font-size="9.9" fill="#f01818" font-weight="bold" textLength="28.0" lengthAdjust="spacingAndGlyphs">5.000V</text>
<text x="88.3" y="421.7" font-size="9.9" fill="#18e020" font-weight="bold" textLength="32.7" lengthAdjust="spacingAndGlyphs">-492.0V</text>
<text x="88.3" y="430.8" font-size="9.9" fill="#f01818" font-weight="bold" textLength="32.7" lengthAdjust="spacingAndGlyphs">-5.000V</text>
<text x="17.3" y="439.5" font-size="9.9" fill="#f818f8" font-weight="bold" textLength="13.5" lengthAdjust="spacingAndGlyphs">CH3</text>
<text x="17.3" y="449.0" font-size="9.9" fill="#f09010" font-weight="bold" textLength="13.5" lengthAdjust="spacingAndGlyphs">CH6</text>
<text x="93.0" y="439.5" font-size="9.9" fill="#f818f8" font-weight="bold" textLength="28.0" lengthAdjust="spacingAndGlyphs">500.0V</text>
<text x="93.0" y="449.0" font-size="9.9" fill="#f09010" font-weight="bold" textLength="28.0" lengthAdjust="spacingAndGlyphs">5.000V</text>
<text x="88.3" y="559.1" font-size="9.9" fill="#f818f8" font-weight="bold" textLength="32.7" lengthAdjust="spacingAndGlyphs">-500.0V</text>
<text x="88.3" y="568.2" font-size="9.9" fill="#f09010" font-weight="bold" textLength="32.7" lengthAdjust="spacingAndGlyphs">-5.000V</text>
<text x="18.0" y="568.7" font-size="9" fill="#c0c0c4" textLength="36.0" lengthAdjust="spacingAndGlyphs">-2.257 s</text>
<text x="607.5" y="568.7" font-size="9" fill="#c0c0c4" textLength="37.0" lengthAdjust="spacingAndGlyphs">-2.257 s</text>
<text x="27.3" y="550.2" font-size="12.8" fill="#ffffff" textLength="19.0" lengthAdjust="spacingAndGlyphs" stroke="#ffffff" stroke-width="0.3">RMS</text>
<text x="66.8" y="550.2" font-size="12.8" fill="#ffffff" textLength="22.5" lengthAdjust="spacingAndGlyphs" stroke="#ffffff" stroke-width="0.3">:CH1</text>
<text x="134.6" y="550.2" font-size="12.8" fill="#ffffff" textLength="49.2" lengthAdjust="spacingAndGlyphs" stroke="#ffffff" stroke-width="0.3">214.293V</text>
<text x="27.3" y="566.2" font-size="12.8" fill="#ffffff" textLength="19.0" lengthAdjust="spacingAndGlyphs" stroke="#ffffff" stroke-width="0.3">RMS</text>
<text x="66.8" y="566.2" font-size="12.8" fill="#ffffff" textLength="22.5" lengthAdjust="spacingAndGlyphs" stroke="#ffffff" stroke-width="0.3">:CH4</text>
<text x="134.6" y="566.2" font-size="12.8" fill="#ffffff" textLength="49.2" lengthAdjust="spacingAndGlyphs" stroke="#ffffff" stroke-width="0.3">1.30956V</text>
<text x="233.9" y="550.2" font-size="12.8" fill="#ffffff" textLength="19.0" lengthAdjust="spacingAndGlyphs" stroke="#ffffff" stroke-width="0.3">RMS</text>
<text x="273.4" y="550.2" font-size="12.8" fill="#ffffff" textLength="22.5" lengthAdjust="spacingAndGlyphs" stroke="#ffffff" stroke-width="0.3">:CH2</text>
<text x="341.2" y="550.2" font-size="12.8" fill="#ffffff" textLength="49.2" lengthAdjust="spacingAndGlyphs" stroke="#ffffff" stroke-width="0.3">41.8168V</text>
<text x="233.9" y="566.2" font-size="12.8" fill="#ffffff" textLength="19.0" lengthAdjust="spacingAndGlyphs" stroke="#ffffff" stroke-width="0.3">RMS</text>
<text x="273.4" y="566.2" font-size="12.8" fill="#ffffff" textLength="22.5" lengthAdjust="spacingAndGlyphs" stroke="#ffffff" stroke-width="0.3">:CH5</text>
<text x="341.2" y="566.2" font-size="12.8" fill="#ffffff" textLength="49.2" lengthAdjust="spacingAndGlyphs" stroke="#ffffff" stroke-width="0.3">1.33342V</text>
<text x="440.5" y="550.2" font-size="12.8" fill="#ffffff" textLength="19.0" lengthAdjust="spacingAndGlyphs" stroke="#ffffff" stroke-width="0.3">RMS</text>
<text x="480.0" y="550.2" font-size="12.8" fill="#ffffff" textLength="22.5" lengthAdjust="spacingAndGlyphs" stroke="#ffffff" stroke-width="0.3">:CH3</text>
<text x="547.8" y="550.2" font-size="12.8" fill="#ffffff" textLength="49.2" lengthAdjust="spacingAndGlyphs" stroke="#ffffff" stroke-width="0.3">213.345V</text>
<text x="440.5" y="566.2" font-size="12.8" fill="#ffffff" textLength="19.0" lengthAdjust="spacingAndGlyphs" stroke="#ffffff" stroke-width="0.3">RMS</text>
<text x="480.0" y="566.2" font-size="12.8" fill="#ffffff" textLength="22.5" lengthAdjust="spacingAndGlyphs" stroke="#ffffff" stroke-width="0.3">:CH6</text>
<text x="547.8" y="566.2" font-size="12.8" fill="#ffffff" textLength="55.4" lengthAdjust="spacingAndGlyphs" stroke="#ffffff" stroke-width="0.3">824.829mV</text>
<rect x="7.8" y="224.8" width="7.5" height="1.3" fill="#10b0c0"/><rect x="10.8" y="226.10000000000002" width="4.5" height="1.3" fill="#d8c810"/><rect x="10.1" y="226.10000000000002" width="1.3" height="2" fill="#10b0c0"/>
<path d="M8.4 228.4H14.2L11.3 233.4Z" fill="#10b0c0" stroke="#d8c810" stroke-width="0.9"/>
<rect x="7.8" y="362.2" width="7.5" height="1.3" fill="#d01818"/><rect x="10.8" y="363.5" width="4.5" height="1.3" fill="#30c020"/><rect x="10.1" y="363.5" width="1.3" height="2" fill="#d01818"/>
<path d="M8.4 365.8H14.2L11.3 370.8Z" fill="#d01818" stroke="#30c020" stroke-width="0.9"/>
<path d="M7.2 493.5H11.2M9.2 493.5V499.5M7.2 499.5H11.2" stroke="#f018f0" stroke-width="1.30" fill="none"/>
<path d="M10.6 495.5L15.4 499.5L10.6 501.7Z" fill="#f018f0"/>
<path d="M11.2 501.5V503.5M8.0 503.5H14.2" stroke="#f018f0" stroke-width="1.20" fill="none"/>
<path d="M8.6 504.9H13.8L11.2 508.5Z" fill="#f018f0"/>
<rect x="8.8" y="69.3" width="6.5" height="1.3" fill="#10b8c8"/><rect x="11.0" y="70.3" width="1.2" height="3" fill="#10b8c8"/><path d="M8.600000000000001 72.89999999999999H14.4L11.5 77.3Z" fill="#10a0b0"/>
<rect x="8.6" y="103.2" width="6.5" height="1.3" fill="#d02010"/><rect x="10.8" y="104.2" width="1.2" height="3" fill="#d02010"/><path d="M8.4 106.8H14.2L11.3 111.2Z" fill="#a09010"/>
<path d="M8 132H11.68M9.84 132V137.52M8 137.52H11.68" stroke="#f018f0" stroke-width="1.20" fill="none"/>
<path d="M11.1 133.8L15.5 137.5L11.1 139.5Z" fill="#f018f0"/>
<path d="M11.7 139.4V141.2M8.7 141.2H14.4" stroke="#f018f0" stroke-width="1.10" fill="none"/>
<path d="M9.3 142.5H14.1L11.7 145.8Z" fill="#f018f0"/>
<path d="M645 70.3H648.6" stroke="#10c8d0" stroke-width="1.1"/><path d="M648.2 70.3L654 67.39999999999999V73.2Z" fill="#10c8d0"/>
<path d="M645 104.5H648.6" stroke="#18c020" stroke-width="1.1"/><path d="M648.2 104.5L654 101.6V107.4Z" fill="#e01818"/>
<path d="M645 138.9H648.6" stroke="#f010f0" stroke-width="1.1"/><path d="M648.2 138.9L654 136.0V141.8Z" fill="#f010f0"/>
<path d="M803 59.2H800.5Q798.3 59.2 798.3 62V76.6Q798.3 79.4 800.5 79.4H803" fill="#eaecf2" stroke="#3e4c5a" stroke-width="1.1"/>
<rect x="798" y="61.9" width="2.2" height="15.7" fill="#b8c0d0"/>
<rect x="659.1" y="58.9" width="137.69999999999993" height="20.7" rx="4.8" fill="url(#bg)" stroke="#66768a" stroke-width="1.1"/>
<path d="M659.1 74.8Q659.1 79.6 663.9 79.6H792.0Q796.8 79.6 796.8 74.8" fill="none" stroke="#2e4054" stroke-width="1.7"/>
<rect x="798" y="84.0" width="2.2" height="63.5" fill="#b8c0d0"/>
<rect x="659.1" y="81.0" width="137.69999999999993" height="68.5" rx="4.8" fill="url(#bg)" stroke="#66768a" stroke-width="1.1"/>
<path d="M659.4 85.8Q659.4 81.0 663.9 81.0H792.0Q796.5 81.0 796.5 85.8" fill="none" stroke="#fbfcfe" stroke-width="1.1"/>
<path d="M659.1 144.8Q659.1 149.6 663.9 149.6H792.0Q796.8 149.6 796.8 144.8" fill="none" stroke="#2e4054" stroke-width="1.7"/>
<rect x="798" y="154.0" width="2.2" height="63.6" fill="#b8c0d0"/>
<rect x="659.1" y="151.0" width="137.69999999999993" height="68.6" rx="4.8" fill="url(#bg)" stroke="#66768a" stroke-width="1.1"/>
<path d="M659.4 155.8Q659.4 151.0 663.9 151.0H792.0Q796.5 151.0 796.5 155.8" fill="none" stroke="#fbfcfe" stroke-width="1.1"/>
<path d="M659.1 214.8Q659.1 219.6 663.9 219.6H792.0Q796.8 219.6 796.8 214.8" fill="none" stroke="#2e4054" stroke-width="1.7"/>
<rect x="798" y="224.0" width="2.2" height="63.6" fill="#b8c0d0"/>
<rect x="659.1" y="221.0" width="137.69999999999993" height="68.6" rx="4.8" fill="url(#bg)" stroke="#66768a" stroke-width="1.1"/>
<path d="M659.4 225.8Q659.4 221.0 663.9 221.0H792.0Q796.5 221.0 796.5 225.8" fill="none" stroke="#fbfcfe" stroke-width="1.1"/>
<path d="M659.1 284.8Q659.1 289.6 663.9 289.6H792.0Q796.8 289.6 796.8 284.8" fill="none" stroke="#2e4054" stroke-width="1.7"/>
<rect x="798" y="294.1" width="2.2" height="63.6" fill="#b8c0d0"/>
<rect x="659.1" y="291.1" width="137.69999999999993" height="68.6" rx="4.8" fill="url(#bg)" stroke="#66768a" stroke-width="1.1"/>
<path d="M659.4 295.9Q659.4 291.1 663.9 291.1H792.0Q796.5 291.1 796.5 295.9" fill="none" stroke="#fbfcfe" stroke-width="1.1"/>
<path d="M659.1 354.8Q659.1 359.6 663.9 359.6H792.0Q796.8 359.6 796.8 354.8" fill="none" stroke="#2e4054" stroke-width="1.7"/>
<rect x="798" y="364.1" width="2.2" height="63.6" fill="#b8c0d0"/>
<rect x="659.1" y="361.1" width="137.69999999999993" height="68.6" rx="4.8" fill="url(#bg)" stroke="#66768a" stroke-width="1.1"/>
<path d="M659.4 365.9Q659.4 361.1 663.9 361.1H792.0Q796.5 361.1 796.5 365.9" fill="none" stroke="#fbfcfe" stroke-width="1.1"/>
<path d="M659.1 424.8Q659.1 429.6 663.9 429.6H792.0Q796.8 429.6 796.8 424.8" fill="none" stroke="#2e4054" stroke-width="1.7"/>
<rect x="798" y="434.1" width="2.2" height="63.6" fill="#b8c0d0"/>
<rect x="659.1" y="431.1" width="137.69999999999993" height="68.6" rx="4.8" fill="url(#bg)" stroke="#66768a" stroke-width="1.1"/>
<path d="M659.4 435.9Q659.4 431.1 663.9 431.1H792.0Q796.5 431.1 796.5 435.9" fill="none" stroke="#fbfcfe" stroke-width="1.1"/>
<path d="M659.1 494.8Q659.1 499.6 663.9 499.6H792.0Q796.8 499.6 796.8 494.8" fill="none" stroke="#2e4054" stroke-width="1.7"/>
<rect x="659.7" y="502.8" width="139.09999999999994" height="69.2" rx="6" fill="#6e7682"/>
<rect x="659.1" y="501.6" width="137.29999999999993" height="67.8" rx="5.5" fill="url(#bg)" stroke="#7a828c" stroke-width="1"/>
<path d="M660.0 563.4V507.6Q660.0 502.6 665.1 502.6H789.8" fill="none" stroke="#fff" stroke-width="1.1"/>
<text x="694.7" y="75.2" font-size="16.6" font-weight="300" fill="#3e4e60" textLength="64.0" lengthAdjust="spacingAndGlyphs">文件保存</text>
<text x="694.7" y="121.5" font-size="16.6" font-weight="300" fill="#3e4e60" textLength="64.0" lengthAdjust="spacingAndGlyphs">文件列表</text>
<text x="702.7" y="191.2" font-size="16.6" font-weight="300" fill="#3e4e60" textLength="48.0" lengthAdjust="spacingAndGlyphs">文件名</text>
<text x="694.7" y="245.0" font-size="16.6" font-weight="300" fill="#3e4e60" textLength="64.0" lengthAdjust="spacingAndGlyphs">数据类型</text>
<text x="710.7" y="314.8" font-size="16.6" font-weight="300" fill="#3e4e60" textLength="32.0" lengthAdjust="spacingAndGlyphs">格式</text>
<text x="710.7" y="385.5" font-size="16.6" font-weight="300" fill="#3e4e60" textLength="32.0" lengthAdjust="spacingAndGlyphs">颜色</text>
<text x="710.7" y="455.7" font-size="16.6" font-weight="300" fill="#3e4e60" textLength="32.0" lengthAdjust="spacingAndGlyphs">背景</text>
<text x="694.7" y="541.2" font-size="16.6" font-weight="300" fill="#3e4e60" textLength="64.0" lengthAdjust="spacingAndGlyphs">执行保存</text>
<path d="M668.6 96L676.4 91.8V100.2Z" fill="#f4f5f8" stroke="#3c4a5a" stroke-width="1.2" stroke-linejoin="miter"/>
<path d="M668.6 166.2L676.4 162.0V170.39999999999998Z" fill="#f4f5f8" stroke="#3c4a5a" stroke-width="1.2" stroke-linejoin="miter"/>
<rect x="693.2" y="267.8" width="69.09999999999991" height="15.599999999999966" fill="#6b99f4"/>
<text x="694.6" y="281.1" font-size="16.2" font-weight="300" fill="#fff" textLength="66.0" lengthAdjust="spacingAndGlyphs">屏幕画面</text>
<rect x="712.8" y="337.8" width="30.40000000000009" height="15.399999999999977" fill="#6b99f4"/>
<text x="728.0" y="350.8" font-size="14.6" fill="#fff" text-anchor="middle" textLength="27.0" lengthAdjust="spacingAndGlyphs">PNG</text>
<rect x="696" y="408" width="64" height="15.600000000000023" fill="#6b99f4"/>
<rect x="698.6" y="410" width="18.6" height="11.8" fill="#101010"/><path d="M700 415.5L703 412.6L706 415.8L709.5 412.4L711.6 414.2" stroke="#e82020" stroke-width="1.2" fill="none"/><path d="M700 418.5L703 420L706.5 417.8L709.5 420L711.8 418.5" stroke="#20c040" stroke-width="1.1" fill="none"/>
<path d="M713 411.8H716.4M713 414.4H716.4M713 417H716.4M713 419.6H716.4" stroke="#f0f0f0" stroke-width="1.2"/>
<text x="725.5" y="421.9" font-size="16.2" font-weight="300" fill="#fff" textLength="32.0" lengthAdjust="spacingAndGlyphs">打开</text>
<rect x="709" y="478" width="38" height="16" fill="#6b99f4"/>
<text x="712.0" y="492.1" font-size="16.2" font-weight="300" fill="#fff" textLength="32.0" lengthAdjust="spacingAndGlyphs">常规</text>
<text x="14.0" y="587.0" font-size="13" fill="#ffffff" textLength="44.5" lengthAdjust="spacingAndGlyphs" stroke="#ffffff" stroke-width="0.3">Stopped</text>
<text x="141.0" y="587.0" font-size="13" fill="#ffffff" stroke="#ffffff" stroke-width="0.3">1</text>
<path d="M689 576H699L696.8 584H686Z" fill="#f6f8fc"/><rect x="685" y="584.4" width="15.2" height="3.8" fill="#f6f8fc"/><path d="M687.5 586.3H697.7" stroke="#4a72bc" stroke-width="0.9"/>
<text x="702.3" y="586.8" font-size="13.4" fill="#ffffff" textLength="29.2" lengthAdjust="spacingAndGlyphs" stroke="#ffffff" stroke-width="0.3">:File</text>
<rect x="141.0" y="591.6" width="3.2" height="1.4" fill="#f2f4f8" opacity="0.8"/>
<rect x="147.4" y="591.6" width="1.5" height="1.4" fill="#f2f4f8" opacity="0.8"/>
<rect x="150.7" y="591.6" width="3.2" height="1.4" fill="#f2f4f8" opacity="0.8"/>
<rect x="154.0" y="591.6" width="3.2" height="1.4" fill="#f2f4f8" opacity="0.8"/>
<rect x="158.2" y="591.6" width="1.5" height="1.4" fill="#f2f4f8" opacity="0.8"/>
<rect x="161.5" y="591.6" width="3.2" height="1.4" fill="#f2f4f8" opacity="0.8"/>
<rect x="167.9" y="591.6" width="3.2" height="1.4" fill="#f2f4f8" opacity="0.8"/>
<rect x="174.3" y="591.6" width="1.5" height="1.4" fill="#f2f4f8" opacity="0.8"/>
<rect x="178.5" y="591.6" width="1.5" height="1.4" fill="#f2f4f8" opacity="0.8"/>
<rect x="182.7" y="591.6" width="1.5" height="1.4" fill="#f2f4f8" opacity="0.8"/>
<rect x="186.9" y="591.6" width="2.5" height="1.4" fill="#f2f4f8" opacity="0.8"/>
<rect x="193.3" y="591.6" width="3.2" height="1.4" fill="#f2f4f8" opacity="0.8"/>
<rect x="196.6" y="591.6" width="3.2" height="1.4" fill="#f2f4f8" opacity="0.8"/>
<rect x="200.8" y="591.6" width="2.5" height="1.4" fill="#f2f4f8" opacity="0.8"/>
<rect x="207.2" y="591.6" width="3.2" height="1.4" fill="#f2f4f8" opacity="0.8"/>
<rect x="213.6" y="591.6" width="1.5" height="1.4" fill="#f2f4f8" opacity="0.8"/>
<rect x="216.9" y="591.6" width="3.2" height="1.4" fill="#f2f4f8" opacity="0.8"/>
<rect x="220.2" y="591.6" width="1.5" height="1.4" fill="#f2f4f8" opacity="0.8"/>
<rect x="223.5" y="591.6" width="1.5" height="1.4" fill="#f2f4f8" opacity="0.8"/>
<rect x="226.8" y="591.6" width="1.5" height="1.4" fill="#f2f4f8" opacity="0.8"/>
<rect x="231.0" y="591.6" width="3.2" height="1.4" fill="#f2f4f8" opacity="0.8"/>
<rect x="686.0" y="591.6" width="3.2" height="1.4" fill="#f2f4f8" opacity="0.8"/>
<rect x="690.2" y="591.6" width="3.2" height="1.4" fill="#f2f4f8" opacity="0.8"/>
<rect x="694.4" y="591.6" width="2.5" height="1.4" fill="#f2f4f8" opacity="0.8"/>
<rect x="700.8" y="591.6" width="1.5" height="1.4" fill="#f2f4f8" opacity="0.8"/>
<rect x="704.1" y="591.6" width="3.2" height="1.4" fill="#f2f4f8" opacity="0.8"/>
<rect x="710.5" y="591.6" width="2.5" height="1.4" fill="#f2f4f8" opacity="0.8"/>
<rect x="713.8" y="591.6" width="3.2" height="1.4" fill="#f2f4f8" opacity="0.8"/>
<rect x="718.0" y="591.6" width="3.2" height="1.4" fill="#f2f4f8" opacity="0.8"/>
<rect x="721.3" y="591.6" width="2.5" height="1.4" fill="#f2f4f8" opacity="0.8"/>
<rect x="725.5" y="591.6" width="3.2" height="1.4" fill="#f2f4f8" opacity="0.8"/>
<rect x="728.8" y="591.6" width="1.5" height="1.4" fill="#f2f4f8" opacity="0.8"/>
<rect x="732.1" y="591.6" width="2.5" height="1.4" fill="#f2f4f8" opacity="0.8"/>
<rect x="738.5" y="591.6" width="3.2" height="1.4" fill="#f2f4f8" opacity="0.8"/>
<rect x="744.9" y="591.6" width="2.5" height="1.4" fill="#f2f4f8" opacity="0.8"/>
<rect x="748.2" y="591.6" width="2.5" height="1.4" fill="#f2f4f8" opacity="0.8"/>
<rect x="754.6" y="591.6" width="2.5" height="1.4" fill="#f2f4f8" opacity="0.8"/>
<rect x="761.0" y="591.6" width="1.5" height="1.4" fill="#f2f4f8" opacity="0.8"/>
<rect x="765.2" y="591.6" width="2.5" height="1.4" fill="#f2f4f8" opacity="0.8"/>
<rect x="769.4" y="591.6" width="3.2" height="1.4" fill="#f2f4f8" opacity="0.8"/>
<rect x="772.7" y="591.6" width="1.5" height="1.4" fill="#f2f4f8" opacity="0.8"/>
<rect x="776.0" y="591.6" width="1.5" height="1.4" fill="#f2f4f8" opacity="0.8"/>
<rect x="779.3" y="591.6" width="1.5" height="1.4" fill="#f2f4f8" opacity="0.8"/>
<rect x="785.7" y="591.6" width="1.5" height="1.4" fill="#f2f4f8" opacity="0.8"/>
<rect x="789.0" y="591.6" width="2.5" height="1.4" fill="#f2f4f8" opacity="0.8"/>
<rect x="795.4" y="591.6" width="3.2" height="1.4" fill="#f2f4f8" opacity="0.8"/>
</svg>
</body></html>
